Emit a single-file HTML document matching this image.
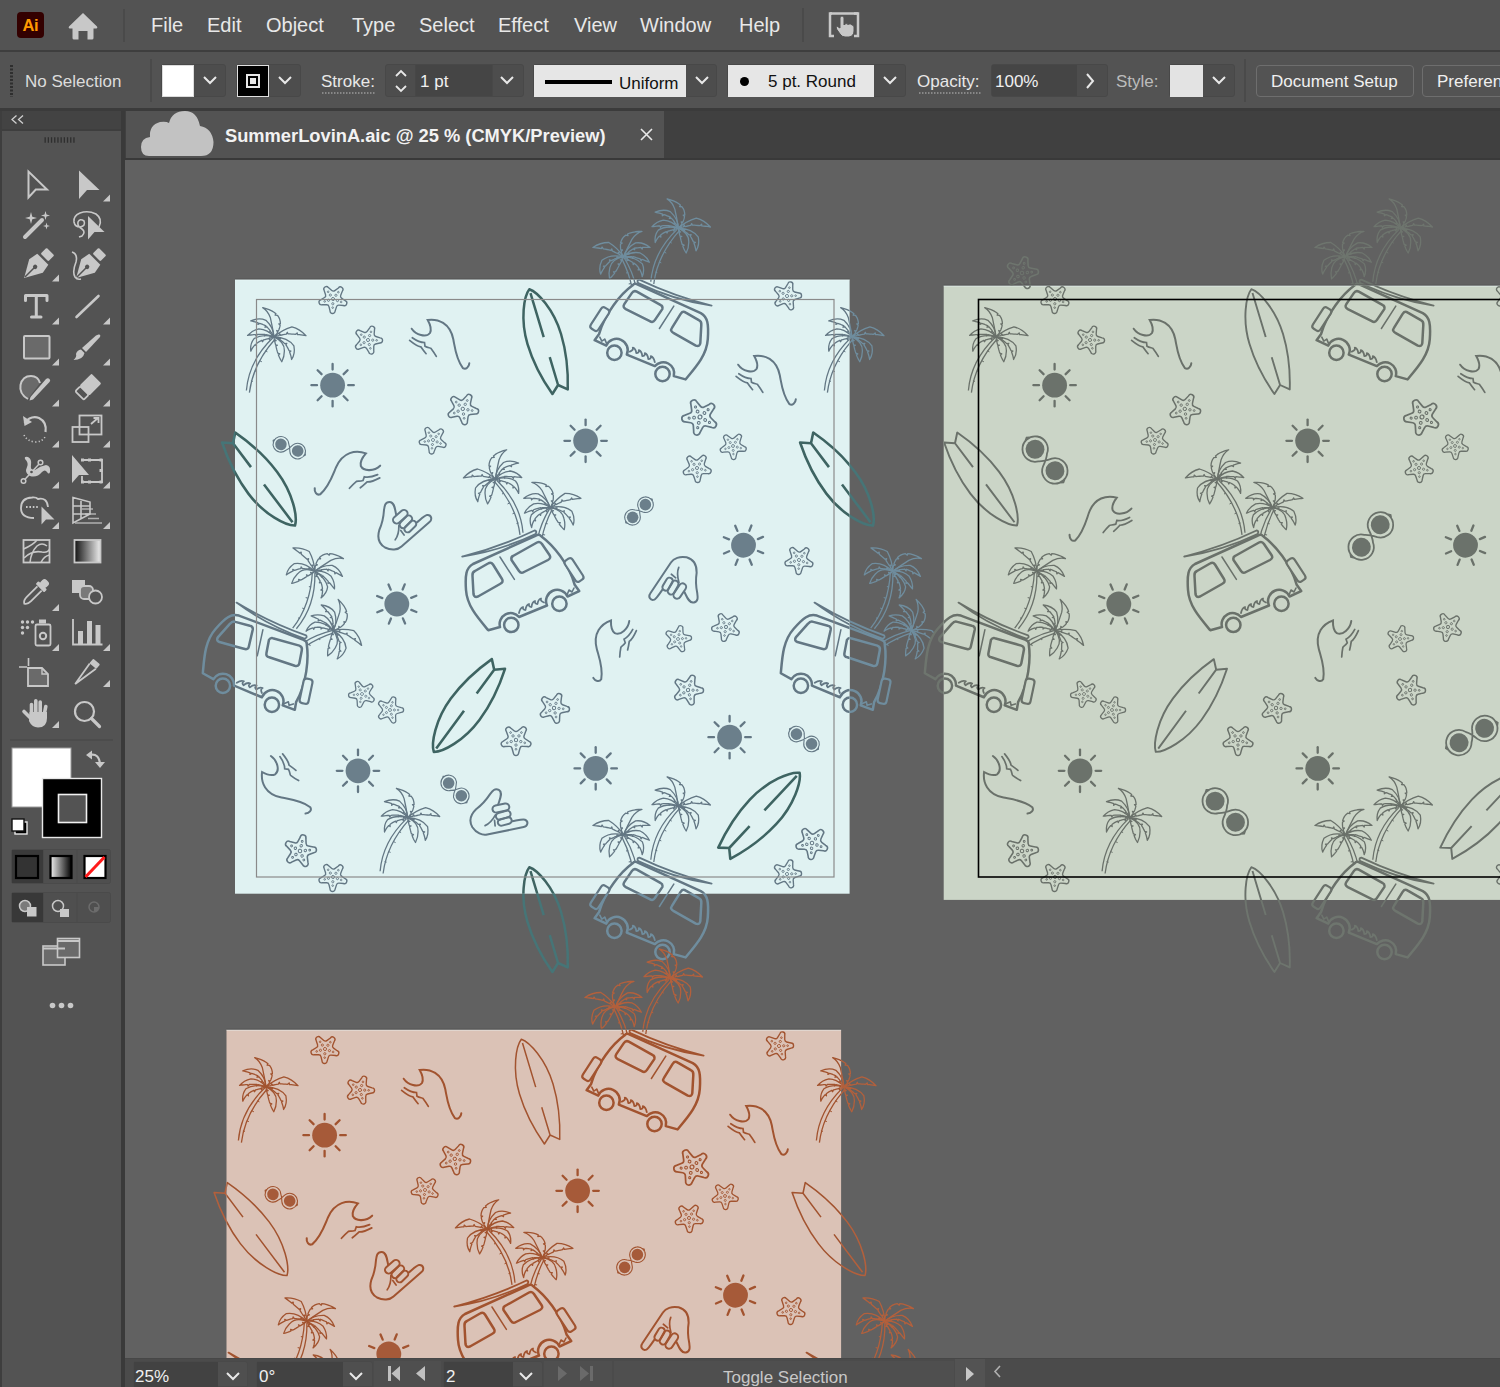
<!DOCTYPE html>
<html><head><meta charset="utf-8">
<style>
*{margin:0;padding:0;box-sizing:border-box}
html,body{width:1500px;height:1387px;overflow:hidden;background:#616161;font-family:"Liberation Sans",sans-serif;color:#e8e8e8}
.a{position:absolute}
.t{position:absolute;white-space:pre;line-height:1}
#menubar{left:0;top:0;width:1500px;height:50px;background:#535353}
#ctrlbar{left:0;top:52px;width:1500px;height:57px;background:#535353}
.line{position:absolute;background:#3b3b3b}
.box{position:absolute;border:1px solid #484848;border-radius:3px;background:#4d4d4d}
.dd{position:absolute}
.dd svg{position:absolute;left:50%;top:50%;transform:translate(-50%,-50%)}
</style></head><body>
<!-- canvas -->
<div class="a" style="left:125px;top:160px;width:1375px;height:1199px;background:#616161"></div>

<div id="art" class="a" style="left:0;top:0;width:1500px;height:1387px"><svg class="a" style="left:0;top:0" width="1500" height="1387" viewBox="0 0 1500 1387"><defs><g id="t1" stroke="currentColor"><g transform="translate(273.9 336.8)"><g fill="none" stroke-width="1.3" stroke-linejoin="round"><path d="M0 0 Q-1 -8 -3.5 -19 Q-6 -26 -11.2 -29.2 L-7.84 -28.28 -4.83 -27.21 -2.17 -25.98 0.13 -24.59 2.08 -23.05 1.23 -21.62 3.67 -21.35 4.91 -19.5 5.79 -17.49 6.32 -15.32 6.5 -13 4.87 -12.93 6.26 -11.43 5.92 -9.92 5.49 -8.47 4.98 -7.08 4.38 -5.75 2.83 -6.26 3.68 -4.48 2.9 -3.27 2.02 -2.12 1.05 -1.03 0 0Z"/><path d="M0 0 Q0 -9 -8 -16.5 Q-15 -19.5 -23.1 -15.9 L-21.67 -15.6 -20.22 -15.26 -18.76 -14.87 -17.28 -14.44 -15.78 -13.97 -15.98 -12.36 -14.26 -13.46 -12.72 -12.91 -11.16 -12.32 -9.59 -11.68 -8 -11 -8.95 -9.68 -7.02 -9.99 -6.08 -8.96 -5.18 -7.91 -4.32 -6.84 -3.5 -5.75 -4.65 -4.61 -2.72 -4.64 -1.98 -3.51 -1.28 -2.36 -0.62 -1.19 0 0Z"/><path d="M0 0 Q-6 -7.5 -15 -8 Q-22 -6.5 -26.3 -1.4 L-24.81 -1.61 -23.27 -1.8 -21.68 -1.96 -20.03 -2.1 -18.32 -2.23 -17.88 -0.65 -16.57 -2.32 -14.76 -2.4 -12.89 -2.46 -10.97 -2.49 -9 -2.5 -9.16 -0.89 -7.83 -2.21 -6.72 -1.92 -5.67 -1.64 -4.68 -1.38 -3.75 -1.12 -4.01 0.46 -2.88 -0.88 -2.07 -0.65 -1.32 -0.42 -0.63 -0.2 0 0Z"/><path d="M0 0 Q-12 -3 -20 2 Q-24 7 -23.1 14.4 L-22.43 12.96 -21.66 11.6 -20.8 10.31 -19.84 9.1 -18.77 7.97 -17.47 8.95 -17.62 6.92 -16.36 5.95 -15 5.06 -13.55 4.24 -12 3.5 -11.3 4.97 -10.44 3.1 -8.96 2.72 -7.56 2.34 -6.24 1.98 -5 1.62 -4.31 3.09 -3.84 1.28 -2.76 0.95 -1.76 0.62 -0.84 0.3 0 0Z"/><path d="M0 0 Q11 5 10.5 14 Q10.5 20 7.9 24.9 L7.14 23.68 6.42 22.38 5.73 20.99 5.08 19.52 4.47 17.98 5.87 17.12 3.9 16.34 3.37 14.63 2.88 12.84 2.42 10.96 2 9 3.48 8.35 1.71 8.01 1.44 7.04 1.19 6.09 0.96 5.16 0.75 4.25 2.28 3.74 0.56 3.36 0.39 2.49 0.24 1.64 0.11 0.81 0 0Z"/><path d="M0 0 Q14 0.5 20 9 Q21.5 17 17.7 22.7 L17.43 21.17 17.09 19.65 16.68 18.14 16.21 16.65 15.68 15.18 17.03 14.27 15.07 13.71 14.4 12.26 13.67 10.83 12.87 9.41 12 8 12.87 6.62 10.8 6.84 9.6 5.76 8.4 4.76 7.2 3.84 6 3 6.62 1.5 4.8 2.24 3.6 1.56 2.4 0.96 1.2 0.44 0 0Z"/><path d="M0 0 Q8 -7 18 -10 Q26 -8 32.1 -1.1 L30.46 -1.37 28.78 -1.62 27.07 -1.86 25.32 -2.08 23.52 -2.27 23.32 -3.9 21.7 -2.46 19.83 -2.62 17.92 -2.76 15.98 -2.89 14 -3 13.39 -4.51 12.42 -2.7 10.88 -2.4 9.38 -2.1 7.92 -1.8 6.5 -1.5 5.88 -3 5.12 -1.2 3.78 -0.9 2.48 -0.6 1.22 -0.3 0 0Z"/><path d="M-1 1 Q-25 24 -27.5 53.7 M1.5 2 Q-21 27 -24.5 55.9"/><path d="M-8.5 14 l2 1 M-14 24 l2 1 M-19 34 l2 0.8 M-23 44 l2 0.6" stroke-width="1"/></g></g><g transform="translate(851.9 336.8)"><g fill="none" stroke-width="1.3" stroke-linejoin="round"><path d="M0 0 Q-1 -8 -3.5 -19 Q-6 -26 -11.2 -29.2 L-7.84 -28.28 -4.83 -27.21 -2.17 -25.98 0.13 -24.59 2.08 -23.05 1.23 -21.62 3.67 -21.35 4.91 -19.5 5.79 -17.49 6.32 -15.32 6.5 -13 4.87 -12.93 6.26 -11.43 5.92 -9.92 5.49 -8.47 4.98 -7.08 4.38 -5.75 2.83 -6.26 3.68 -4.48 2.9 -3.27 2.02 -2.12 1.05 -1.03 0 0Z"/><path d="M0 0 Q0 -9 -8 -16.5 Q-15 -19.5 -23.1 -15.9 L-21.67 -15.6 -20.22 -15.26 -18.76 -14.87 -17.28 -14.44 -15.78 -13.97 -15.98 -12.36 -14.26 -13.46 -12.72 -12.91 -11.16 -12.32 -9.59 -11.68 -8 -11 -8.95 -9.68 -7.02 -9.99 -6.08 -8.96 -5.18 -7.91 -4.32 -6.84 -3.5 -5.75 -4.65 -4.61 -2.72 -4.64 -1.98 -3.51 -1.28 -2.36 -0.62 -1.19 0 0Z"/><path d="M0 0 Q-6 -7.5 -15 -8 Q-22 -6.5 -26.3 -1.4 L-24.81 -1.61 -23.27 -1.8 -21.68 -1.96 -20.03 -2.1 -18.32 -2.23 -17.88 -0.65 -16.57 -2.32 -14.76 -2.4 -12.89 -2.46 -10.97 -2.49 -9 -2.5 -9.16 -0.89 -7.83 -2.21 -6.72 -1.92 -5.67 -1.64 -4.68 -1.38 -3.75 -1.12 -4.01 0.46 -2.88 -0.88 -2.07 -0.65 -1.32 -0.42 -0.63 -0.2 0 0Z"/><path d="M0 0 Q-12 -3 -20 2 Q-24 7 -23.1 14.4 L-22.43 12.96 -21.66 11.6 -20.8 10.31 -19.84 9.1 -18.77 7.97 -17.47 8.95 -17.62 6.92 -16.36 5.95 -15 5.06 -13.55 4.24 -12 3.5 -11.3 4.97 -10.44 3.1 -8.96 2.72 -7.56 2.34 -6.24 1.98 -5 1.62 -4.31 3.09 -3.84 1.28 -2.76 0.95 -1.76 0.62 -0.84 0.3 0 0Z"/><path d="M0 0 Q11 5 10.5 14 Q10.5 20 7.9 24.9 L7.14 23.68 6.42 22.38 5.73 20.99 5.08 19.52 4.47 17.98 5.87 17.12 3.9 16.34 3.37 14.63 2.88 12.84 2.42 10.96 2 9 3.48 8.35 1.71 8.01 1.44 7.04 1.19 6.09 0.96 5.16 0.75 4.25 2.28 3.74 0.56 3.36 0.39 2.49 0.24 1.64 0.11 0.81 0 0Z"/><path d="M0 0 Q14 0.5 20 9 Q21.5 17 17.7 22.7 L17.43 21.17 17.09 19.65 16.68 18.14 16.21 16.65 15.68 15.18 17.03 14.27 15.07 13.71 14.4 12.26 13.67 10.83 12.87 9.41 12 8 12.87 6.62 10.8 6.84 9.6 5.76 8.4 4.76 7.2 3.84 6 3 6.62 1.5 4.8 2.24 3.6 1.56 2.4 0.96 1.2 0.44 0 0Z"/><path d="M0 0 Q8 -7 18 -10 Q26 -8 32.1 -1.1 L30.46 -1.37 28.78 -1.62 27.07 -1.86 25.32 -2.08 23.52 -2.27 23.32 -3.9 21.7 -2.46 19.83 -2.62 17.92 -2.76 15.98 -2.89 14 -3 13.39 -4.51 12.42 -2.7 10.88 -2.4 9.38 -2.1 7.92 -1.8 6.5 -1.5 5.88 -3 5.12 -1.2 3.78 -0.9 2.48 -0.6 1.22 -0.3 0 0Z"/><path d="M-1 1 Q-25 24 -27.5 53.7 M1.5 2 Q-21 27 -24.5 55.9"/><path d="M-8.5 14 l2 1 M-14 24 l2 1 M-19 34 l2 0.8 M-23 44 l2 0.6" stroke-width="1"/></g></g><g transform="translate(407.6 817.6)"><g fill="none" stroke-width="1.3" stroke-linejoin="round"><path d="M0 0 Q-1 -8 -3.5 -19 Q-6 -26 -11.2 -29.2 L-7.84 -28.28 -4.83 -27.21 -2.17 -25.98 0.13 -24.59 2.08 -23.05 1.23 -21.62 3.67 -21.35 4.91 -19.5 5.79 -17.49 6.32 -15.32 6.5 -13 4.87 -12.93 6.26 -11.43 5.92 -9.92 5.49 -8.47 4.98 -7.08 4.38 -5.75 2.83 -6.26 3.68 -4.48 2.9 -3.27 2.02 -2.12 1.05 -1.03 0 0Z"/><path d="M0 0 Q0 -9 -8 -16.5 Q-15 -19.5 -23.1 -15.9 L-21.67 -15.6 -20.22 -15.26 -18.76 -14.87 -17.28 -14.44 -15.78 -13.97 -15.98 -12.36 -14.26 -13.46 -12.72 -12.91 -11.16 -12.32 -9.59 -11.68 -8 -11 -8.95 -9.68 -7.02 -9.99 -6.08 -8.96 -5.18 -7.91 -4.32 -6.84 -3.5 -5.75 -4.65 -4.61 -2.72 -4.64 -1.98 -3.51 -1.28 -2.36 -0.62 -1.19 0 0Z"/><path d="M0 0 Q-6 -7.5 -15 -8 Q-22 -6.5 -26.3 -1.4 L-24.81 -1.61 -23.27 -1.8 -21.68 -1.96 -20.03 -2.1 -18.32 -2.23 -17.88 -0.65 -16.57 -2.32 -14.76 -2.4 -12.89 -2.46 -10.97 -2.49 -9 -2.5 -9.16 -0.89 -7.83 -2.21 -6.72 -1.92 -5.67 -1.64 -4.68 -1.38 -3.75 -1.12 -4.01 0.46 -2.88 -0.88 -2.07 -0.65 -1.32 -0.42 -0.63 -0.2 0 0Z"/><path d="M0 0 Q-12 -3 -20 2 Q-24 7 -23.1 14.4 L-22.43 12.96 -21.66 11.6 -20.8 10.31 -19.84 9.1 -18.77 7.97 -17.47 8.95 -17.62 6.92 -16.36 5.95 -15 5.06 -13.55 4.24 -12 3.5 -11.3 4.97 -10.44 3.1 -8.96 2.72 -7.56 2.34 -6.24 1.98 -5 1.62 -4.31 3.09 -3.84 1.28 -2.76 0.95 -1.76 0.62 -0.84 0.3 0 0Z"/><path d="M0 0 Q11 5 10.5 14 Q10.5 20 7.9 24.9 L7.14 23.68 6.42 22.38 5.73 20.99 5.08 19.52 4.47 17.98 5.87 17.12 3.9 16.34 3.37 14.63 2.88 12.84 2.42 10.96 2 9 3.48 8.35 1.71 8.01 1.44 7.04 1.19 6.09 0.96 5.16 0.75 4.25 2.28 3.74 0.56 3.36 0.39 2.49 0.24 1.64 0.11 0.81 0 0Z"/><path d="M0 0 Q14 0.5 20 9 Q21.5 17 17.7 22.7 L17.43 21.17 17.09 19.65 16.68 18.14 16.21 16.65 15.68 15.18 17.03 14.27 15.07 13.71 14.4 12.26 13.67 10.83 12.87 9.41 12 8 12.87 6.62 10.8 6.84 9.6 5.76 8.4 4.76 7.2 3.84 6 3 6.62 1.5 4.8 2.24 3.6 1.56 2.4 0.96 1.2 0.44 0 0Z"/><path d="M0 0 Q8 -7 18 -10 Q26 -8 32.1 -1.1 L30.46 -1.37 28.78 -1.62 27.07 -1.86 25.32 -2.08 23.52 -2.27 23.32 -3.9 21.7 -2.46 19.83 -2.62 17.92 -2.76 15.98 -2.89 14 -3 13.39 -4.51 12.42 -2.7 10.88 -2.4 9.38 -2.1 7.92 -1.8 6.5 -1.5 5.88 -3 5.12 -1.2 3.78 -0.9 2.48 -0.6 1.22 -0.3 0 0Z"/><path d="M-1 1 Q-25 24 -27.5 53.7 M1.5 2 Q-21 27 -24.5 55.9"/><path d="M-8.5 14 l2 1 M-14 24 l2 1 M-19 34 l2 0.8 M-23 44 l2 0.6" stroke-width="1"/></g></g><g transform="translate(333 299) rotate(10) scale(0.91 0.91)"><path d="M3.72 -12.97 A2.8 2.8 0 0 1 8.67 -10.34 L7.63 -5.56 Q7.19 -3.51 9.08 -2.59 L13.49 -0.47 A2.8 2.8 0 0 1 12.51 5.05 L7.64 5.54 Q5.56 5.75 5.27 7.83 L4.61 12.68 A2.8 2.8 0 0 1 -0.94 13.46 L-2.91 8.98 Q-3.76 7.06 -5.82 7.44 L-10.64 8.3 A2.8 2.8 0 0 1 -13.09 3.27 L-9.44 0.01 Q-7.88 -1.39 -8.87 -3.24 L-11.18 -7.55 A2.8 2.8 0 0 1 -7.16 -11.44 L-2.93 -8.98 Q-1.11 -7.92 0.34 -9.44 L3.72 -12.97Z" fill="none" stroke-width="1.5"/><circle r="1.7" fill="none" stroke-width="1"/><circle cx="2.44" cy="-4.59" r="1.2" fill="none" stroke-width="0.9"/><circle cx="4.46" cy="-8.39" r="0.9" fill="none" stroke-width="0.9"/><circle cx="5.12" cy="0.9" r="1.2" fill="none" stroke-width="0.9"/><circle cx="9.36" cy="1.65" r="0.9" fill="none" stroke-width="0.9"/><circle cx="0.72" cy="5.15" r="1.2" fill="none" stroke-width="0.9"/><circle cx="1.32" cy="9.41" r="0.9" fill="none" stroke-width="0.9"/><circle cx="-4.67" cy="2.28" r="1.2" fill="none" stroke-width="0.9"/><circle cx="-8.54" cy="4.16" r="0.9" fill="none" stroke-width="0.9"/><circle cx="-3.61" cy="-3.74" r="1.2" fill="none" stroke-width="0.9"/><circle cx="-6.6" cy="-6.83" r="0.9" fill="none" stroke-width="0.9"/></g><g transform="translate(333 877) rotate(10) scale(0.91 0.91)"><path d="M3.72 -12.97 A2.8 2.8 0 0 1 8.67 -10.34 L7.63 -5.56 Q7.19 -3.51 9.08 -2.59 L13.49 -0.47 A2.8 2.8 0 0 1 12.51 5.05 L7.64 5.54 Q5.56 5.75 5.27 7.83 L4.61 12.68 A2.8 2.8 0 0 1 -0.94 13.46 L-2.91 8.98 Q-3.76 7.06 -5.82 7.44 L-10.64 8.3 A2.8 2.8 0 0 1 -13.09 3.27 L-9.44 0.01 Q-7.88 -1.39 -8.87 -3.24 L-11.18 -7.55 A2.8 2.8 0 0 1 -7.16 -11.44 L-2.93 -8.98 Q-1.11 -7.92 0.34 -9.44 L3.72 -12.97Z" fill="none" stroke-width="1.5"/><circle r="1.7" fill="none" stroke-width="1"/><circle cx="2.44" cy="-4.59" r="1.2" fill="none" stroke-width="0.9"/><circle cx="4.46" cy="-8.39" r="0.9" fill="none" stroke-width="0.9"/><circle cx="5.12" cy="0.9" r="1.2" fill="none" stroke-width="0.9"/><circle cx="9.36" cy="1.65" r="0.9" fill="none" stroke-width="0.9"/><circle cx="0.72" cy="5.15" r="1.2" fill="none" stroke-width="0.9"/><circle cx="1.32" cy="9.41" r="0.9" fill="none" stroke-width="0.9"/><circle cx="-4.67" cy="2.28" r="1.2" fill="none" stroke-width="0.9"/><circle cx="-8.54" cy="4.16" r="0.9" fill="none" stroke-width="0.9"/><circle cx="-3.61" cy="-3.74" r="1.2" fill="none" stroke-width="0.9"/><circle cx="-6.6" cy="-6.83" r="0.9" fill="none" stroke-width="0.9"/></g><g transform="translate(368 340) rotate(-8) scale(0.91 0.91)"><path d="M3.72 -12.97 A2.8 2.8 0 0 1 8.67 -10.34 L7.63 -5.56 Q7.19 -3.51 9.08 -2.59 L13.49 -0.47 A2.8 2.8 0 0 1 12.51 5.05 L7.64 5.54 Q5.56 5.75 5.27 7.83 L4.61 12.68 A2.8 2.8 0 0 1 -0.94 13.46 L-2.91 8.98 Q-3.76 7.06 -5.82 7.44 L-10.64 8.3 A2.8 2.8 0 0 1 -13.09 3.27 L-9.44 0.01 Q-7.88 -1.39 -8.87 -3.24 L-11.18 -7.55 A2.8 2.8 0 0 1 -7.16 -11.44 L-2.93 -8.98 Q-1.11 -7.92 0.34 -9.44 L3.72 -12.97Z" fill="none" stroke-width="1.5"/><circle r="1.7" fill="none" stroke-width="1"/><circle cx="2.44" cy="-4.59" r="1.2" fill="none" stroke-width="0.9"/><circle cx="4.46" cy="-8.39" r="0.9" fill="none" stroke-width="0.9"/><circle cx="5.12" cy="0.9" r="1.2" fill="none" stroke-width="0.9"/><circle cx="9.36" cy="1.65" r="0.9" fill="none" stroke-width="0.9"/><circle cx="0.72" cy="5.15" r="1.2" fill="none" stroke-width="0.9"/><circle cx="1.32" cy="9.41" r="0.9" fill="none" stroke-width="0.9"/><circle cx="-4.67" cy="2.28" r="1.2" fill="none" stroke-width="0.9"/><circle cx="-8.54" cy="4.16" r="0.9" fill="none" stroke-width="0.9"/><circle cx="-3.61" cy="-3.74" r="1.2" fill="none" stroke-width="0.9"/><circle cx="-6.6" cy="-6.83" r="0.9" fill="none" stroke-width="0.9"/></g><g transform="translate(462.8 408.9)"><path d="M3.72 -12.97 A2.8 2.8 0 0 1 8.67 -10.34 L7.63 -5.56 Q7.19 -3.51 9.08 -2.59 L13.49 -0.47 A2.8 2.8 0 0 1 12.51 5.05 L7.64 5.54 Q5.56 5.75 5.27 7.83 L4.61 12.68 A2.8 2.8 0 0 1 -0.94 13.46 L-2.91 8.98 Q-3.76 7.06 -5.82 7.44 L-10.64 8.3 A2.8 2.8 0 0 1 -13.09 3.27 L-9.44 0.01 Q-7.88 -1.39 -8.87 -3.24 L-11.18 -7.55 A2.8 2.8 0 0 1 -7.16 -11.44 L-2.93 -8.98 Q-1.11 -7.92 0.34 -9.44 L3.72 -12.97Z" fill="none" stroke-width="1.5"/><circle r="1.7" fill="none" stroke-width="1"/><circle cx="2.44" cy="-4.59" r="1.2" fill="none" stroke-width="0.9"/><circle cx="4.46" cy="-8.39" r="0.9" fill="none" stroke-width="0.9"/><circle cx="5.12" cy="0.9" r="1.2" fill="none" stroke-width="0.9"/><circle cx="9.36" cy="1.65" r="0.9" fill="none" stroke-width="0.9"/><circle cx="0.72" cy="5.15" r="1.2" fill="none" stroke-width="0.9"/><circle cx="1.32" cy="9.41" r="0.9" fill="none" stroke-width="0.9"/><circle cx="-4.67" cy="2.28" r="1.2" fill="none" stroke-width="0.9"/><circle cx="-8.54" cy="4.16" r="0.9" fill="none" stroke-width="0.9"/><circle cx="-3.61" cy="-3.74" r="1.2" fill="none" stroke-width="0.9"/><circle cx="-6.6" cy="-6.83" r="0.9" fill="none" stroke-width="0.9"/></g><g transform="translate(433 440) rotate(15) scale(0.88 0.88)"><path d="M3.72 -12.97 A2.8 2.8 0 0 1 8.67 -10.34 L7.63 -5.56 Q7.19 -3.51 9.08 -2.59 L13.49 -0.47 A2.8 2.8 0 0 1 12.51 5.05 L7.64 5.54 Q5.56 5.75 5.27 7.83 L4.61 12.68 A2.8 2.8 0 0 1 -0.94 13.46 L-2.91 8.98 Q-3.76 7.06 -5.82 7.44 L-10.64 8.3 A2.8 2.8 0 0 1 -13.09 3.27 L-9.44 0.01 Q-7.88 -1.39 -8.87 -3.24 L-11.18 -7.55 A2.8 2.8 0 0 1 -7.16 -11.44 L-2.93 -8.98 Q-1.11 -7.92 0.34 -9.44 L3.72 -12.97Z" fill="none" stroke-width="1.5"/><circle r="1.7" fill="none" stroke-width="1"/><circle cx="2.44" cy="-4.59" r="1.2" fill="none" stroke-width="0.9"/><circle cx="4.46" cy="-8.39" r="0.9" fill="none" stroke-width="0.9"/><circle cx="5.12" cy="0.9" r="1.2" fill="none" stroke-width="0.9"/><circle cx="9.36" cy="1.65" r="0.9" fill="none" stroke-width="0.9"/><circle cx="0.72" cy="5.15" r="1.2" fill="none" stroke-width="0.9"/><circle cx="1.32" cy="9.41" r="0.9" fill="none" stroke-width="0.9"/><circle cx="-4.67" cy="2.28" r="1.2" fill="none" stroke-width="0.9"/><circle cx="-8.54" cy="4.16" r="0.9" fill="none" stroke-width="0.9"/><circle cx="-3.61" cy="-3.74" r="1.2" fill="none" stroke-width="0.9"/><circle cx="-6.6" cy="-6.83" r="0.9" fill="none" stroke-width="0.9"/></g><g transform="translate(787 296) rotate(-12) scale(0.91 0.91)"><path d="M3.72 -12.97 A2.8 2.8 0 0 1 8.67 -10.34 L7.63 -5.56 Q7.19 -3.51 9.08 -2.59 L13.49 -0.47 A2.8 2.8 0 0 1 12.51 5.05 L7.64 5.54 Q5.56 5.75 5.27 7.83 L4.61 12.68 A2.8 2.8 0 0 1 -0.94 13.46 L-2.91 8.98 Q-3.76 7.06 -5.82 7.44 L-10.64 8.3 A2.8 2.8 0 0 1 -13.09 3.27 L-9.44 0.01 Q-7.88 -1.39 -8.87 -3.24 L-11.18 -7.55 A2.8 2.8 0 0 1 -7.16 -11.44 L-2.93 -8.98 Q-1.11 -7.92 0.34 -9.44 L3.72 -12.97Z" fill="none" stroke-width="1.5"/><circle r="1.7" fill="none" stroke-width="1"/><circle cx="2.44" cy="-4.59" r="1.2" fill="none" stroke-width="0.9"/><circle cx="4.46" cy="-8.39" r="0.9" fill="none" stroke-width="0.9"/><circle cx="5.12" cy="0.9" r="1.2" fill="none" stroke-width="0.9"/><circle cx="9.36" cy="1.65" r="0.9" fill="none" stroke-width="0.9"/><circle cx="0.72" cy="5.15" r="1.2" fill="none" stroke-width="0.9"/><circle cx="1.32" cy="9.41" r="0.9" fill="none" stroke-width="0.9"/><circle cx="-4.67" cy="2.28" r="1.2" fill="none" stroke-width="0.9"/><circle cx="-8.54" cy="4.16" r="0.9" fill="none" stroke-width="0.9"/><circle cx="-3.61" cy="-3.74" r="1.2" fill="none" stroke-width="0.9"/><circle cx="-6.6" cy="-6.83" r="0.9" fill="none" stroke-width="0.9"/></g><g transform="translate(787 874) rotate(-12) scale(0.91 0.91)"><path d="M3.72 -12.97 A2.8 2.8 0 0 1 8.67 -10.34 L7.63 -5.56 Q7.19 -3.51 9.08 -2.59 L13.49 -0.47 A2.8 2.8 0 0 1 12.51 5.05 L7.64 5.54 Q5.56 5.75 5.27 7.83 L4.61 12.68 A2.8 2.8 0 0 1 -0.94 13.46 L-2.91 8.98 Q-3.76 7.06 -5.82 7.44 L-10.64 8.3 A2.8 2.8 0 0 1 -13.09 3.27 L-9.44 0.01 Q-7.88 -1.39 -8.87 -3.24 L-11.18 -7.55 A2.8 2.8 0 0 1 -7.16 -11.44 L-2.93 -8.98 Q-1.11 -7.92 0.34 -9.44 L3.72 -12.97Z" fill="none" stroke-width="1.5"/><circle r="1.7" fill="none" stroke-width="1"/><circle cx="2.44" cy="-4.59" r="1.2" fill="none" stroke-width="0.9"/><circle cx="4.46" cy="-8.39" r="0.9" fill="none" stroke-width="0.9"/><circle cx="5.12" cy="0.9" r="1.2" fill="none" stroke-width="0.9"/><circle cx="9.36" cy="1.65" r="0.9" fill="none" stroke-width="0.9"/><circle cx="0.72" cy="5.15" r="1.2" fill="none" stroke-width="0.9"/><circle cx="1.32" cy="9.41" r="0.9" fill="none" stroke-width="0.9"/><circle cx="-4.67" cy="2.28" r="1.2" fill="none" stroke-width="0.9"/><circle cx="-8.54" cy="4.16" r="0.9" fill="none" stroke-width="0.9"/><circle cx="-3.61" cy="-3.74" r="1.2" fill="none" stroke-width="0.9"/><circle cx="-6.6" cy="-6.83" r="0.9" fill="none" stroke-width="0.9"/></g><g transform="translate(700 417) rotate(20) scale(1.15 1.15)"><path d="M3.72 -12.97 A2.8 2.8 0 0 1 8.67 -10.34 L7.63 -5.56 Q7.19 -3.51 9.08 -2.59 L13.49 -0.47 A2.8 2.8 0 0 1 12.51 5.05 L7.64 5.54 Q5.56 5.75 5.27 7.83 L4.61 12.68 A2.8 2.8 0 0 1 -0.94 13.46 L-2.91 8.98 Q-3.76 7.06 -5.82 7.44 L-10.64 8.3 A2.8 2.8 0 0 1 -13.09 3.27 L-9.44 0.01 Q-7.88 -1.39 -8.87 -3.24 L-11.18 -7.55 A2.8 2.8 0 0 1 -7.16 -11.44 L-2.93 -8.98 Q-1.11 -7.92 0.34 -9.44 L3.72 -12.97Z" fill="none" stroke-width="1.5"/><circle r="1.7" fill="none" stroke-width="1"/><circle cx="2.44" cy="-4.59" r="1.2" fill="none" stroke-width="0.9"/><circle cx="4.46" cy="-8.39" r="0.9" fill="none" stroke-width="0.9"/><circle cx="5.12" cy="0.9" r="1.2" fill="none" stroke-width="0.9"/><circle cx="9.36" cy="1.65" r="0.9" fill="none" stroke-width="0.9"/><circle cx="0.72" cy="5.15" r="1.2" fill="none" stroke-width="0.9"/><circle cx="1.32" cy="9.41" r="0.9" fill="none" stroke-width="0.9"/><circle cx="-4.67" cy="2.28" r="1.2" fill="none" stroke-width="0.9"/><circle cx="-8.54" cy="4.16" r="0.9" fill="none" stroke-width="0.9"/><circle cx="-3.61" cy="-3.74" r="1.2" fill="none" stroke-width="0.9"/><circle cx="-6.6" cy="-6.83" r="0.9" fill="none" stroke-width="0.9"/></g><g transform="translate(733 446) rotate(5) scale(0.85 0.85)"><path d="M3.72 -12.97 A2.8 2.8 0 0 1 8.67 -10.34 L7.63 -5.56 Q7.19 -3.51 9.08 -2.59 L13.49 -0.47 A2.8 2.8 0 0 1 12.51 5.05 L7.64 5.54 Q5.56 5.75 5.27 7.83 L4.61 12.68 A2.8 2.8 0 0 1 -0.94 13.46 L-2.91 8.98 Q-3.76 7.06 -5.82 7.44 L-10.64 8.3 A2.8 2.8 0 0 1 -13.09 3.27 L-9.44 0.01 Q-7.88 -1.39 -8.87 -3.24 L-11.18 -7.55 A2.8 2.8 0 0 1 -7.16 -11.44 L-2.93 -8.98 Q-1.11 -7.92 0.34 -9.44 L3.72 -12.97Z" fill="none" stroke-width="1.5"/><circle r="1.7" fill="none" stroke-width="1"/><circle cx="2.44" cy="-4.59" r="1.2" fill="none" stroke-width="0.9"/><circle cx="4.46" cy="-8.39" r="0.9" fill="none" stroke-width="0.9"/><circle cx="5.12" cy="0.9" r="1.2" fill="none" stroke-width="0.9"/><circle cx="9.36" cy="1.65" r="0.9" fill="none" stroke-width="0.9"/><circle cx="0.72" cy="5.15" r="1.2" fill="none" stroke-width="0.9"/><circle cx="1.32" cy="9.41" r="0.9" fill="none" stroke-width="0.9"/><circle cx="-4.67" cy="2.28" r="1.2" fill="none" stroke-width="0.9"/><circle cx="-8.54" cy="4.16" r="0.9" fill="none" stroke-width="0.9"/><circle cx="-3.61" cy="-3.74" r="1.2" fill="none" stroke-width="0.9"/><circle cx="-6.6" cy="-6.83" r="0.9" fill="none" stroke-width="0.9"/></g><g transform="translate(697 468) rotate(5) scale(0.91 0.91)"><path d="M3.72 -12.97 A2.8 2.8 0 0 1 8.67 -10.34 L7.63 -5.56 Q7.19 -3.51 9.08 -2.59 L13.49 -0.47 A2.8 2.8 0 0 1 12.51 5.05 L7.64 5.54 Q5.56 5.75 5.27 7.83 L4.61 12.68 A2.8 2.8 0 0 1 -0.94 13.46 L-2.91 8.98 Q-3.76 7.06 -5.82 7.44 L-10.64 8.3 A2.8 2.8 0 0 1 -13.09 3.27 L-9.44 0.01 Q-7.88 -1.39 -8.87 -3.24 L-11.18 -7.55 A2.8 2.8 0 0 1 -7.16 -11.44 L-2.93 -8.98 Q-1.11 -7.92 0.34 -9.44 L3.72 -12.97Z" fill="none" stroke-width="1.5"/><circle r="1.7" fill="none" stroke-width="1"/><circle cx="2.44" cy="-4.59" r="1.2" fill="none" stroke-width="0.9"/><circle cx="4.46" cy="-8.39" r="0.9" fill="none" stroke-width="0.9"/><circle cx="5.12" cy="0.9" r="1.2" fill="none" stroke-width="0.9"/><circle cx="9.36" cy="1.65" r="0.9" fill="none" stroke-width="0.9"/><circle cx="0.72" cy="5.15" r="1.2" fill="none" stroke-width="0.9"/><circle cx="1.32" cy="9.41" r="0.9" fill="none" stroke-width="0.9"/><circle cx="-4.67" cy="2.28" r="1.2" fill="none" stroke-width="0.9"/><circle cx="-8.54" cy="4.16" r="0.9" fill="none" stroke-width="0.9"/><circle cx="-3.61" cy="-3.74" r="1.2" fill="none" stroke-width="0.9"/><circle cx="-6.6" cy="-6.83" r="0.9" fill="none" stroke-width="0.9"/></g><g transform="translate(362 694) rotate(20) scale(0.85 0.85)"><path d="M3.72 -12.97 A2.8 2.8 0 0 1 8.67 -10.34 L7.63 -5.56 Q7.19 -3.51 9.08 -2.59 L13.49 -0.47 A2.8 2.8 0 0 1 12.51 5.05 L7.64 5.54 Q5.56 5.75 5.27 7.83 L4.61 12.68 A2.8 2.8 0 0 1 -0.94 13.46 L-2.91 8.98 Q-3.76 7.06 -5.82 7.44 L-10.64 8.3 A2.8 2.8 0 0 1 -13.09 3.27 L-9.44 0.01 Q-7.88 -1.39 -8.87 -3.24 L-11.18 -7.55 A2.8 2.8 0 0 1 -7.16 -11.44 L-2.93 -8.98 Q-1.11 -7.92 0.34 -9.44 L3.72 -12.97Z" fill="none" stroke-width="1.5"/><circle r="1.7" fill="none" stroke-width="1"/><circle cx="2.44" cy="-4.59" r="1.2" fill="none" stroke-width="0.9"/><circle cx="4.46" cy="-8.39" r="0.9" fill="none" stroke-width="0.9"/><circle cx="5.12" cy="0.9" r="1.2" fill="none" stroke-width="0.9"/><circle cx="9.36" cy="1.65" r="0.9" fill="none" stroke-width="0.9"/><circle cx="0.72" cy="5.15" r="1.2" fill="none" stroke-width="0.9"/><circle cx="1.32" cy="9.41" r="0.9" fill="none" stroke-width="0.9"/><circle cx="-4.67" cy="2.28" r="1.2" fill="none" stroke-width="0.9"/><circle cx="-8.54" cy="4.16" r="0.9" fill="none" stroke-width="0.9"/><circle cx="-3.61" cy="-3.74" r="1.2" fill="none" stroke-width="0.9"/><circle cx="-6.6" cy="-6.83" r="0.9" fill="none" stroke-width="0.9"/></g><g transform="translate(390 710) rotate(-10) scale(0.85 0.85)"><path d="M3.72 -12.97 A2.8 2.8 0 0 1 8.67 -10.34 L7.63 -5.56 Q7.19 -3.51 9.08 -2.59 L13.49 -0.47 A2.8 2.8 0 0 1 12.51 5.05 L7.64 5.54 Q5.56 5.75 5.27 7.83 L4.61 12.68 A2.8 2.8 0 0 1 -0.94 13.46 L-2.91 8.98 Q-3.76 7.06 -5.82 7.44 L-10.64 8.3 A2.8 2.8 0 0 1 -13.09 3.27 L-9.44 0.01 Q-7.88 -1.39 -8.87 -3.24 L-11.18 -7.55 A2.8 2.8 0 0 1 -7.16 -11.44 L-2.93 -8.98 Q-1.11 -7.92 0.34 -9.44 L3.72 -12.97Z" fill="none" stroke-width="1.5"/><circle r="1.7" fill="none" stroke-width="1"/><circle cx="2.44" cy="-4.59" r="1.2" fill="none" stroke-width="0.9"/><circle cx="4.46" cy="-8.39" r="0.9" fill="none" stroke-width="0.9"/><circle cx="5.12" cy="0.9" r="1.2" fill="none" stroke-width="0.9"/><circle cx="9.36" cy="1.65" r="0.9" fill="none" stroke-width="0.9"/><circle cx="0.72" cy="5.15" r="1.2" fill="none" stroke-width="0.9"/><circle cx="1.32" cy="9.41" r="0.9" fill="none" stroke-width="0.9"/><circle cx="-4.67" cy="2.28" r="1.2" fill="none" stroke-width="0.9"/><circle cx="-8.54" cy="4.16" r="0.9" fill="none" stroke-width="0.9"/><circle cx="-3.61" cy="-3.74" r="1.2" fill="none" stroke-width="0.9"/><circle cx="-6.6" cy="-6.83" r="0.9" fill="none" stroke-width="0.9"/></g><g transform="translate(516 740) rotate(8) scale(0.97 0.97)"><path d="M3.72 -12.97 A2.8 2.8 0 0 1 8.67 -10.34 L7.63 -5.56 Q7.19 -3.51 9.08 -2.59 L13.49 -0.47 A2.8 2.8 0 0 1 12.51 5.05 L7.64 5.54 Q5.56 5.75 5.27 7.83 L4.61 12.68 A2.8 2.8 0 0 1 -0.94 13.46 L-2.91 8.98 Q-3.76 7.06 -5.82 7.44 L-10.64 8.3 A2.8 2.8 0 0 1 -13.09 3.27 L-9.44 0.01 Q-7.88 -1.39 -8.87 -3.24 L-11.18 -7.55 A2.8 2.8 0 0 1 -7.16 -11.44 L-2.93 -8.98 Q-1.11 -7.92 0.34 -9.44 L3.72 -12.97Z" fill="none" stroke-width="1.5"/><circle r="1.7" fill="none" stroke-width="1"/><circle cx="2.44" cy="-4.59" r="1.2" fill="none" stroke-width="0.9"/><circle cx="4.46" cy="-8.39" r="0.9" fill="none" stroke-width="0.9"/><circle cx="5.12" cy="0.9" r="1.2" fill="none" stroke-width="0.9"/><circle cx="9.36" cy="1.65" r="0.9" fill="none" stroke-width="0.9"/><circle cx="0.72" cy="5.15" r="1.2" fill="none" stroke-width="0.9"/><circle cx="1.32" cy="9.41" r="0.9" fill="none" stroke-width="0.9"/><circle cx="-4.67" cy="2.28" r="1.2" fill="none" stroke-width="0.9"/><circle cx="-8.54" cy="4.16" r="0.9" fill="none" stroke-width="0.9"/><circle cx="-3.61" cy="-3.74" r="1.2" fill="none" stroke-width="0.9"/><circle cx="-6.6" cy="-6.83" r="0.9" fill="none" stroke-width="0.9"/></g><g transform="translate(554 708) rotate(-5) scale(0.97 0.97)"><path d="M3.72 -12.97 A2.8 2.8 0 0 1 8.67 -10.34 L7.63 -5.56 Q7.19 -3.51 9.08 -2.59 L13.49 -0.47 A2.8 2.8 0 0 1 12.51 5.05 L7.64 5.54 Q5.56 5.75 5.27 7.83 L4.61 12.68 A2.8 2.8 0 0 1 -0.94 13.46 L-2.91 8.98 Q-3.76 7.06 -5.82 7.44 L-10.64 8.3 A2.8 2.8 0 0 1 -13.09 3.27 L-9.44 0.01 Q-7.88 -1.39 -8.87 -3.24 L-11.18 -7.55 A2.8 2.8 0 0 1 -7.16 -11.44 L-2.93 -8.98 Q-1.11 -7.92 0.34 -9.44 L3.72 -12.97Z" fill="none" stroke-width="1.5"/><circle r="1.7" fill="none" stroke-width="1"/><circle cx="2.44" cy="-4.59" r="1.2" fill="none" stroke-width="0.9"/><circle cx="4.46" cy="-8.39" r="0.9" fill="none" stroke-width="0.9"/><circle cx="5.12" cy="0.9" r="1.2" fill="none" stroke-width="0.9"/><circle cx="9.36" cy="1.65" r="0.9" fill="none" stroke-width="0.9"/><circle cx="0.72" cy="5.15" r="1.2" fill="none" stroke-width="0.9"/><circle cx="1.32" cy="9.41" r="0.9" fill="none" stroke-width="0.9"/><circle cx="-4.67" cy="2.28" r="1.2" fill="none" stroke-width="0.9"/><circle cx="-8.54" cy="4.16" r="0.9" fill="none" stroke-width="0.9"/><circle cx="-3.61" cy="-3.74" r="1.2" fill="none" stroke-width="0.9"/><circle cx="-6.6" cy="-6.83" r="0.9" fill="none" stroke-width="0.9"/></g><g transform="translate(300 851) rotate(-15) scale(1.03 1.03)"><path d="M3.72 -12.97 A2.8 2.8 0 0 1 8.67 -10.34 L7.63 -5.56 Q7.19 -3.51 9.08 -2.59 L13.49 -0.47 A2.8 2.8 0 0 1 12.51 5.05 L7.64 5.54 Q5.56 5.75 5.27 7.83 L4.61 12.68 A2.8 2.8 0 0 1 -0.94 13.46 L-2.91 8.98 Q-3.76 7.06 -5.82 7.44 L-10.64 8.3 A2.8 2.8 0 0 1 -13.09 3.27 L-9.44 0.01 Q-7.88 -1.39 -8.87 -3.24 L-11.18 -7.55 A2.8 2.8 0 0 1 -7.16 -11.44 L-2.93 -8.98 Q-1.11 -7.92 0.34 -9.44 L3.72 -12.97Z" fill="none" stroke-width="1.5"/><circle r="1.7" fill="none" stroke-width="1"/><circle cx="2.44" cy="-4.59" r="1.2" fill="none" stroke-width="0.9"/><circle cx="4.46" cy="-8.39" r="0.9" fill="none" stroke-width="0.9"/><circle cx="5.12" cy="0.9" r="1.2" fill="none" stroke-width="0.9"/><circle cx="9.36" cy="1.65" r="0.9" fill="none" stroke-width="0.9"/><circle cx="0.72" cy="5.15" r="1.2" fill="none" stroke-width="0.9"/><circle cx="1.32" cy="9.41" r="0.9" fill="none" stroke-width="0.9"/><circle cx="-4.67" cy="2.28" r="1.2" fill="none" stroke-width="0.9"/><circle cx="-8.54" cy="4.16" r="0.9" fill="none" stroke-width="0.9"/><circle cx="-3.61" cy="-3.74" r="1.2" fill="none" stroke-width="0.9"/><circle cx="-6.6" cy="-6.83" r="0.9" fill="none" stroke-width="0.9"/></g><g transform="translate(799 560) rotate(10) scale(0.91 0.91)"><path d="M3.72 -12.97 A2.8 2.8 0 0 1 8.67 -10.34 L7.63 -5.56 Q7.19 -3.51 9.08 -2.59 L13.49 -0.47 A2.8 2.8 0 0 1 12.51 5.05 L7.64 5.54 Q5.56 5.75 5.27 7.83 L4.61 12.68 A2.8 2.8 0 0 1 -0.94 13.46 L-2.91 8.98 Q-3.76 7.06 -5.82 7.44 L-10.64 8.3 A2.8 2.8 0 0 1 -13.09 3.27 L-9.44 0.01 Q-7.88 -1.39 -8.87 -3.24 L-11.18 -7.55 A2.8 2.8 0 0 1 -7.16 -11.44 L-2.93 -8.98 Q-1.11 -7.92 0.34 -9.44 L3.72 -12.97Z" fill="none" stroke-width="1.5"/><circle r="1.7" fill="none" stroke-width="1"/><circle cx="2.44" cy="-4.59" r="1.2" fill="none" stroke-width="0.9"/><circle cx="4.46" cy="-8.39" r="0.9" fill="none" stroke-width="0.9"/><circle cx="5.12" cy="0.9" r="1.2" fill="none" stroke-width="0.9"/><circle cx="9.36" cy="1.65" r="0.9" fill="none" stroke-width="0.9"/><circle cx="0.72" cy="5.15" r="1.2" fill="none" stroke-width="0.9"/><circle cx="1.32" cy="9.41" r="0.9" fill="none" stroke-width="0.9"/><circle cx="-4.67" cy="2.28" r="1.2" fill="none" stroke-width="0.9"/><circle cx="-8.54" cy="4.16" r="0.9" fill="none" stroke-width="0.9"/><circle cx="-3.61" cy="-3.74" r="1.2" fill="none" stroke-width="0.9"/><circle cx="-6.6" cy="-6.83" r="0.9" fill="none" stroke-width="0.9"/></g><g transform="translate(678 639) rotate(-15) scale(0.85 0.85)"><path d="M3.72 -12.97 A2.8 2.8 0 0 1 8.67 -10.34 L7.63 -5.56 Q7.19 -3.51 9.08 -2.59 L13.49 -0.47 A2.8 2.8 0 0 1 12.51 5.05 L7.64 5.54 Q5.56 5.75 5.27 7.83 L4.61 12.68 A2.8 2.8 0 0 1 -0.94 13.46 L-2.91 8.98 Q-3.76 7.06 -5.82 7.44 L-10.64 8.3 A2.8 2.8 0 0 1 -13.09 3.27 L-9.44 0.01 Q-7.88 -1.39 -8.87 -3.24 L-11.18 -7.55 A2.8 2.8 0 0 1 -7.16 -11.44 L-2.93 -8.98 Q-1.11 -7.92 0.34 -9.44 L3.72 -12.97Z" fill="none" stroke-width="1.5"/><circle r="1.7" fill="none" stroke-width="1"/><circle cx="2.44" cy="-4.59" r="1.2" fill="none" stroke-width="0.9"/><circle cx="4.46" cy="-8.39" r="0.9" fill="none" stroke-width="0.9"/><circle cx="5.12" cy="0.9" r="1.2" fill="none" stroke-width="0.9"/><circle cx="9.36" cy="1.65" r="0.9" fill="none" stroke-width="0.9"/><circle cx="0.72" cy="5.15" r="1.2" fill="none" stroke-width="0.9"/><circle cx="1.32" cy="9.41" r="0.9" fill="none" stroke-width="0.9"/><circle cx="-4.67" cy="2.28" r="1.2" fill="none" stroke-width="0.9"/><circle cx="-8.54" cy="4.16" r="0.9" fill="none" stroke-width="0.9"/><circle cx="-3.61" cy="-3.74" r="1.2" fill="none" stroke-width="0.9"/><circle cx="-6.6" cy="-6.83" r="0.9" fill="none" stroke-width="0.9"/></g><g transform="translate(726 627) rotate(18) scale(0.91 0.91)"><path d="M3.72 -12.97 A2.8 2.8 0 0 1 8.67 -10.34 L7.63 -5.56 Q7.19 -3.51 9.08 -2.59 L13.49 -0.47 A2.8 2.8 0 0 1 12.51 5.05 L7.64 5.54 Q5.56 5.75 5.27 7.83 L4.61 12.68 A2.8 2.8 0 0 1 -0.94 13.46 L-2.91 8.98 Q-3.76 7.06 -5.82 7.44 L-10.64 8.3 A2.8 2.8 0 0 1 -13.09 3.27 L-9.44 0.01 Q-7.88 -1.39 -8.87 -3.24 L-11.18 -7.55 A2.8 2.8 0 0 1 -7.16 -11.44 L-2.93 -8.98 Q-1.11 -7.92 0.34 -9.44 L3.72 -12.97Z" fill="none" stroke-width="1.5"/><circle r="1.7" fill="none" stroke-width="1"/><circle cx="2.44" cy="-4.59" r="1.2" fill="none" stroke-width="0.9"/><circle cx="4.46" cy="-8.39" r="0.9" fill="none" stroke-width="0.9"/><circle cx="5.12" cy="0.9" r="1.2" fill="none" stroke-width="0.9"/><circle cx="9.36" cy="1.65" r="0.9" fill="none" stroke-width="0.9"/><circle cx="0.72" cy="5.15" r="1.2" fill="none" stroke-width="0.9"/><circle cx="1.32" cy="9.41" r="0.9" fill="none" stroke-width="0.9"/><circle cx="-4.67" cy="2.28" r="1.2" fill="none" stroke-width="0.9"/><circle cx="-8.54" cy="4.16" r="0.9" fill="none" stroke-width="0.9"/><circle cx="-3.61" cy="-3.74" r="1.2" fill="none" stroke-width="0.9"/><circle cx="-6.6" cy="-6.83" r="0.9" fill="none" stroke-width="0.9"/></g><g transform="translate(688 690) rotate(-8) scale(0.97 0.97)"><path d="M3.72 -12.97 A2.8 2.8 0 0 1 8.67 -10.34 L7.63 -5.56 Q7.19 -3.51 9.08 -2.59 L13.49 -0.47 A2.8 2.8 0 0 1 12.51 5.05 L7.64 5.54 Q5.56 5.75 5.27 7.83 L4.61 12.68 A2.8 2.8 0 0 1 -0.94 13.46 L-2.91 8.98 Q-3.76 7.06 -5.82 7.44 L-10.64 8.3 A2.8 2.8 0 0 1 -13.09 3.27 L-9.44 0.01 Q-7.88 -1.39 -8.87 -3.24 L-11.18 -7.55 A2.8 2.8 0 0 1 -7.16 -11.44 L-2.93 -8.98 Q-1.11 -7.92 0.34 -9.44 L3.72 -12.97Z" fill="none" stroke-width="1.5"/><circle r="1.7" fill="none" stroke-width="1"/><circle cx="2.44" cy="-4.59" r="1.2" fill="none" stroke-width="0.9"/><circle cx="4.46" cy="-8.39" r="0.9" fill="none" stroke-width="0.9"/><circle cx="5.12" cy="0.9" r="1.2" fill="none" stroke-width="0.9"/><circle cx="9.36" cy="1.65" r="0.9" fill="none" stroke-width="0.9"/><circle cx="0.72" cy="5.15" r="1.2" fill="none" stroke-width="0.9"/><circle cx="1.32" cy="9.41" r="0.9" fill="none" stroke-width="0.9"/><circle cx="-4.67" cy="2.28" r="1.2" fill="none" stroke-width="0.9"/><circle cx="-8.54" cy="4.16" r="0.9" fill="none" stroke-width="0.9"/><circle cx="-3.61" cy="-3.74" r="1.2" fill="none" stroke-width="0.9"/><circle cx="-6.6" cy="-6.83" r="0.9" fill="none" stroke-width="0.9"/></g><g transform="translate(812 843) rotate(12) scale(1.03 1.03)"><path d="M3.72 -12.97 A2.8 2.8 0 0 1 8.67 -10.34 L7.63 -5.56 Q7.19 -3.51 9.08 -2.59 L13.49 -0.47 A2.8 2.8 0 0 1 12.51 5.05 L7.64 5.54 Q5.56 5.75 5.27 7.83 L4.61 12.68 A2.8 2.8 0 0 1 -0.94 13.46 L-2.91 8.98 Q-3.76 7.06 -5.82 7.44 L-10.64 8.3 A2.8 2.8 0 0 1 -13.09 3.27 L-9.44 0.01 Q-7.88 -1.39 -8.87 -3.24 L-11.18 -7.55 A2.8 2.8 0 0 1 -7.16 -11.44 L-2.93 -8.98 Q-1.11 -7.92 0.34 -9.44 L3.72 -12.97Z" fill="none" stroke-width="1.5"/><circle r="1.7" fill="none" stroke-width="1"/><circle cx="2.44" cy="-4.59" r="1.2" fill="none" stroke-width="0.9"/><circle cx="4.46" cy="-8.39" r="0.9" fill="none" stroke-width="0.9"/><circle cx="5.12" cy="0.9" r="1.2" fill="none" stroke-width="0.9"/><circle cx="9.36" cy="1.65" r="0.9" fill="none" stroke-width="0.9"/><circle cx="0.72" cy="5.15" r="1.2" fill="none" stroke-width="0.9"/><circle cx="1.32" cy="9.41" r="0.9" fill="none" stroke-width="0.9"/><circle cx="-4.67" cy="2.28" r="1.2" fill="none" stroke-width="0.9"/><circle cx="-8.54" cy="4.16" r="0.9" fill="none" stroke-width="0.9"/><circle cx="-3.61" cy="-3.74" r="1.2" fill="none" stroke-width="0.9"/><circle cx="-6.6" cy="-6.83" r="0.9" fill="none" stroke-width="0.9"/></g><g transform="translate(332.6 385.2)"><circle r="12.4" stroke="none" fill="var(--sun)"/><path d="M15.6 0 L21.2 0" stroke-width="2.3" stroke-linecap="round"/><path d="M11.03 11.03 L14.99 14.99" stroke-width="2.3" stroke-linecap="round"/><path d="M0 15.6 L0 21.2" stroke-width="2.3" stroke-linecap="round"/><path d="M-11.03 11.03 L-14.99 14.99" stroke-width="2.3" stroke-linecap="round"/><path d="M-15.6 0 L-21.2 0" stroke-width="2.3" stroke-linecap="round"/><path d="M-11.03 -11.03 L-14.99 -14.99" stroke-width="2.3" stroke-linecap="round"/><path d="M-0 -15.6 L-0 -21.2" stroke-width="2.3" stroke-linecap="round"/><path d="M11.03 -11.03 L14.99 -14.99" stroke-width="2.3" stroke-linecap="round"/></g><g transform="translate(585.6 440.8)"><circle r="12.4" stroke="none" fill="var(--sun)"/><path d="M15.6 0 L21.2 0" stroke-width="2.3" stroke-linecap="round"/><path d="M11.03 11.03 L14.99 14.99" stroke-width="2.3" stroke-linecap="round"/><path d="M0 15.6 L0 21.2" stroke-width="2.3" stroke-linecap="round"/><path d="M-11.03 11.03 L-14.99 14.99" stroke-width="2.3" stroke-linecap="round"/><path d="M-15.6 0 L-21.2 0" stroke-width="2.3" stroke-linecap="round"/><path d="M-11.03 -11.03 L-14.99 -14.99" stroke-width="2.3" stroke-linecap="round"/><path d="M-0 -15.6 L-0 -21.2" stroke-width="2.3" stroke-linecap="round"/><path d="M11.03 -11.03 L14.99 -14.99" stroke-width="2.3" stroke-linecap="round"/></g><g transform="translate(396.8 604) rotate(22)"><circle r="12.4" stroke="none" fill="var(--sun)"/><path d="M15.6 0 L21.2 0" stroke-width="2.3" stroke-linecap="round"/><path d="M11.03 11.03 L14.99 14.99" stroke-width="2.3" stroke-linecap="round"/><path d="M0 15.6 L0 21.2" stroke-width="2.3" stroke-linecap="round"/><path d="M-11.03 11.03 L-14.99 14.99" stroke-width="2.3" stroke-linecap="round"/><path d="M-15.6 0 L-21.2 0" stroke-width="2.3" stroke-linecap="round"/><path d="M-11.03 -11.03 L-14.99 -14.99" stroke-width="2.3" stroke-linecap="round"/><path d="M-0 -15.6 L-0 -21.2" stroke-width="2.3" stroke-linecap="round"/><path d="M11.03 -11.03 L14.99 -14.99" stroke-width="2.3" stroke-linecap="round"/></g><g transform="translate(358 770.8)"><circle r="12.4" stroke="none" fill="var(--sun)"/><path d="M15.6 0 L21.2 0" stroke-width="2.3" stroke-linecap="round"/><path d="M11.03 11.03 L14.99 14.99" stroke-width="2.3" stroke-linecap="round"/><path d="M0 15.6 L0 21.2" stroke-width="2.3" stroke-linecap="round"/><path d="M-11.03 11.03 L-14.99 14.99" stroke-width="2.3" stroke-linecap="round"/><path d="M-15.6 0 L-21.2 0" stroke-width="2.3" stroke-linecap="round"/><path d="M-11.03 -11.03 L-14.99 -14.99" stroke-width="2.3" stroke-linecap="round"/><path d="M-0 -15.6 L-0 -21.2" stroke-width="2.3" stroke-linecap="round"/><path d="M11.03 -11.03 L14.99 -14.99" stroke-width="2.3" stroke-linecap="round"/></g><g transform="translate(743.5 545.2) rotate(22)"><circle r="12.4" stroke="none" fill="var(--sun)"/><path d="M15.6 0 L21.2 0" stroke-width="2.3" stroke-linecap="round"/><path d="M11.03 11.03 L14.99 14.99" stroke-width="2.3" stroke-linecap="round"/><path d="M0 15.6 L0 21.2" stroke-width="2.3" stroke-linecap="round"/><path d="M-11.03 11.03 L-14.99 14.99" stroke-width="2.3" stroke-linecap="round"/><path d="M-15.6 0 L-21.2 0" stroke-width="2.3" stroke-linecap="round"/><path d="M-11.03 -11.03 L-14.99 -14.99" stroke-width="2.3" stroke-linecap="round"/><path d="M-0 -15.6 L-0 -21.2" stroke-width="2.3" stroke-linecap="round"/><path d="M11.03 -11.03 L14.99 -14.99" stroke-width="2.3" stroke-linecap="round"/></g><g transform="translate(595.7 768.4)"><circle r="12.4" stroke="none" fill="var(--sun)"/><path d="M15.6 0 L21.2 0" stroke-width="2.3" stroke-linecap="round"/><path d="M11.03 11.03 L14.99 14.99" stroke-width="2.3" stroke-linecap="round"/><path d="M0 15.6 L0 21.2" stroke-width="2.3" stroke-linecap="round"/><path d="M-11.03 11.03 L-14.99 14.99" stroke-width="2.3" stroke-linecap="round"/><path d="M-15.6 0 L-21.2 0" stroke-width="2.3" stroke-linecap="round"/><path d="M-11.03 -11.03 L-14.99 -14.99" stroke-width="2.3" stroke-linecap="round"/><path d="M-0 -15.6 L-0 -21.2" stroke-width="2.3" stroke-linecap="round"/><path d="M11.03 -11.03 L14.99 -14.99" stroke-width="2.3" stroke-linecap="round"/></g><g transform="translate(729.6 737.2)"><circle r="12.4" stroke="none" fill="var(--sun)"/><path d="M15.6 0 L21.2 0" stroke-width="2.3" stroke-linecap="round"/><path d="M11.03 11.03 L14.99 14.99" stroke-width="2.3" stroke-linecap="round"/><path d="M0 15.6 L0 21.2" stroke-width="2.3" stroke-linecap="round"/><path d="M-11.03 11.03 L-14.99 14.99" stroke-width="2.3" stroke-linecap="round"/><path d="M-15.6 0 L-21.2 0" stroke-width="2.3" stroke-linecap="round"/><path d="M-11.03 -11.03 L-14.99 -14.99" stroke-width="2.3" stroke-linecap="round"/><path d="M-0 -15.6 L-0 -21.2" stroke-width="2.3" stroke-linecap="round"/><path d="M11.03 -11.03 L14.99 -14.99" stroke-width="2.3" stroke-linecap="round"/></g><g transform="translate(543.7 337.1) rotate(-16.7)"><path d="M0 -50 C-7 -45 -17.5 -24 -17.5 2 C-17.5 26 -12 45 -8 57 L0 50 L8 57 C12 45 17.5 26 17.5 2 C17.5 -24 7 -45 0 -50Z M0 -46 V0 M0 21 V50" fill="none" stroke="var(--board)" style="stroke-width:var(--bw)" stroke-linejoin="round"/></g><g transform="translate(543.7 915.1) rotate(-16.7)"><path d="M0 -50 C-7 -45 -17.5 -24 -17.5 2 C-17.5 26 -12 45 -8 57 L0 50 L8 57 C12 45 17.5 26 17.5 2 C17.5 -24 7 -45 0 -50Z M0 -46 V0 M0 21 V50" fill="none" stroke="var(--board)" style="stroke-width:var(--bw)" stroke-linejoin="round"/></g><g transform="translate(264 484.4) rotate(143) scale(1.03 1.03)"><path d="M0 -50 C-7 -45 -17.5 -24 -17.5 2 C-17.5 26 -12 45 -8 57 L0 50 L8 57 C12 45 17.5 26 17.5 2 C17.5 -24 7 -45 0 -50Z M0 -46 V0 M0 21 V50" fill="none" stroke="var(--board)" style="stroke-width:var(--bw)" stroke-linejoin="round"/></g><g transform="translate(842 484.4) rotate(143) scale(1.03 1.03)"><path d="M0 -50 C-7 -45 -17.5 -24 -17.5 2 C-17.5 26 -12 45 -8 57 L0 50 L8 57 C12 45 17.5 26 17.5 2 C17.5 -24 7 -45 0 -50Z M0 -46 V0 M0 21 V50" fill="none" stroke="var(--board)" style="stroke-width:var(--bw)" stroke-linejoin="round"/></g><g transform="translate(464 710.8) rotate(-143.7) scale(1.02 1.02)"><path d="M0 -50 C-7 -45 -17.5 -24 -17.5 2 C-17.5 26 -12 45 -8 57 L0 50 L8 57 C12 45 17.5 26 17.5 2 C17.5 -24 7 -45 0 -50Z M0 -46 V0 M0 21 V50" fill="none" stroke="var(--board)" style="stroke-width:var(--bw)" stroke-linejoin="round"/></g><g transform="translate(764.4 810.4) rotate(43.1) scale(1.03 1.03)"><path d="M0 -50 C-7 -45 -17.5 -24 -17.5 2 C-17.5 26 -12 45 -8 57 L0 50 L8 57 C12 45 17.5 26 17.5 2 C17.5 -24 7 -45 0 -50Z M0 -46 V0 M0 21 V50" fill="none" stroke="var(--board)" style="stroke-width:var(--bw)" stroke-linejoin="round"/></g><g transform="translate(289.3 447.7) rotate(21.3)"><g><circle cx="-9" cy="0" r="5.8" stroke="none" fill="var(--sun)"/><circle cx="9" cy="0" r="5.8" stroke="none" fill="var(--sun)"/><path d="M-2 -3.5 A7.8 7.8 0 1 0 -2.2 3.6 Q0 1.5 2.2 -3.6 A7.8 7.8 0 1 1 2 3.5 Q0 -1.5 -2 -3.5Z M-16.5 -2.5 l-1.2 1.5 l1 2 M16.5 2.5 l1.2 -1.5 l-1 -2" fill="none" stroke-width="1.1"/></g></g><g transform="translate(455 789.4) rotate(45)"><g><circle cx="-9" cy="0" r="5.8" stroke="none" fill="var(--sun)"/><circle cx="9" cy="0" r="5.8" stroke="none" fill="var(--sun)"/><path d="M-2 -3.5 A7.8 7.8 0 1 0 -2.2 3.6 Q0 1.5 2.2 -3.6 A7.8 7.8 0 1 1 2 3.5 Q0 -1.5 -2 -3.5Z M-16.5 -2.5 l-1.2 1.5 l1 2 M16.5 2.5 l1.2 -1.5 l-1 -2" fill="none" stroke-width="1.1"/></g></g><g transform="translate(639 511) rotate(-45)"><g><circle cx="-9" cy="0" r="5.8" stroke="none" fill="var(--sun)"/><circle cx="9" cy="0" r="5.8" stroke="none" fill="var(--sun)"/><path d="M-2 -3.5 A7.8 7.8 0 1 0 -2.2 3.6 Q0 1.5 2.2 -3.6 A7.8 7.8 0 1 1 2 3.5 Q0 -1.5 -2 -3.5Z M-16.5 -2.5 l-1.2 1.5 l1 2 M16.5 2.5 l1.2 -1.5 l-1 -2" fill="none" stroke-width="1.1"/></g></g><g transform="translate(804 739) rotate(32.7)"><g><circle cx="-9" cy="0" r="5.8" stroke="none" fill="var(--sun)"/><circle cx="9" cy="0" r="5.8" stroke="none" fill="var(--sun)"/><path d="M-2 -3.5 A7.8 7.8 0 1 0 -2.2 3.6 Q0 1.5 2.2 -3.6 A7.8 7.8 0 1 1 2 3.5 Q0 -1.5 -2 -3.5Z M-16.5 -2.5 l-1.2 1.5 l1 2 M16.5 2.5 l1.2 -1.5 l-1 -2" fill="none" stroke-width="1.1"/></g></g><g transform="translate(440 343)"><g fill="none" stroke-width="2" stroke-linecap="round"><path d="M-28.3 -14.3 C-24 -8 -14 -5 -10 -10 C-8 -14 -10 -19 -12.3 -23.1 C-2 -24.5 10 -20 13.3 -3.7 C15 5 16 16 22.9 25.1 C26 27 29 24 29.3 20.3"/><path d="M-27.7 -5.3 C-23 -2 -19 -0.5 -15.5 -0.5 L-15 3.3 C-12 5 -10 4.5 -9 5.4 C-7 8 -5 11 -3.7 13.4" stroke-width="1.7"/><path d="M-30.4 -2.6 C-26 1 -22 3.5 -19.2 3.8 C-17 7 -15 9.5 -13.9 10.7" stroke-width="1.7"/></g></g><g transform="translate(766.5 379)"><g fill="none" stroke-width="2" stroke-linecap="round"><path d="M-28.3 -14.3 C-24 -8 -14 -5 -10 -10 C-8 -14 -10 -19 -12.3 -23.1 C-2 -24.5 10 -20 13.3 -3.7 C15 5 16 16 22.9 25.1 C26 27 29 24 29.3 20.3"/><path d="M-27.7 -5.3 C-23 -2 -19 -0.5 -15.5 -0.5 L-15 3.3 C-12 5 -10 4.5 -9 5.4 C-7 8 -5 11 -3.7 13.4" stroke-width="1.7"/><path d="M-30.4 -2.6 C-26 1 -22 3.5 -19.2 3.8 C-17 7 -15 9.5 -13.9 10.7" stroke-width="1.7"/></g></g><g transform="translate(348.6 474) rotate(12) scale(-1.03 1.03)"><g fill="none" stroke-width="2" stroke-linecap="round"><path d="M-28.3 -14.3 C-24 -8 -14 -5 -10 -10 C-8 -14 -10 -19 -12.3 -23.1 C-2 -24.5 10 -20 13.3 -3.7 C15 5 16 16 22.9 25.1 C26 27 29 24 29.3 20.3"/><path d="M-27.7 -5.3 C-23 -2 -19 -0.5 -15.5 -0.5 L-15 3.3 C-12 5 -10 4.5 -9 5.4 C-7 8 -5 11 -3.7 13.4" stroke-width="1.7"/><path d="M-30.4 -2.6 C-26 1 -22 3.5 -19.2 3.8 C-17 7 -15 9.5 -13.9 10.7" stroke-width="1.7"/></g></g><g transform="translate(285.2 784.3) matrix(0 1 1 0 0 0)"><g fill="none" stroke-width="2" stroke-linecap="round"><path d="M-28.3 -14.3 C-24 -8 -14 -5 -10 -10 C-8 -14 -10 -19 -12.3 -23.1 C-2 -24.5 10 -20 13.3 -3.7 C15 5 16 16 22.9 25.1 C26 27 29 24 29.3 20.3"/><path d="M-27.7 -5.3 C-23 -2 -19 -0.5 -15.5 -0.5 L-15 3.3 C-12 5 -10 4.5 -9 5.4 C-7 8 -5 11 -3.7 13.4" stroke-width="1.7"/><path d="M-30.4 -2.6 C-26 1 -22 3.5 -19.2 3.8 C-17 7 -15 9.5 -13.9 10.7" stroke-width="1.7"/></g></g><g transform="translate(610.4 646.6) rotate(-26.7) scale(-1 1)"><g fill="none" stroke-width="2" stroke-linecap="round"><path d="M-28.3 -14.3 C-24 -8 -14 -5 -10 -10 C-8 -14 -10 -19 -12.3 -23.1 C-2 -24.5 10 -20 13.3 -3.7 C15 5 16 16 22.9 25.1 C26 27 29 24 29.3 20.3"/><path d="M-27.7 -5.3 C-23 -2 -19 -0.5 -15.5 -0.5 L-15 3.3 C-12 5 -10 4.5 -9 5.4 C-7 8 -5 11 -3.7 13.4" stroke-width="1.7"/><path d="M-30.4 -2.6 C-26 1 -22 3.5 -19.2 3.8 C-17 7 -15 9.5 -13.9 10.7" stroke-width="1.7"/></g></g><g transform="translate(405 527)"><g fill="none" stroke-width="2" stroke-linecap="round" stroke-linejoin="round"><path d="M-8.9 -12.4 C-10 -18 -10.5 -25 -15.4 -25 C-20 -25 -20.5 -21 -21 -17 C-21.5 -9 -23 -3 -25.7 3 C-28 11 -26 17 -20 20.5 C-14 23.5 -7 23 -3.5 19.5 L24.5 -5 C27.5 -7.5 26.5 -12.5 22 -12 C20 -11.8 16 -8 11.7 -4.5"/><rect x="-8.5" y="-3.6" width="17" height="7.2" rx="3.6" transform="translate(-4.7 -10.3) rotate(-41)"/><rect x="-7.5" y="-3.4" width="15" height="6.8" rx="3.4" transform="translate(0.9 -5.2) rotate(-46)"/><rect x="-7" y="-3.3" width="14" height="6.6" rx="3.3" transform="translate(5.3 -0.5) rotate(-44)"/><path d="M-9.8 12.8 Q-6 8 -6.1 -1.7 M-4.2 3.5 L-0.9 8.1" stroke-width="1.7"/></g></g><g transform="translate(499.9 819.3) rotate(29.6)"><g fill="none" stroke-width="2" stroke-linecap="round" stroke-linejoin="round"><path d="M-8.9 -12.4 C-10 -18 -10.5 -25 -15.4 -25 C-20 -25 -20.5 -21 -21 -17 C-21.5 -9 -23 -3 -25.7 3 C-28 11 -26 17 -20 20.5 C-14 23.5 -7 23 -3.5 19.5 L24.5 -5 C27.5 -7.5 26.5 -12.5 22 -12 C20 -11.8 16 -8 11.7 -4.5"/><rect x="-8.5" y="-3.6" width="17" height="7.2" rx="3.6" transform="translate(-4.7 -10.3) rotate(-41)"/><rect x="-7.5" y="-3.4" width="15" height="6.8" rx="3.4" transform="translate(0.9 -5.2) rotate(-46)"/><rect x="-7" y="-3.3" width="14" height="6.6" rx="3.3" transform="translate(5.3 -0.5) rotate(-44)"/><path d="M-9.8 12.8 Q-6 8 -6.1 -1.7 M-4.2 3.5 L-0.9 8.1" stroke-width="1.7"/></g></g><g transform="translate(672.6 582.3) rotate(165)"><g fill="none" stroke-width="2" stroke-linecap="round" stroke-linejoin="round"><path d="M-8.9 -12.4 C-10 -18 -10.5 -25 -15.4 -25 C-20 -25 -20.5 -21 -21 -17 C-21.5 -9 -23 -3 -25.7 3 C-28 11 -26 17 -20 20.5 C-14 23.5 -7 23 -3.5 19.5 L24.5 -5 C27.5 -7.5 26.5 -12.5 22 -12 C20 -11.8 16 -8 11.7 -4.5"/><rect x="-8.5" y="-3.6" width="17" height="7.2" rx="3.6" transform="translate(-4.7 -10.3) rotate(-41)"/><rect x="-7.5" y="-3.4" width="15" height="6.8" rx="3.4" transform="translate(0.9 -5.2) rotate(-46)"/><rect x="-7" y="-3.3" width="14" height="6.6" rx="3.3" transform="translate(5.3 -0.5) rotate(-44)"/><path d="M-9.8 12.8 Q-6 8 -6.1 -1.7 M-4.2 3.5 L-0.9 8.1" stroke-width="1.7"/></g></g><g><g transform="translate(495.5 479) scale(-1 1)"><g fill="none" stroke-width="1.3" stroke-linejoin="round"><path d="M0 0 Q-1 -8 -3.5 -19 Q-6 -26 -11.2 -29.2 L-7.84 -28.28 -4.83 -27.21 -2.17 -25.98 0.13 -24.59 2.08 -23.05 1.23 -21.62 3.67 -21.35 4.91 -19.5 5.79 -17.49 6.32 -15.32 6.5 -13 4.87 -12.93 6.26 -11.43 5.92 -9.92 5.49 -8.47 4.98 -7.08 4.38 -5.75 2.83 -6.26 3.68 -4.48 2.9 -3.27 2.02 -2.12 1.05 -1.03 0 0Z"/><path d="M0 0 Q0 -9 -8 -16.5 Q-15 -19.5 -23.1 -15.9 L-21.67 -15.6 -20.22 -15.26 -18.76 -14.87 -17.28 -14.44 -15.78 -13.97 -15.98 -12.36 -14.26 -13.46 -12.72 -12.91 -11.16 -12.32 -9.59 -11.68 -8 -11 -8.95 -9.68 -7.02 -9.99 -6.08 -8.96 -5.18 -7.91 -4.32 -6.84 -3.5 -5.75 -4.65 -4.61 -2.72 -4.64 -1.98 -3.51 -1.28 -2.36 -0.62 -1.19 0 0Z"/><path d="M0 0 Q-6 -7.5 -15 -8 Q-22 -6.5 -26.3 -1.4 L-24.81 -1.61 -23.27 -1.8 -21.68 -1.96 -20.03 -2.1 -18.32 -2.23 -17.88 -0.65 -16.57 -2.32 -14.76 -2.4 -12.89 -2.46 -10.97 -2.49 -9 -2.5 -9.16 -0.89 -7.83 -2.21 -6.72 -1.92 -5.67 -1.64 -4.68 -1.38 -3.75 -1.12 -4.01 0.46 -2.88 -0.88 -2.07 -0.65 -1.32 -0.42 -0.63 -0.2 0 0Z"/><path d="M0 0 Q-12 -3 -20 2 Q-24 7 -23.1 14.4 L-22.43 12.96 -21.66 11.6 -20.8 10.31 -19.84 9.1 -18.77 7.97 -17.47 8.95 -17.62 6.92 -16.36 5.95 -15 5.06 -13.55 4.24 -12 3.5 -11.3 4.97 -10.44 3.1 -8.96 2.72 -7.56 2.34 -6.24 1.98 -5 1.62 -4.31 3.09 -3.84 1.28 -2.76 0.95 -1.76 0.62 -0.84 0.3 0 0Z"/><path d="M0 0 Q11 5 10.5 14 Q10.5 20 7.9 24.9 L7.14 23.68 6.42 22.38 5.73 20.99 5.08 19.52 4.47 17.98 5.87 17.12 3.9 16.34 3.37 14.63 2.88 12.84 2.42 10.96 2 9 3.48 8.35 1.71 8.01 1.44 7.04 1.19 6.09 0.96 5.16 0.75 4.25 2.28 3.74 0.56 3.36 0.39 2.49 0.24 1.64 0.11 0.81 0 0Z"/><path d="M0 0 Q14 0.5 20 9 Q21.5 17 17.7 22.7 L17.43 21.17 17.09 19.65 16.68 18.14 16.21 16.65 15.68 15.18 17.03 14.27 15.07 13.71 14.4 12.26 13.67 10.83 12.87 9.41 12 8 12.87 6.62 10.8 6.84 9.6 5.76 8.4 4.76 7.2 3.84 6 3 6.62 1.5 4.8 2.24 3.6 1.56 2.4 0.96 1.2 0.44 0 0Z"/><path d="M0 0 Q8 -7 18 -10 Q26 -8 32.1 -1.1 L30.46 -1.37 28.78 -1.62 27.07 -1.86 25.32 -2.08 23.52 -2.27 23.32 -3.9 21.7 -2.46 19.83 -2.62 17.92 -2.76 15.98 -2.89 14 -3 13.39 -4.51 12.42 -2.7 10.88 -2.4 9.38 -2.1 7.92 -1.8 6.5 -1.5 5.88 -3 5.12 -1.2 3.78 -0.9 2.48 -0.6 1.22 -0.3 0 0Z"/><path d="M-1 1 Q-25 24 -27.5 53.7 M1.5 2 Q-21 27 -24.5 55.9"/><path d="M-8.5 14 l2 1 M-14 24 l2 1 M-19 34 l2 0.8 M-23 44 l2 0.6" stroke-width="1"/></g></g><g transform="translate(550.2 507.7) rotate(-15)"><g fill="none" stroke-width="1.3" stroke-linejoin="round"><path d="M0 0 Q-1 -8 -3.5 -19 Q-6 -26 -11.2 -29.2 L-7.84 -28.28 -4.83 -27.21 -2.17 -25.98 0.13 -24.59 2.08 -23.05 1.23 -21.62 3.67 -21.35 4.91 -19.5 5.79 -17.49 6.32 -15.32 6.5 -13 4.87 -12.93 6.26 -11.43 5.92 -9.92 5.49 -8.47 4.98 -7.08 4.38 -5.75 2.83 -6.26 3.68 -4.48 2.9 -3.27 2.02 -2.12 1.05 -1.03 0 0Z"/><path d="M0 0 Q0 -9 -8 -16.5 Q-15 -19.5 -23.1 -15.9 L-21.67 -15.6 -20.22 -15.26 -18.76 -14.87 -17.28 -14.44 -15.78 -13.97 -15.98 -12.36 -14.26 -13.46 -12.72 -12.91 -11.16 -12.32 -9.59 -11.68 -8 -11 -8.95 -9.68 -7.02 -9.99 -6.08 -8.96 -5.18 -7.91 -4.32 -6.84 -3.5 -5.75 -4.65 -4.61 -2.72 -4.64 -1.98 -3.51 -1.28 -2.36 -0.62 -1.19 0 0Z"/><path d="M0 0 Q-6 -7.5 -15 -8 Q-22 -6.5 -26.3 -1.4 L-24.81 -1.61 -23.27 -1.8 -21.68 -1.96 -20.03 -2.1 -18.32 -2.23 -17.88 -0.65 -16.57 -2.32 -14.76 -2.4 -12.89 -2.46 -10.97 -2.49 -9 -2.5 -9.16 -0.89 -7.83 -2.21 -6.72 -1.92 -5.67 -1.64 -4.68 -1.38 -3.75 -1.12 -4.01 0.46 -2.88 -0.88 -2.07 -0.65 -1.32 -0.42 -0.63 -0.2 0 0Z"/><path d="M0 0 Q-12 -3 -20 2 Q-24 7 -23.1 14.4 L-22.43 12.96 -21.66 11.6 -20.8 10.31 -19.84 9.1 -18.77 7.97 -17.47 8.95 -17.62 6.92 -16.36 5.95 -15 5.06 -13.55 4.24 -12 3.5 -11.3 4.97 -10.44 3.1 -8.96 2.72 -7.56 2.34 -6.24 1.98 -5 1.62 -4.31 3.09 -3.84 1.28 -2.76 0.95 -1.76 0.62 -0.84 0.3 0 0Z"/><path d="M0 0 Q11 5 10.5 14 Q10.5 20 7.9 24.9 L7.14 23.68 6.42 22.38 5.73 20.99 5.08 19.52 4.47 17.98 5.87 17.12 3.9 16.34 3.37 14.63 2.88 12.84 2.42 10.96 2 9 3.48 8.35 1.71 8.01 1.44 7.04 1.19 6.09 0.96 5.16 0.75 4.25 2.28 3.74 0.56 3.36 0.39 2.49 0.24 1.64 0.11 0.81 0 0Z"/><path d="M0 0 Q14 0.5 20 9 Q21.5 17 17.7 22.7 L17.43 21.17 17.09 19.65 16.68 18.14 16.21 16.65 15.68 15.18 17.03 14.27 15.07 13.71 14.4 12.26 13.67 10.83 12.87 9.41 12 8 12.87 6.62 10.8 6.84 9.6 5.76 8.4 4.76 7.2 3.84 6 3 6.62 1.5 4.8 2.24 3.6 1.56 2.4 0.96 1.2 0.44 0 0Z"/><path d="M0 0 Q8 -7 18 -10 Q26 -8 32.1 -1.1 L30.46 -1.37 28.78 -1.62 27.07 -1.86 25.32 -2.08 23.52 -2.27 23.32 -3.9 21.7 -2.46 19.83 -2.62 17.92 -2.76 15.98 -2.89 14 -3 13.39 -4.51 12.42 -2.7 10.88 -2.4 9.38 -2.1 7.92 -1.8 6.5 -1.5 5.88 -3 5.12 -1.2 3.78 -0.9 2.48 -0.6 1.22 -0.3 0 0Z"/><path d="M-1 1 Q-25 24 -27.5 53.7 M1.5 2 Q-21 27 -24.5 55.9"/><path d="M-8.5 14 l2 1 M-14 24 l2 1 M-19 34 l2 0.8 M-23 44 l2 0.6" stroke-width="1"/></g></g><g transform="translate(520 580)"><g fill="none" stroke-width="2.5" stroke-linejoin="round" stroke-linecap="round"><path d="M-31.7 50.3 C-42 38 -53 26 -54 10 C-55 -5 -54 -12 -47 -16 L16 -44.5 Q19 -46.5 21.5 -43.5 C33 -35 49 -16 54.7 4.8 L59.2 11.1 L47.5 16.5 A11 11 0 0 0 27 25.5 L-1 37 A11 11 0 0 0 -20 47 Z" fill="var(--bg)"/><circle cx="39.4" cy="23.7" r="7.2"/><circle cx="-8.7" cy="44.9" r="7.2"/><path d="M-45 -9 Q-47.9 -7.8 -47.5 -4 L-46.5 14 Q-46 18 -42 16.5 L-20 4 Q-16 2 -18 -1 L-27 -15.5 Q-29 -18.5 -32 -16.5Z"/><path d="M-7 -24 Q-9.2 -23 -8.5 -20 L-1 -9 Q1 -6 4 -8 L28 -20 Q31.5 -22 29.5 -25 L22 -36 Q20 -39 17 -37.5Z"/><path d="M-20 -23 L-5.6 -0.6" stroke-width="1.5"/><path d="M-57.8 -23.5 Q-20 -33 14.5 -49.5 Q17.5 -49 15.5 -46 Q-20 -29 -57.8 -23.5Z" stroke-width="1.8"/><rect x="-4.5" y="-12.5" width="9" height="25" rx="3" transform="translate(54 -10) rotate(-33)" stroke-width="2.2" fill="var(--bg)"/><path d="M-1 33 Q0 28 3 27 Q2.5 30 5.5 30 Q6 25 9 24 Q8.5 27 11.5 27 Q12 22 15 21 Q14.5 24 17.5 24 Q18 19.5 21 18.5 Q20 21 24 22.5" stroke-width="1.8"/><path d="M47 15 L49 10 L52 12 L54 8" stroke-width="1.6"/></g></g></g><g transform="translate(653.8 907.1) scale(-1 1) translate(-520 -580)"><g><g transform="translate(495.5 479) scale(-1 1)"><g fill="none" stroke-width="1.3" stroke-linejoin="round"><path d="M0 0 Q-1 -8 -3.5 -19 Q-6 -26 -11.2 -29.2 L-7.84 -28.28 -4.83 -27.21 -2.17 -25.98 0.13 -24.59 2.08 -23.05 1.23 -21.62 3.67 -21.35 4.91 -19.5 5.79 -17.49 6.32 -15.32 6.5 -13 4.87 -12.93 6.26 -11.43 5.92 -9.92 5.49 -8.47 4.98 -7.08 4.38 -5.75 2.83 -6.26 3.68 -4.48 2.9 -3.27 2.02 -2.12 1.05 -1.03 0 0Z"/><path d="M0 0 Q0 -9 -8 -16.5 Q-15 -19.5 -23.1 -15.9 L-21.67 -15.6 -20.22 -15.26 -18.76 -14.87 -17.28 -14.44 -15.78 -13.97 -15.98 -12.36 -14.26 -13.46 -12.72 -12.91 -11.16 -12.32 -9.59 -11.68 -8 -11 -8.95 -9.68 -7.02 -9.99 -6.08 -8.96 -5.18 -7.91 -4.32 -6.84 -3.5 -5.75 -4.65 -4.61 -2.72 -4.64 -1.98 -3.51 -1.28 -2.36 -0.62 -1.19 0 0Z"/><path d="M0 0 Q-6 -7.5 -15 -8 Q-22 -6.5 -26.3 -1.4 L-24.81 -1.61 -23.27 -1.8 -21.68 -1.96 -20.03 -2.1 -18.32 -2.23 -17.88 -0.65 -16.57 -2.32 -14.76 -2.4 -12.89 -2.46 -10.97 -2.49 -9 -2.5 -9.16 -0.89 -7.83 -2.21 -6.72 -1.92 -5.67 -1.64 -4.68 -1.38 -3.75 -1.12 -4.01 0.46 -2.88 -0.88 -2.07 -0.65 -1.32 -0.42 -0.63 -0.2 0 0Z"/><path d="M0 0 Q-12 -3 -20 2 Q-24 7 -23.1 14.4 L-22.43 12.96 -21.66 11.6 -20.8 10.31 -19.84 9.1 -18.77 7.97 -17.47 8.95 -17.62 6.92 -16.36 5.95 -15 5.06 -13.55 4.24 -12 3.5 -11.3 4.97 -10.44 3.1 -8.96 2.72 -7.56 2.34 -6.24 1.98 -5 1.62 -4.31 3.09 -3.84 1.28 -2.76 0.95 -1.76 0.62 -0.84 0.3 0 0Z"/><path d="M0 0 Q11 5 10.5 14 Q10.5 20 7.9 24.9 L7.14 23.68 6.42 22.38 5.73 20.99 5.08 19.52 4.47 17.98 5.87 17.12 3.9 16.34 3.37 14.63 2.88 12.84 2.42 10.96 2 9 3.48 8.35 1.71 8.01 1.44 7.04 1.19 6.09 0.96 5.16 0.75 4.25 2.28 3.74 0.56 3.36 0.39 2.49 0.24 1.64 0.11 0.81 0 0Z"/><path d="M0 0 Q14 0.5 20 9 Q21.5 17 17.7 22.7 L17.43 21.17 17.09 19.65 16.68 18.14 16.21 16.65 15.68 15.18 17.03 14.27 15.07 13.71 14.4 12.26 13.67 10.83 12.87 9.41 12 8 12.87 6.62 10.8 6.84 9.6 5.76 8.4 4.76 7.2 3.84 6 3 6.62 1.5 4.8 2.24 3.6 1.56 2.4 0.96 1.2 0.44 0 0Z"/><path d="M0 0 Q8 -7 18 -10 Q26 -8 32.1 -1.1 L30.46 -1.37 28.78 -1.62 27.07 -1.86 25.32 -2.08 23.52 -2.27 23.32 -3.9 21.7 -2.46 19.83 -2.62 17.92 -2.76 15.98 -2.89 14 -3 13.39 -4.51 12.42 -2.7 10.88 -2.4 9.38 -2.1 7.92 -1.8 6.5 -1.5 5.88 -3 5.12 -1.2 3.78 -0.9 2.48 -0.6 1.22 -0.3 0 0Z"/><path d="M-1 1 Q-25 24 -27.5 53.7 M1.5 2 Q-21 27 -24.5 55.9"/><path d="M-8.5 14 l2 1 M-14 24 l2 1 M-19 34 l2 0.8 M-23 44 l2 0.6" stroke-width="1"/></g></g><g transform="translate(550.2 507.7) rotate(-15)"><g fill="none" stroke-width="1.3" stroke-linejoin="round"><path d="M0 0 Q-1 -8 -3.5 -19 Q-6 -26 -11.2 -29.2 L-7.84 -28.28 -4.83 -27.21 -2.17 -25.98 0.13 -24.59 2.08 -23.05 1.23 -21.62 3.67 -21.35 4.91 -19.5 5.79 -17.49 6.32 -15.32 6.5 -13 4.87 -12.93 6.26 -11.43 5.92 -9.92 5.49 -8.47 4.98 -7.08 4.38 -5.75 2.83 -6.26 3.68 -4.48 2.9 -3.27 2.02 -2.12 1.05 -1.03 0 0Z"/><path d="M0 0 Q0 -9 -8 -16.5 Q-15 -19.5 -23.1 -15.9 L-21.67 -15.6 -20.22 -15.26 -18.76 -14.87 -17.28 -14.44 -15.78 -13.97 -15.98 -12.36 -14.26 -13.46 -12.72 -12.91 -11.16 -12.32 -9.59 -11.68 -8 -11 -8.95 -9.68 -7.02 -9.99 -6.08 -8.96 -5.18 -7.91 -4.32 -6.84 -3.5 -5.75 -4.65 -4.61 -2.72 -4.64 -1.98 -3.51 -1.28 -2.36 -0.62 -1.19 0 0Z"/><path d="M0 0 Q-6 -7.5 -15 -8 Q-22 -6.5 -26.3 -1.4 L-24.81 -1.61 -23.27 -1.8 -21.68 -1.96 -20.03 -2.1 -18.32 -2.23 -17.88 -0.65 -16.57 -2.32 -14.76 -2.4 -12.89 -2.46 -10.97 -2.49 -9 -2.5 -9.16 -0.89 -7.83 -2.21 -6.72 -1.92 -5.67 -1.64 -4.68 -1.38 -3.75 -1.12 -4.01 0.46 -2.88 -0.88 -2.07 -0.65 -1.32 -0.42 -0.63 -0.2 0 0Z"/><path d="M0 0 Q-12 -3 -20 2 Q-24 7 -23.1 14.4 L-22.43 12.96 -21.66 11.6 -20.8 10.31 -19.84 9.1 -18.77 7.97 -17.47 8.95 -17.62 6.92 -16.36 5.95 -15 5.06 -13.55 4.24 -12 3.5 -11.3 4.97 -10.44 3.1 -8.96 2.72 -7.56 2.34 -6.24 1.98 -5 1.62 -4.31 3.09 -3.84 1.28 -2.76 0.95 -1.76 0.62 -0.84 0.3 0 0Z"/><path d="M0 0 Q11 5 10.5 14 Q10.5 20 7.9 24.9 L7.14 23.68 6.42 22.38 5.73 20.99 5.08 19.52 4.47 17.98 5.87 17.12 3.9 16.34 3.37 14.63 2.88 12.84 2.42 10.96 2 9 3.48 8.35 1.71 8.01 1.44 7.04 1.19 6.09 0.96 5.16 0.75 4.25 2.28 3.74 0.56 3.36 0.39 2.49 0.24 1.64 0.11 0.81 0 0Z"/><path d="M0 0 Q14 0.5 20 9 Q21.5 17 17.7 22.7 L17.43 21.17 17.09 19.65 16.68 18.14 16.21 16.65 15.68 15.18 17.03 14.27 15.07 13.71 14.4 12.26 13.67 10.83 12.87 9.41 12 8 12.87 6.62 10.8 6.84 9.6 5.76 8.4 4.76 7.2 3.84 6 3 6.62 1.5 4.8 2.24 3.6 1.56 2.4 0.96 1.2 0.44 0 0Z"/><path d="M0 0 Q8 -7 18 -10 Q26 -8 32.1 -1.1 L30.46 -1.37 28.78 -1.62 27.07 -1.86 25.32 -2.08 23.52 -2.27 23.32 -3.9 21.7 -2.46 19.83 -2.62 17.92 -2.76 15.98 -2.89 14 -3 13.39 -4.51 12.42 -2.7 10.88 -2.4 9.38 -2.1 7.92 -1.8 6.5 -1.5 5.88 -3 5.12 -1.2 3.78 -0.9 2.48 -0.6 1.22 -0.3 0 0Z"/><path d="M-1 1 Q-25 24 -27.5 53.7 M1.5 2 Q-21 27 -24.5 55.9"/><path d="M-8.5 14 l2 1 M-14 24 l2 1 M-19 34 l2 0.8 M-23 44 l2 0.6" stroke-width="1"/></g></g><g transform="translate(520 580)"><g fill="none" stroke-width="2.5" stroke-linejoin="round" stroke-linecap="round"><path d="M-31.7 50.3 C-42 38 -53 26 -54 10 C-55 -5 -54 -12 -47 -16 L16 -44.5 Q19 -46.5 21.5 -43.5 C33 -35 49 -16 54.7 4.8 L59.2 11.1 L47.5 16.5 A11 11 0 0 0 27 25.5 L-1 37 A11 11 0 0 0 -20 47 Z" fill="var(--bg)"/><circle cx="39.4" cy="23.7" r="7.2"/><circle cx="-8.7" cy="44.9" r="7.2"/><path d="M-45 -9 Q-47.9 -7.8 -47.5 -4 L-46.5 14 Q-46 18 -42 16.5 L-20 4 Q-16 2 -18 -1 L-27 -15.5 Q-29 -18.5 -32 -16.5Z"/><path d="M-7 -24 Q-9.2 -23 -8.5 -20 L-1 -9 Q1 -6 4 -8 L28 -20 Q31.5 -22 29.5 -25 L22 -36 Q20 -39 17 -37.5Z"/><path d="M-20 -23 L-5.6 -0.6" stroke-width="1.5"/><path d="M-57.8 -23.5 Q-20 -33 14.5 -49.5 Q17.5 -49 15.5 -46 Q-20 -29 -57.8 -23.5Z" stroke-width="1.8"/><rect x="-4.5" y="-12.5" width="9" height="25" rx="3" transform="translate(54 -10) rotate(-33)" stroke-width="2.2" fill="var(--bg)"/><path d="M-1 33 Q0 28 3 27 Q2.5 30 5.5 30 Q6 25 9 24 Q8.5 27 11.5 27 Q12 22 15 21 Q14.5 24 17.5 24 Q18 19.5 21 18.5 Q20 21 24 22.5" stroke-width="1.8"/><path d="M47 15 L49 10 L52 12 L54 8" stroke-width="1.6"/></g></g></g></g><g transform="translate(653.8 329.1) scale(-1 1) translate(-520 -580)"><g><g transform="translate(495.5 479) scale(-1 1)"><g fill="none" stroke-width="1.3" stroke-linejoin="round"><path d="M0 0 Q-1 -8 -3.5 -19 Q-6 -26 -11.2 -29.2 L-7.84 -28.28 -4.83 -27.21 -2.17 -25.98 0.13 -24.59 2.08 -23.05 1.23 -21.62 3.67 -21.35 4.91 -19.5 5.79 -17.49 6.32 -15.32 6.5 -13 4.87 -12.93 6.26 -11.43 5.92 -9.92 5.49 -8.47 4.98 -7.08 4.38 -5.75 2.83 -6.26 3.68 -4.48 2.9 -3.27 2.02 -2.12 1.05 -1.03 0 0Z"/><path d="M0 0 Q0 -9 -8 -16.5 Q-15 -19.5 -23.1 -15.9 L-21.67 -15.6 -20.22 -15.26 -18.76 -14.87 -17.28 -14.44 -15.78 -13.97 -15.98 -12.36 -14.26 -13.46 -12.72 -12.91 -11.16 -12.32 -9.59 -11.68 -8 -11 -8.95 -9.68 -7.02 -9.99 -6.08 -8.96 -5.18 -7.91 -4.32 -6.84 -3.5 -5.75 -4.65 -4.61 -2.72 -4.64 -1.98 -3.51 -1.28 -2.36 -0.62 -1.19 0 0Z"/><path d="M0 0 Q-6 -7.5 -15 -8 Q-22 -6.5 -26.3 -1.4 L-24.81 -1.61 -23.27 -1.8 -21.68 -1.96 -20.03 -2.1 -18.32 -2.23 -17.88 -0.65 -16.57 -2.32 -14.76 -2.4 -12.89 -2.46 -10.97 -2.49 -9 -2.5 -9.16 -0.89 -7.83 -2.21 -6.72 -1.92 -5.67 -1.64 -4.68 -1.38 -3.75 -1.12 -4.01 0.46 -2.88 -0.88 -2.07 -0.65 -1.32 -0.42 -0.63 -0.2 0 0Z"/><path d="M0 0 Q-12 -3 -20 2 Q-24 7 -23.1 14.4 L-22.43 12.96 -21.66 11.6 -20.8 10.31 -19.84 9.1 -18.77 7.97 -17.47 8.95 -17.62 6.92 -16.36 5.95 -15 5.06 -13.55 4.24 -12 3.5 -11.3 4.97 -10.44 3.1 -8.96 2.72 -7.56 2.34 -6.24 1.98 -5 1.62 -4.31 3.09 -3.84 1.28 -2.76 0.95 -1.76 0.62 -0.84 0.3 0 0Z"/><path d="M0 0 Q11 5 10.5 14 Q10.5 20 7.9 24.9 L7.14 23.68 6.42 22.38 5.73 20.99 5.08 19.52 4.47 17.98 5.87 17.12 3.9 16.34 3.37 14.63 2.88 12.84 2.42 10.96 2 9 3.48 8.35 1.71 8.01 1.44 7.04 1.19 6.09 0.96 5.16 0.75 4.25 2.28 3.74 0.56 3.36 0.39 2.49 0.24 1.64 0.11 0.81 0 0Z"/><path d="M0 0 Q14 0.5 20 9 Q21.5 17 17.7 22.7 L17.43 21.17 17.09 19.65 16.68 18.14 16.21 16.65 15.68 15.18 17.03 14.27 15.07 13.71 14.4 12.26 13.67 10.83 12.87 9.41 12 8 12.87 6.62 10.8 6.84 9.6 5.76 8.4 4.76 7.2 3.84 6 3 6.62 1.5 4.8 2.24 3.6 1.56 2.4 0.96 1.2 0.44 0 0Z"/><path d="M0 0 Q8 -7 18 -10 Q26 -8 32.1 -1.1 L30.46 -1.37 28.78 -1.62 27.07 -1.86 25.32 -2.08 23.52 -2.27 23.32 -3.9 21.7 -2.46 19.83 -2.62 17.92 -2.76 15.98 -2.89 14 -3 13.39 -4.51 12.42 -2.7 10.88 -2.4 9.38 -2.1 7.92 -1.8 6.5 -1.5 5.88 -3 5.12 -1.2 3.78 -0.9 2.48 -0.6 1.22 -0.3 0 0Z"/><path d="M-1 1 Q-25 24 -27.5 53.7 M1.5 2 Q-21 27 -24.5 55.9"/><path d="M-8.5 14 l2 1 M-14 24 l2 1 M-19 34 l2 0.8 M-23 44 l2 0.6" stroke-width="1"/></g></g><g transform="translate(550.2 507.7) rotate(-15)"><g fill="none" stroke-width="1.3" stroke-linejoin="round"><path d="M0 0 Q-1 -8 -3.5 -19 Q-6 -26 -11.2 -29.2 L-7.84 -28.28 -4.83 -27.21 -2.17 -25.98 0.13 -24.59 2.08 -23.05 1.23 -21.62 3.67 -21.35 4.91 -19.5 5.79 -17.49 6.32 -15.32 6.5 -13 4.87 -12.93 6.26 -11.43 5.92 -9.92 5.49 -8.47 4.98 -7.08 4.38 -5.75 2.83 -6.26 3.68 -4.48 2.9 -3.27 2.02 -2.12 1.05 -1.03 0 0Z"/><path d="M0 0 Q0 -9 -8 -16.5 Q-15 -19.5 -23.1 -15.9 L-21.67 -15.6 -20.22 -15.26 -18.76 -14.87 -17.28 -14.44 -15.78 -13.97 -15.98 -12.36 -14.26 -13.46 -12.72 -12.91 -11.16 -12.32 -9.59 -11.68 -8 -11 -8.95 -9.68 -7.02 -9.99 -6.08 -8.96 -5.18 -7.91 -4.32 -6.84 -3.5 -5.75 -4.65 -4.61 -2.72 -4.64 -1.98 -3.51 -1.28 -2.36 -0.62 -1.19 0 0Z"/><path d="M0 0 Q-6 -7.5 -15 -8 Q-22 -6.5 -26.3 -1.4 L-24.81 -1.61 -23.27 -1.8 -21.68 -1.96 -20.03 -2.1 -18.32 -2.23 -17.88 -0.65 -16.57 -2.32 -14.76 -2.4 -12.89 -2.46 -10.97 -2.49 -9 -2.5 -9.16 -0.89 -7.83 -2.21 -6.72 -1.92 -5.67 -1.64 -4.68 -1.38 -3.75 -1.12 -4.01 0.46 -2.88 -0.88 -2.07 -0.65 -1.32 -0.42 -0.63 -0.2 0 0Z"/><path d="M0 0 Q-12 -3 -20 2 Q-24 7 -23.1 14.4 L-22.43 12.96 -21.66 11.6 -20.8 10.31 -19.84 9.1 -18.77 7.97 -17.47 8.95 -17.62 6.92 -16.36 5.95 -15 5.06 -13.55 4.24 -12 3.5 -11.3 4.97 -10.44 3.1 -8.96 2.72 -7.56 2.34 -6.24 1.98 -5 1.62 -4.31 3.09 -3.84 1.28 -2.76 0.95 -1.76 0.62 -0.84 0.3 0 0Z"/><path d="M0 0 Q11 5 10.5 14 Q10.5 20 7.9 24.9 L7.14 23.68 6.42 22.38 5.73 20.99 5.08 19.52 4.47 17.98 5.87 17.12 3.9 16.34 3.37 14.63 2.88 12.84 2.42 10.96 2 9 3.48 8.35 1.71 8.01 1.44 7.04 1.19 6.09 0.96 5.16 0.75 4.25 2.28 3.74 0.56 3.36 0.39 2.49 0.24 1.64 0.11 0.81 0 0Z"/><path d="M0 0 Q14 0.5 20 9 Q21.5 17 17.7 22.7 L17.43 21.17 17.09 19.65 16.68 18.14 16.21 16.65 15.68 15.18 17.03 14.27 15.07 13.71 14.4 12.26 13.67 10.83 12.87 9.41 12 8 12.87 6.62 10.8 6.84 9.6 5.76 8.4 4.76 7.2 3.84 6 3 6.62 1.5 4.8 2.24 3.6 1.56 2.4 0.96 1.2 0.44 0 0Z"/><path d="M0 0 Q8 -7 18 -10 Q26 -8 32.1 -1.1 L30.46 -1.37 28.78 -1.62 27.07 -1.86 25.32 -2.08 23.52 -2.27 23.32 -3.9 21.7 -2.46 19.83 -2.62 17.92 -2.76 15.98 -2.89 14 -3 13.39 -4.51 12.42 -2.7 10.88 -2.4 9.38 -2.1 7.92 -1.8 6.5 -1.5 5.88 -3 5.12 -1.2 3.78 -0.9 2.48 -0.6 1.22 -0.3 0 0Z"/><path d="M-1 1 Q-25 24 -27.5 53.7 M1.5 2 Q-21 27 -24.5 55.9"/><path d="M-8.5 14 l2 1 M-14 24 l2 1 M-19 34 l2 0.8 M-23 44 l2 0.6" stroke-width="1"/></g></g><g transform="translate(520 580)"><g fill="none" stroke-width="2.5" stroke-linejoin="round" stroke-linecap="round"><path d="M-31.7 50.3 C-42 38 -53 26 -54 10 C-55 -5 -54 -12 -47 -16 L16 -44.5 Q19 -46.5 21.5 -43.5 C33 -35 49 -16 54.7 4.8 L59.2 11.1 L47.5 16.5 A11 11 0 0 0 27 25.5 L-1 37 A11 11 0 0 0 -20 47 Z" fill="var(--bg)"/><circle cx="39.4" cy="23.7" r="7.2"/><circle cx="-8.7" cy="44.9" r="7.2"/><path d="M-45 -9 Q-47.9 -7.8 -47.5 -4 L-46.5 14 Q-46 18 -42 16.5 L-20 4 Q-16 2 -18 -1 L-27 -15.5 Q-29 -18.5 -32 -16.5Z"/><path d="M-7 -24 Q-9.2 -23 -8.5 -20 L-1 -9 Q1 -6 4 -8 L28 -20 Q31.5 -22 29.5 -25 L22 -36 Q20 -39 17 -37.5Z"/><path d="M-20 -23 L-5.6 -0.6" stroke-width="1.5"/><path d="M-57.8 -23.5 Q-20 -33 14.5 -49.5 Q17.5 -49 15.5 -46 Q-20 -29 -57.8 -23.5Z" stroke-width="1.8"/><rect x="-4.5" y="-12.5" width="9" height="25" rx="3" transform="translate(54 -10) rotate(-33)" stroke-width="2.2" fill="var(--bg)"/><path d="M-1 33 Q0 28 3 27 Q2.5 30 5.5 30 Q6 25 9 24 Q8.5 27 11.5 27 Q12 22 15 21 Q14.5 24 17.5 24 Q18 19.5 21 18.5 Q20 21 24 22.5" stroke-width="1.8"/><path d="M47 15 L49 10 L52 12 L54 8" stroke-width="1.6"/></g></g></g></g><g transform="translate(260.8 660.1) rotate(45) translate(-520 -580)"><g><g transform="translate(495.5 479) scale(-1 1)"><g fill="none" stroke-width="1.3" stroke-linejoin="round"><path d="M0 0 Q-1 -8 -3.5 -19 Q-6 -26 -11.2 -29.2 L-7.84 -28.28 -4.83 -27.21 -2.17 -25.98 0.13 -24.59 2.08 -23.05 1.23 -21.62 3.67 -21.35 4.91 -19.5 5.79 -17.49 6.32 -15.32 6.5 -13 4.87 -12.93 6.26 -11.43 5.92 -9.92 5.49 -8.47 4.98 -7.08 4.38 -5.75 2.83 -6.26 3.68 -4.48 2.9 -3.27 2.02 -2.12 1.05 -1.03 0 0Z"/><path d="M0 0 Q0 -9 -8 -16.5 Q-15 -19.5 -23.1 -15.9 L-21.67 -15.6 -20.22 -15.26 -18.76 -14.87 -17.28 -14.44 -15.78 -13.97 -15.98 -12.36 -14.26 -13.46 -12.72 -12.91 -11.16 -12.32 -9.59 -11.68 -8 -11 -8.95 -9.68 -7.02 -9.99 -6.08 -8.96 -5.18 -7.91 -4.32 -6.84 -3.5 -5.75 -4.65 -4.61 -2.72 -4.64 -1.98 -3.51 -1.28 -2.36 -0.62 -1.19 0 0Z"/><path d="M0 0 Q-6 -7.5 -15 -8 Q-22 -6.5 -26.3 -1.4 L-24.81 -1.61 -23.27 -1.8 -21.68 -1.96 -20.03 -2.1 -18.32 -2.23 -17.88 -0.65 -16.57 -2.32 -14.76 -2.4 -12.89 -2.46 -10.97 -2.49 -9 -2.5 -9.16 -0.89 -7.83 -2.21 -6.72 -1.92 -5.67 -1.64 -4.68 -1.38 -3.75 -1.12 -4.01 0.46 -2.88 -0.88 -2.07 -0.65 -1.32 -0.42 -0.63 -0.2 0 0Z"/><path d="M0 0 Q-12 -3 -20 2 Q-24 7 -23.1 14.4 L-22.43 12.96 -21.66 11.6 -20.8 10.31 -19.84 9.1 -18.77 7.97 -17.47 8.95 -17.62 6.92 -16.36 5.95 -15 5.06 -13.55 4.24 -12 3.5 -11.3 4.97 -10.44 3.1 -8.96 2.72 -7.56 2.34 -6.24 1.98 -5 1.62 -4.31 3.09 -3.84 1.28 -2.76 0.95 -1.76 0.62 -0.84 0.3 0 0Z"/><path d="M0 0 Q11 5 10.5 14 Q10.5 20 7.9 24.9 L7.14 23.68 6.42 22.38 5.73 20.99 5.08 19.52 4.47 17.98 5.87 17.12 3.9 16.34 3.37 14.63 2.88 12.84 2.42 10.96 2 9 3.48 8.35 1.71 8.01 1.44 7.04 1.19 6.09 0.96 5.16 0.75 4.25 2.28 3.74 0.56 3.36 0.39 2.49 0.24 1.64 0.11 0.81 0 0Z"/><path d="M0 0 Q14 0.5 20 9 Q21.5 17 17.7 22.7 L17.43 21.17 17.09 19.65 16.68 18.14 16.21 16.65 15.68 15.18 17.03 14.27 15.07 13.71 14.4 12.26 13.67 10.83 12.87 9.41 12 8 12.87 6.62 10.8 6.84 9.6 5.76 8.4 4.76 7.2 3.84 6 3 6.62 1.5 4.8 2.24 3.6 1.56 2.4 0.96 1.2 0.44 0 0Z"/><path d="M0 0 Q8 -7 18 -10 Q26 -8 32.1 -1.1 L30.46 -1.37 28.78 -1.62 27.07 -1.86 25.32 -2.08 23.52 -2.27 23.32 -3.9 21.7 -2.46 19.83 -2.62 17.92 -2.76 15.98 -2.89 14 -3 13.39 -4.51 12.42 -2.7 10.88 -2.4 9.38 -2.1 7.92 -1.8 6.5 -1.5 5.88 -3 5.12 -1.2 3.78 -0.9 2.48 -0.6 1.22 -0.3 0 0Z"/><path d="M-1 1 Q-25 24 -27.5 53.7 M1.5 2 Q-21 27 -24.5 55.9"/><path d="M-8.5 14 l2 1 M-14 24 l2 1 M-19 34 l2 0.8 M-23 44 l2 0.6" stroke-width="1"/></g></g><g transform="translate(550.2 507.7) rotate(-15)"><g fill="none" stroke-width="1.3" stroke-linejoin="round"><path d="M0 0 Q-1 -8 -3.5 -19 Q-6 -26 -11.2 -29.2 L-7.84 -28.28 -4.83 -27.21 -2.17 -25.98 0.13 -24.59 2.08 -23.05 1.23 -21.62 3.67 -21.35 4.91 -19.5 5.79 -17.49 6.32 -15.32 6.5 -13 4.87 -12.93 6.26 -11.43 5.92 -9.92 5.49 -8.47 4.98 -7.08 4.38 -5.75 2.83 -6.26 3.68 -4.48 2.9 -3.27 2.02 -2.12 1.05 -1.03 0 0Z"/><path d="M0 0 Q0 -9 -8 -16.5 Q-15 -19.5 -23.1 -15.9 L-21.67 -15.6 -20.22 -15.26 -18.76 -14.87 -17.28 -14.44 -15.78 -13.97 -15.98 -12.36 -14.26 -13.46 -12.72 -12.91 -11.16 -12.32 -9.59 -11.68 -8 -11 -8.95 -9.68 -7.02 -9.99 -6.08 -8.96 -5.18 -7.91 -4.32 -6.84 -3.5 -5.75 -4.65 -4.61 -2.72 -4.64 -1.98 -3.51 -1.28 -2.36 -0.62 -1.19 0 0Z"/><path d="M0 0 Q-6 -7.5 -15 -8 Q-22 -6.5 -26.3 -1.4 L-24.81 -1.61 -23.27 -1.8 -21.68 -1.96 -20.03 -2.1 -18.32 -2.23 -17.88 -0.65 -16.57 -2.32 -14.76 -2.4 -12.89 -2.46 -10.97 -2.49 -9 -2.5 -9.16 -0.89 -7.83 -2.21 -6.72 -1.92 -5.67 -1.64 -4.68 -1.38 -3.75 -1.12 -4.01 0.46 -2.88 -0.88 -2.07 -0.65 -1.32 -0.42 -0.63 -0.2 0 0Z"/><path d="M0 0 Q-12 -3 -20 2 Q-24 7 -23.1 14.4 L-22.43 12.96 -21.66 11.6 -20.8 10.31 -19.84 9.1 -18.77 7.97 -17.47 8.95 -17.62 6.92 -16.36 5.95 -15 5.06 -13.55 4.24 -12 3.5 -11.3 4.97 -10.44 3.1 -8.96 2.72 -7.56 2.34 -6.24 1.98 -5 1.62 -4.31 3.09 -3.84 1.28 -2.76 0.95 -1.76 0.62 -0.84 0.3 0 0Z"/><path d="M0 0 Q11 5 10.5 14 Q10.5 20 7.9 24.9 L7.14 23.68 6.42 22.38 5.73 20.99 5.08 19.52 4.47 17.98 5.87 17.12 3.9 16.34 3.37 14.63 2.88 12.84 2.42 10.96 2 9 3.48 8.35 1.71 8.01 1.44 7.04 1.19 6.09 0.96 5.16 0.75 4.25 2.28 3.74 0.56 3.36 0.39 2.49 0.24 1.64 0.11 0.81 0 0Z"/><path d="M0 0 Q14 0.5 20 9 Q21.5 17 17.7 22.7 L17.43 21.17 17.09 19.65 16.68 18.14 16.21 16.65 15.68 15.18 17.03 14.27 15.07 13.71 14.4 12.26 13.67 10.83 12.87 9.41 12 8 12.87 6.62 10.8 6.84 9.6 5.76 8.4 4.76 7.2 3.84 6 3 6.62 1.5 4.8 2.24 3.6 1.56 2.4 0.96 1.2 0.44 0 0Z"/><path d="M0 0 Q8 -7 18 -10 Q26 -8 32.1 -1.1 L30.46 -1.37 28.78 -1.62 27.07 -1.86 25.32 -2.08 23.52 -2.27 23.32 -3.9 21.7 -2.46 19.83 -2.62 17.92 -2.76 15.98 -2.89 14 -3 13.39 -4.51 12.42 -2.7 10.88 -2.4 9.38 -2.1 7.92 -1.8 6.5 -1.5 5.88 -3 5.12 -1.2 3.78 -0.9 2.48 -0.6 1.22 -0.3 0 0Z"/><path d="M-1 1 Q-25 24 -27.5 53.7 M1.5 2 Q-21 27 -24.5 55.9"/><path d="M-8.5 14 l2 1 M-14 24 l2 1 M-19 34 l2 0.8 M-23 44 l2 0.6" stroke-width="1"/></g></g><g transform="translate(520 580)"><g fill="none" stroke-width="2.5" stroke-linejoin="round" stroke-linecap="round"><path d="M-31.7 50.3 C-42 38 -53 26 -54 10 C-55 -5 -54 -12 -47 -16 L16 -44.5 Q19 -46.5 21.5 -43.5 C33 -35 49 -16 54.7 4.8 L59.2 11.1 L47.5 16.5 A11 11 0 0 0 27 25.5 L-1 37 A11 11 0 0 0 -20 47 Z" fill="var(--bg)"/><circle cx="39.4" cy="23.7" r="7.2"/><circle cx="-8.7" cy="44.9" r="7.2"/><path d="M-45 -9 Q-47.9 -7.8 -47.5 -4 L-46.5 14 Q-46 18 -42 16.5 L-20 4 Q-16 2 -18 -1 L-27 -15.5 Q-29 -18.5 -32 -16.5Z"/><path d="M-7 -24 Q-9.2 -23 -8.5 -20 L-1 -9 Q1 -6 4 -8 L28 -20 Q31.5 -22 29.5 -25 L22 -36 Q20 -39 17 -37.5Z"/><path d="M-20 -23 L-5.6 -0.6" stroke-width="1.5"/><path d="M-57.8 -23.5 Q-20 -33 14.5 -49.5 Q17.5 -49 15.5 -46 Q-20 -29 -57.8 -23.5Z" stroke-width="1.8"/><rect x="-4.5" y="-12.5" width="9" height="25" rx="3" transform="translate(54 -10) rotate(-33)" stroke-width="2.2" fill="var(--bg)"/><path d="M-1 33 Q0 28 3 27 Q2.5 30 5.5 30 Q6 25 9 24 Q8.5 27 11.5 27 Q12 22 15 21 Q14.5 24 17.5 24 Q18 19.5 21 18.5 Q20 21 24 22.5" stroke-width="1.8"/><path d="M47 15 L49 10 L52 12 L54 8" stroke-width="1.6"/></g></g></g></g><g transform="translate(838.8 660.1) rotate(45) translate(-520 -580)"><g><g transform="translate(495.5 479) scale(-1 1)"><g fill="none" stroke-width="1.3" stroke-linejoin="round"><path d="M0 0 Q-1 -8 -3.5 -19 Q-6 -26 -11.2 -29.2 L-7.84 -28.28 -4.83 -27.21 -2.17 -25.98 0.13 -24.59 2.08 -23.05 1.23 -21.62 3.67 -21.35 4.91 -19.5 5.79 -17.49 6.32 -15.32 6.5 -13 4.87 -12.93 6.26 -11.43 5.92 -9.92 5.49 -8.47 4.98 -7.08 4.38 -5.75 2.83 -6.26 3.68 -4.48 2.9 -3.27 2.02 -2.12 1.05 -1.03 0 0Z"/><path d="M0 0 Q0 -9 -8 -16.5 Q-15 -19.5 -23.1 -15.9 L-21.67 -15.6 -20.22 -15.26 -18.76 -14.87 -17.28 -14.44 -15.78 -13.97 -15.98 -12.36 -14.26 -13.46 -12.72 -12.91 -11.16 -12.32 -9.59 -11.68 -8 -11 -8.95 -9.68 -7.02 -9.99 -6.08 -8.96 -5.18 -7.91 -4.32 -6.84 -3.5 -5.75 -4.65 -4.61 -2.72 -4.64 -1.98 -3.51 -1.28 -2.36 -0.62 -1.19 0 0Z"/><path d="M0 0 Q-6 -7.5 -15 -8 Q-22 -6.5 -26.3 -1.4 L-24.81 -1.61 -23.27 -1.8 -21.68 -1.96 -20.03 -2.1 -18.32 -2.23 -17.88 -0.65 -16.57 -2.32 -14.76 -2.4 -12.89 -2.46 -10.97 -2.49 -9 -2.5 -9.16 -0.89 -7.83 -2.21 -6.72 -1.92 -5.67 -1.64 -4.68 -1.38 -3.75 -1.12 -4.01 0.46 -2.88 -0.88 -2.07 -0.65 -1.32 -0.42 -0.63 -0.2 0 0Z"/><path d="M0 0 Q-12 -3 -20 2 Q-24 7 -23.1 14.4 L-22.43 12.96 -21.66 11.6 -20.8 10.31 -19.84 9.1 -18.77 7.97 -17.47 8.95 -17.62 6.92 -16.36 5.95 -15 5.06 -13.55 4.24 -12 3.5 -11.3 4.97 -10.44 3.1 -8.96 2.72 -7.56 2.34 -6.24 1.98 -5 1.62 -4.31 3.09 -3.84 1.28 -2.76 0.95 -1.76 0.62 -0.84 0.3 0 0Z"/><path d="M0 0 Q11 5 10.5 14 Q10.5 20 7.9 24.9 L7.14 23.68 6.42 22.38 5.73 20.99 5.08 19.52 4.47 17.98 5.87 17.12 3.9 16.34 3.37 14.63 2.88 12.84 2.42 10.96 2 9 3.48 8.35 1.71 8.01 1.44 7.04 1.19 6.09 0.96 5.16 0.75 4.25 2.28 3.74 0.56 3.36 0.39 2.49 0.24 1.64 0.11 0.81 0 0Z"/><path d="M0 0 Q14 0.5 20 9 Q21.5 17 17.7 22.7 L17.43 21.17 17.09 19.65 16.68 18.14 16.21 16.65 15.68 15.18 17.03 14.27 15.07 13.71 14.4 12.26 13.67 10.83 12.87 9.41 12 8 12.87 6.62 10.8 6.84 9.6 5.76 8.4 4.76 7.2 3.84 6 3 6.62 1.5 4.8 2.24 3.6 1.56 2.4 0.96 1.2 0.44 0 0Z"/><path d="M0 0 Q8 -7 18 -10 Q26 -8 32.1 -1.1 L30.46 -1.37 28.78 -1.62 27.07 -1.86 25.32 -2.08 23.52 -2.27 23.32 -3.9 21.7 -2.46 19.83 -2.62 17.92 -2.76 15.98 -2.89 14 -3 13.39 -4.51 12.42 -2.7 10.88 -2.4 9.38 -2.1 7.92 -1.8 6.5 -1.5 5.88 -3 5.12 -1.2 3.78 -0.9 2.48 -0.6 1.22 -0.3 0 0Z"/><path d="M-1 1 Q-25 24 -27.5 53.7 M1.5 2 Q-21 27 -24.5 55.9"/><path d="M-8.5 14 l2 1 M-14 24 l2 1 M-19 34 l2 0.8 M-23 44 l2 0.6" stroke-width="1"/></g></g><g transform="translate(550.2 507.7) rotate(-15)"><g fill="none" stroke-width="1.3" stroke-linejoin="round"><path d="M0 0 Q-1 -8 -3.5 -19 Q-6 -26 -11.2 -29.2 L-7.84 -28.28 -4.83 -27.21 -2.17 -25.98 0.13 -24.59 2.08 -23.05 1.23 -21.62 3.67 -21.35 4.91 -19.5 5.79 -17.49 6.32 -15.32 6.5 -13 4.87 -12.93 6.26 -11.43 5.92 -9.92 5.49 -8.47 4.98 -7.08 4.38 -5.75 2.83 -6.26 3.68 -4.48 2.9 -3.27 2.02 -2.12 1.05 -1.03 0 0Z"/><path d="M0 0 Q0 -9 -8 -16.5 Q-15 -19.5 -23.1 -15.9 L-21.67 -15.6 -20.22 -15.26 -18.76 -14.87 -17.28 -14.44 -15.78 -13.97 -15.98 -12.36 -14.26 -13.46 -12.72 -12.91 -11.16 -12.32 -9.59 -11.68 -8 -11 -8.95 -9.68 -7.02 -9.99 -6.08 -8.96 -5.18 -7.91 -4.32 -6.84 -3.5 -5.75 -4.65 -4.61 -2.72 -4.64 -1.98 -3.51 -1.28 -2.36 -0.62 -1.19 0 0Z"/><path d="M0 0 Q-6 -7.5 -15 -8 Q-22 -6.5 -26.3 -1.4 L-24.81 -1.61 -23.27 -1.8 -21.68 -1.96 -20.03 -2.1 -18.32 -2.23 -17.88 -0.65 -16.57 -2.32 -14.76 -2.4 -12.89 -2.46 -10.97 -2.49 -9 -2.5 -9.16 -0.89 -7.83 -2.21 -6.72 -1.92 -5.67 -1.64 -4.68 -1.38 -3.75 -1.12 -4.01 0.46 -2.88 -0.88 -2.07 -0.65 -1.32 -0.42 -0.63 -0.2 0 0Z"/><path d="M0 0 Q-12 -3 -20 2 Q-24 7 -23.1 14.4 L-22.43 12.96 -21.66 11.6 -20.8 10.31 -19.84 9.1 -18.77 7.97 -17.47 8.95 -17.62 6.92 -16.36 5.95 -15 5.06 -13.55 4.24 -12 3.5 -11.3 4.97 -10.44 3.1 -8.96 2.72 -7.56 2.34 -6.24 1.98 -5 1.62 -4.31 3.09 -3.84 1.28 -2.76 0.95 -1.76 0.62 -0.84 0.3 0 0Z"/><path d="M0 0 Q11 5 10.5 14 Q10.5 20 7.9 24.9 L7.14 23.68 6.42 22.38 5.73 20.99 5.08 19.52 4.47 17.98 5.87 17.12 3.9 16.34 3.37 14.63 2.88 12.84 2.42 10.96 2 9 3.48 8.35 1.71 8.01 1.44 7.04 1.19 6.09 0.96 5.16 0.75 4.25 2.28 3.74 0.56 3.36 0.39 2.49 0.24 1.64 0.11 0.81 0 0Z"/><path d="M0 0 Q14 0.5 20 9 Q21.5 17 17.7 22.7 L17.43 21.17 17.09 19.65 16.68 18.14 16.21 16.65 15.68 15.18 17.03 14.27 15.07 13.71 14.4 12.26 13.67 10.83 12.87 9.41 12 8 12.87 6.62 10.8 6.84 9.6 5.76 8.4 4.76 7.2 3.84 6 3 6.62 1.5 4.8 2.24 3.6 1.56 2.4 0.96 1.2 0.44 0 0Z"/><path d="M0 0 Q8 -7 18 -10 Q26 -8 32.1 -1.1 L30.46 -1.37 28.78 -1.62 27.07 -1.86 25.32 -2.08 23.52 -2.27 23.32 -3.9 21.7 -2.46 19.83 -2.62 17.92 -2.76 15.98 -2.89 14 -3 13.39 -4.51 12.42 -2.7 10.88 -2.4 9.38 -2.1 7.92 -1.8 6.5 -1.5 5.88 -3 5.12 -1.2 3.78 -0.9 2.48 -0.6 1.22 -0.3 0 0Z"/><path d="M-1 1 Q-25 24 -27.5 53.7 M1.5 2 Q-21 27 -24.5 55.9"/><path d="M-8.5 14 l2 1 M-14 24 l2 1 M-19 34 l2 0.8 M-23 44 l2 0.6" stroke-width="1"/></g></g><g transform="translate(520 580)"><g fill="none" stroke-width="2.5" stroke-linejoin="round" stroke-linecap="round"><path d="M-31.7 50.3 C-42 38 -53 26 -54 10 C-55 -5 -54 -12 -47 -16 L16 -44.5 Q19 -46.5 21.5 -43.5 C33 -35 49 -16 54.7 4.8 L59.2 11.1 L47.5 16.5 A11 11 0 0 0 27 25.5 L-1 37 A11 11 0 0 0 -20 47 Z" fill="var(--bg)"/><circle cx="39.4" cy="23.7" r="7.2"/><circle cx="-8.7" cy="44.9" r="7.2"/><path d="M-45 -9 Q-47.9 -7.8 -47.5 -4 L-46.5 14 Q-46 18 -42 16.5 L-20 4 Q-16 2 -18 -1 L-27 -15.5 Q-29 -18.5 -32 -16.5Z"/><path d="M-7 -24 Q-9.2 -23 -8.5 -20 L-1 -9 Q1 -6 4 -8 L28 -20 Q31.5 -22 29.5 -25 L22 -36 Q20 -39 17 -37.5Z"/><path d="M-20 -23 L-5.6 -0.6" stroke-width="1.5"/><path d="M-57.8 -23.5 Q-20 -33 14.5 -49.5 Q17.5 -49 15.5 -46 Q-20 -29 -57.8 -23.5Z" stroke-width="1.8"/><rect x="-4.5" y="-12.5" width="9" height="25" rx="3" transform="translate(54 -10) rotate(-33)" stroke-width="2.2" fill="var(--bg)"/><path d="M-1 33 Q0 28 3 27 Q2.5 30 5.5 30 Q6 25 9 24 Q8.5 27 11.5 27 Q12 22 15 21 Q14.5 24 17.5 24 Q18 19.5 21 18.5 Q20 21 24 22.5" stroke-width="1.8"/><path d="M47 15 L49 10 L52 12 L54 8" stroke-width="1.6"/></g></g></g></g></g><g id="t2" stroke="currentColor"><g transform="translate(273.9 336.8)"><g fill="none" stroke-width="1.3" stroke-linejoin="round"><path d="M0 0 Q-1 -8 -3.5 -19 Q-6 -26 -11.2 -29.2 L-7.84 -28.28 -4.83 -27.21 -2.17 -25.98 0.13 -24.59 2.08 -23.05 1.23 -21.62 3.67 -21.35 4.91 -19.5 5.79 -17.49 6.32 -15.32 6.5 -13 4.87 -12.93 6.26 -11.43 5.92 -9.92 5.49 -8.47 4.98 -7.08 4.38 -5.75 2.83 -6.26 3.68 -4.48 2.9 -3.27 2.02 -2.12 1.05 -1.03 0 0Z"/><path d="M0 0 Q0 -9 -8 -16.5 Q-15 -19.5 -23.1 -15.9 L-21.67 -15.6 -20.22 -15.26 -18.76 -14.87 -17.28 -14.44 -15.78 -13.97 -15.98 -12.36 -14.26 -13.46 -12.72 -12.91 -11.16 -12.32 -9.59 -11.68 -8 -11 -8.95 -9.68 -7.02 -9.99 -6.08 -8.96 -5.18 -7.91 -4.32 -6.84 -3.5 -5.75 -4.65 -4.61 -2.72 -4.64 -1.98 -3.51 -1.28 -2.36 -0.62 -1.19 0 0Z"/><path d="M0 0 Q-6 -7.5 -15 -8 Q-22 -6.5 -26.3 -1.4 L-24.81 -1.61 -23.27 -1.8 -21.68 -1.96 -20.03 -2.1 -18.32 -2.23 -17.88 -0.65 -16.57 -2.32 -14.76 -2.4 -12.89 -2.46 -10.97 -2.49 -9 -2.5 -9.16 -0.89 -7.83 -2.21 -6.72 -1.92 -5.67 -1.64 -4.68 -1.38 -3.75 -1.12 -4.01 0.46 -2.88 -0.88 -2.07 -0.65 -1.32 -0.42 -0.63 -0.2 0 0Z"/><path d="M0 0 Q-12 -3 -20 2 Q-24 7 -23.1 14.4 L-22.43 12.96 -21.66 11.6 -20.8 10.31 -19.84 9.1 -18.77 7.97 -17.47 8.95 -17.62 6.92 -16.36 5.95 -15 5.06 -13.55 4.24 -12 3.5 -11.3 4.97 -10.44 3.1 -8.96 2.72 -7.56 2.34 -6.24 1.98 -5 1.62 -4.31 3.09 -3.84 1.28 -2.76 0.95 -1.76 0.62 -0.84 0.3 0 0Z"/><path d="M0 0 Q11 5 10.5 14 Q10.5 20 7.9 24.9 L7.14 23.68 6.42 22.38 5.73 20.99 5.08 19.52 4.47 17.98 5.87 17.12 3.9 16.34 3.37 14.63 2.88 12.84 2.42 10.96 2 9 3.48 8.35 1.71 8.01 1.44 7.04 1.19 6.09 0.96 5.16 0.75 4.25 2.28 3.74 0.56 3.36 0.39 2.49 0.24 1.64 0.11 0.81 0 0Z"/><path d="M0 0 Q14 0.5 20 9 Q21.5 17 17.7 22.7 L17.43 21.17 17.09 19.65 16.68 18.14 16.21 16.65 15.68 15.18 17.03 14.27 15.07 13.71 14.4 12.26 13.67 10.83 12.87 9.41 12 8 12.87 6.62 10.8 6.84 9.6 5.76 8.4 4.76 7.2 3.84 6 3 6.62 1.5 4.8 2.24 3.6 1.56 2.4 0.96 1.2 0.44 0 0Z"/><path d="M0 0 Q8 -7 18 -10 Q26 -8 32.1 -1.1 L30.46 -1.37 28.78 -1.62 27.07 -1.86 25.32 -2.08 23.52 -2.27 23.32 -3.9 21.7 -2.46 19.83 -2.62 17.92 -2.76 15.98 -2.89 14 -3 13.39 -4.51 12.42 -2.7 10.88 -2.4 9.38 -2.1 7.92 -1.8 6.5 -1.5 5.88 -3 5.12 -1.2 3.78 -0.9 2.48 -0.6 1.22 -0.3 0 0Z"/><path d="M-1 1 Q-25 24 -27.5 53.7 M1.5 2 Q-21 27 -24.5 55.9"/><path d="M-8.5 14 l2 1 M-14 24 l2 1 M-19 34 l2 0.8 M-23 44 l2 0.6" stroke-width="1"/></g></g><g transform="translate(851.9 336.8)"><g fill="none" stroke-width="1.3" stroke-linejoin="round"><path d="M0 0 Q-1 -8 -3.5 -19 Q-6 -26 -11.2 -29.2 L-7.84 -28.28 -4.83 -27.21 -2.17 -25.98 0.13 -24.59 2.08 -23.05 1.23 -21.62 3.67 -21.35 4.91 -19.5 5.79 -17.49 6.32 -15.32 6.5 -13 4.87 -12.93 6.26 -11.43 5.92 -9.92 5.49 -8.47 4.98 -7.08 4.38 -5.75 2.83 -6.26 3.68 -4.48 2.9 -3.27 2.02 -2.12 1.05 -1.03 0 0Z"/><path d="M0 0 Q0 -9 -8 -16.5 Q-15 -19.5 -23.1 -15.9 L-21.67 -15.6 -20.22 -15.26 -18.76 -14.87 -17.28 -14.44 -15.78 -13.97 -15.98 -12.36 -14.26 -13.46 -12.72 -12.91 -11.16 -12.32 -9.59 -11.68 -8 -11 -8.95 -9.68 -7.02 -9.99 -6.08 -8.96 -5.18 -7.91 -4.32 -6.84 -3.5 -5.75 -4.65 -4.61 -2.72 -4.64 -1.98 -3.51 -1.28 -2.36 -0.62 -1.19 0 0Z"/><path d="M0 0 Q-6 -7.5 -15 -8 Q-22 -6.5 -26.3 -1.4 L-24.81 -1.61 -23.27 -1.8 -21.68 -1.96 -20.03 -2.1 -18.32 -2.23 -17.88 -0.65 -16.57 -2.32 -14.76 -2.4 -12.89 -2.46 -10.97 -2.49 -9 -2.5 -9.16 -0.89 -7.83 -2.21 -6.72 -1.92 -5.67 -1.64 -4.68 -1.38 -3.75 -1.12 -4.01 0.46 -2.88 -0.88 -2.07 -0.65 -1.32 -0.42 -0.63 -0.2 0 0Z"/><path d="M0 0 Q-12 -3 -20 2 Q-24 7 -23.1 14.4 L-22.43 12.96 -21.66 11.6 -20.8 10.31 -19.84 9.1 -18.77 7.97 -17.47 8.95 -17.62 6.92 -16.36 5.95 -15 5.06 -13.55 4.24 -12 3.5 -11.3 4.97 -10.44 3.1 -8.96 2.72 -7.56 2.34 -6.24 1.98 -5 1.62 -4.31 3.09 -3.84 1.28 -2.76 0.95 -1.76 0.62 -0.84 0.3 0 0Z"/><path d="M0 0 Q11 5 10.5 14 Q10.5 20 7.9 24.9 L7.14 23.68 6.42 22.38 5.73 20.99 5.08 19.52 4.47 17.98 5.87 17.12 3.9 16.34 3.37 14.63 2.88 12.84 2.42 10.96 2 9 3.48 8.35 1.71 8.01 1.44 7.04 1.19 6.09 0.96 5.16 0.75 4.25 2.28 3.74 0.56 3.36 0.39 2.49 0.24 1.64 0.11 0.81 0 0Z"/><path d="M0 0 Q14 0.5 20 9 Q21.5 17 17.7 22.7 L17.43 21.17 17.09 19.65 16.68 18.14 16.21 16.65 15.68 15.18 17.03 14.27 15.07 13.71 14.4 12.26 13.67 10.83 12.87 9.41 12 8 12.87 6.62 10.8 6.84 9.6 5.76 8.4 4.76 7.2 3.84 6 3 6.62 1.5 4.8 2.24 3.6 1.56 2.4 0.96 1.2 0.44 0 0Z"/><path d="M0 0 Q8 -7 18 -10 Q26 -8 32.1 -1.1 L30.46 -1.37 28.78 -1.62 27.07 -1.86 25.32 -2.08 23.52 -2.27 23.32 -3.9 21.7 -2.46 19.83 -2.62 17.92 -2.76 15.98 -2.89 14 -3 13.39 -4.51 12.42 -2.7 10.88 -2.4 9.38 -2.1 7.92 -1.8 6.5 -1.5 5.88 -3 5.12 -1.2 3.78 -0.9 2.48 -0.6 1.22 -0.3 0 0Z"/><path d="M-1 1 Q-25 24 -27.5 53.7 M1.5 2 Q-21 27 -24.5 55.9"/><path d="M-8.5 14 l2 1 M-14 24 l2 1 M-19 34 l2 0.8 M-23 44 l2 0.6" stroke-width="1"/></g></g><g transform="translate(407.6 817.6)"><g fill="none" stroke-width="1.3" stroke-linejoin="round"><path d="M0 0 Q-1 -8 -3.5 -19 Q-6 -26 -11.2 -29.2 L-7.84 -28.28 -4.83 -27.21 -2.17 -25.98 0.13 -24.59 2.08 -23.05 1.23 -21.62 3.67 -21.35 4.91 -19.5 5.79 -17.49 6.32 -15.32 6.5 -13 4.87 -12.93 6.26 -11.43 5.92 -9.92 5.49 -8.47 4.98 -7.08 4.38 -5.75 2.83 -6.26 3.68 -4.48 2.9 -3.27 2.02 -2.12 1.05 -1.03 0 0Z"/><path d="M0 0 Q0 -9 -8 -16.5 Q-15 -19.5 -23.1 -15.9 L-21.67 -15.6 -20.22 -15.26 -18.76 -14.87 -17.28 -14.44 -15.78 -13.97 -15.98 -12.36 -14.26 -13.46 -12.72 -12.91 -11.16 -12.32 -9.59 -11.68 -8 -11 -8.95 -9.68 -7.02 -9.99 -6.08 -8.96 -5.18 -7.91 -4.32 -6.84 -3.5 -5.75 -4.65 -4.61 -2.72 -4.64 -1.98 -3.51 -1.28 -2.36 -0.62 -1.19 0 0Z"/><path d="M0 0 Q-6 -7.5 -15 -8 Q-22 -6.5 -26.3 -1.4 L-24.81 -1.61 -23.27 -1.8 -21.68 -1.96 -20.03 -2.1 -18.32 -2.23 -17.88 -0.65 -16.57 -2.32 -14.76 -2.4 -12.89 -2.46 -10.97 -2.49 -9 -2.5 -9.16 -0.89 -7.83 -2.21 -6.72 -1.92 -5.67 -1.64 -4.68 -1.38 -3.75 -1.12 -4.01 0.46 -2.88 -0.88 -2.07 -0.65 -1.32 -0.42 -0.63 -0.2 0 0Z"/><path d="M0 0 Q-12 -3 -20 2 Q-24 7 -23.1 14.4 L-22.43 12.96 -21.66 11.6 -20.8 10.31 -19.84 9.1 -18.77 7.97 -17.47 8.95 -17.62 6.92 -16.36 5.95 -15 5.06 -13.55 4.24 -12 3.5 -11.3 4.97 -10.44 3.1 -8.96 2.72 -7.56 2.34 -6.24 1.98 -5 1.62 -4.31 3.09 -3.84 1.28 -2.76 0.95 -1.76 0.62 -0.84 0.3 0 0Z"/><path d="M0 0 Q11 5 10.5 14 Q10.5 20 7.9 24.9 L7.14 23.68 6.42 22.38 5.73 20.99 5.08 19.52 4.47 17.98 5.87 17.12 3.9 16.34 3.37 14.63 2.88 12.84 2.42 10.96 2 9 3.48 8.35 1.71 8.01 1.44 7.04 1.19 6.09 0.96 5.16 0.75 4.25 2.28 3.74 0.56 3.36 0.39 2.49 0.24 1.64 0.11 0.81 0 0Z"/><path d="M0 0 Q14 0.5 20 9 Q21.5 17 17.7 22.7 L17.43 21.17 17.09 19.65 16.68 18.14 16.21 16.65 15.68 15.18 17.03 14.27 15.07 13.71 14.4 12.26 13.67 10.83 12.87 9.41 12 8 12.87 6.62 10.8 6.84 9.6 5.76 8.4 4.76 7.2 3.84 6 3 6.62 1.5 4.8 2.24 3.6 1.56 2.4 0.96 1.2 0.44 0 0Z"/><path d="M0 0 Q8 -7 18 -10 Q26 -8 32.1 -1.1 L30.46 -1.37 28.78 -1.62 27.07 -1.86 25.32 -2.08 23.52 -2.27 23.32 -3.9 21.7 -2.46 19.83 -2.62 17.92 -2.76 15.98 -2.89 14 -3 13.39 -4.51 12.42 -2.7 10.88 -2.4 9.38 -2.1 7.92 -1.8 6.5 -1.5 5.88 -3 5.12 -1.2 3.78 -0.9 2.48 -0.6 1.22 -0.3 0 0Z"/><path d="M-1 1 Q-25 24 -27.5 53.7 M1.5 2 Q-21 27 -24.5 55.9"/><path d="M-8.5 14 l2 1 M-14 24 l2 1 M-19 34 l2 0.8 M-23 44 l2 0.6" stroke-width="1"/></g></g><g transform="translate(333 299) rotate(10) scale(0.91 0.91)"><path d="M3.72 -12.97 A2.8 2.8 0 0 1 8.67 -10.34 L7.63 -5.56 Q7.19 -3.51 9.08 -2.59 L13.49 -0.47 A2.8 2.8 0 0 1 12.51 5.05 L7.64 5.54 Q5.56 5.75 5.27 7.83 L4.61 12.68 A2.8 2.8 0 0 1 -0.94 13.46 L-2.91 8.98 Q-3.76 7.06 -5.82 7.44 L-10.64 8.3 A2.8 2.8 0 0 1 -13.09 3.27 L-9.44 0.01 Q-7.88 -1.39 -8.87 -3.24 L-11.18 -7.55 A2.8 2.8 0 0 1 -7.16 -11.44 L-2.93 -8.98 Q-1.11 -7.92 0.34 -9.44 L3.72 -12.97Z" fill="none" stroke-width="1.5"/><circle r="1.7" fill="none" stroke-width="1"/><circle cx="2.44" cy="-4.59" r="1.2" fill="none" stroke-width="0.9"/><circle cx="4.46" cy="-8.39" r="0.9" fill="none" stroke-width="0.9"/><circle cx="5.12" cy="0.9" r="1.2" fill="none" stroke-width="0.9"/><circle cx="9.36" cy="1.65" r="0.9" fill="none" stroke-width="0.9"/><circle cx="0.72" cy="5.15" r="1.2" fill="none" stroke-width="0.9"/><circle cx="1.32" cy="9.41" r="0.9" fill="none" stroke-width="0.9"/><circle cx="-4.67" cy="2.28" r="1.2" fill="none" stroke-width="0.9"/><circle cx="-8.54" cy="4.16" r="0.9" fill="none" stroke-width="0.9"/><circle cx="-3.61" cy="-3.74" r="1.2" fill="none" stroke-width="0.9"/><circle cx="-6.6" cy="-6.83" r="0.9" fill="none" stroke-width="0.9"/></g><g transform="translate(333 877) rotate(10) scale(0.91 0.91)"><path d="M3.72 -12.97 A2.8 2.8 0 0 1 8.67 -10.34 L7.63 -5.56 Q7.19 -3.51 9.08 -2.59 L13.49 -0.47 A2.8 2.8 0 0 1 12.51 5.05 L7.64 5.54 Q5.56 5.75 5.27 7.83 L4.61 12.68 A2.8 2.8 0 0 1 -0.94 13.46 L-2.91 8.98 Q-3.76 7.06 -5.82 7.44 L-10.64 8.3 A2.8 2.8 0 0 1 -13.09 3.27 L-9.44 0.01 Q-7.88 -1.39 -8.87 -3.24 L-11.18 -7.55 A2.8 2.8 0 0 1 -7.16 -11.44 L-2.93 -8.98 Q-1.11 -7.92 0.34 -9.44 L3.72 -12.97Z" fill="none" stroke-width="1.5"/><circle r="1.7" fill="none" stroke-width="1"/><circle cx="2.44" cy="-4.59" r="1.2" fill="none" stroke-width="0.9"/><circle cx="4.46" cy="-8.39" r="0.9" fill="none" stroke-width="0.9"/><circle cx="5.12" cy="0.9" r="1.2" fill="none" stroke-width="0.9"/><circle cx="9.36" cy="1.65" r="0.9" fill="none" stroke-width="0.9"/><circle cx="0.72" cy="5.15" r="1.2" fill="none" stroke-width="0.9"/><circle cx="1.32" cy="9.41" r="0.9" fill="none" stroke-width="0.9"/><circle cx="-4.67" cy="2.28" r="1.2" fill="none" stroke-width="0.9"/><circle cx="-8.54" cy="4.16" r="0.9" fill="none" stroke-width="0.9"/><circle cx="-3.61" cy="-3.74" r="1.2" fill="none" stroke-width="0.9"/><circle cx="-6.6" cy="-6.83" r="0.9" fill="none" stroke-width="0.9"/></g><g transform="translate(368 340) rotate(-8) scale(0.91 0.91)"><path d="M3.72 -12.97 A2.8 2.8 0 0 1 8.67 -10.34 L7.63 -5.56 Q7.19 -3.51 9.08 -2.59 L13.49 -0.47 A2.8 2.8 0 0 1 12.51 5.05 L7.64 5.54 Q5.56 5.75 5.27 7.83 L4.61 12.68 A2.8 2.8 0 0 1 -0.94 13.46 L-2.91 8.98 Q-3.76 7.06 -5.82 7.44 L-10.64 8.3 A2.8 2.8 0 0 1 -13.09 3.27 L-9.44 0.01 Q-7.88 -1.39 -8.87 -3.24 L-11.18 -7.55 A2.8 2.8 0 0 1 -7.16 -11.44 L-2.93 -8.98 Q-1.11 -7.92 0.34 -9.44 L3.72 -12.97Z" fill="none" stroke-width="1.5"/><circle r="1.7" fill="none" stroke-width="1"/><circle cx="2.44" cy="-4.59" r="1.2" fill="none" stroke-width="0.9"/><circle cx="4.46" cy="-8.39" r="0.9" fill="none" stroke-width="0.9"/><circle cx="5.12" cy="0.9" r="1.2" fill="none" stroke-width="0.9"/><circle cx="9.36" cy="1.65" r="0.9" fill="none" stroke-width="0.9"/><circle cx="0.72" cy="5.15" r="1.2" fill="none" stroke-width="0.9"/><circle cx="1.32" cy="9.41" r="0.9" fill="none" stroke-width="0.9"/><circle cx="-4.67" cy="2.28" r="1.2" fill="none" stroke-width="0.9"/><circle cx="-8.54" cy="4.16" r="0.9" fill="none" stroke-width="0.9"/><circle cx="-3.61" cy="-3.74" r="1.2" fill="none" stroke-width="0.9"/><circle cx="-6.6" cy="-6.83" r="0.9" fill="none" stroke-width="0.9"/></g><g transform="translate(462.8 408.9)"><path d="M3.72 -12.97 A2.8 2.8 0 0 1 8.67 -10.34 L7.63 -5.56 Q7.19 -3.51 9.08 -2.59 L13.49 -0.47 A2.8 2.8 0 0 1 12.51 5.05 L7.64 5.54 Q5.56 5.75 5.27 7.83 L4.61 12.68 A2.8 2.8 0 0 1 -0.94 13.46 L-2.91 8.98 Q-3.76 7.06 -5.82 7.44 L-10.64 8.3 A2.8 2.8 0 0 1 -13.09 3.27 L-9.44 0.01 Q-7.88 -1.39 -8.87 -3.24 L-11.18 -7.55 A2.8 2.8 0 0 1 -7.16 -11.44 L-2.93 -8.98 Q-1.11 -7.92 0.34 -9.44 L3.72 -12.97Z" fill="none" stroke-width="1.5"/><circle r="1.7" fill="none" stroke-width="1"/><circle cx="2.44" cy="-4.59" r="1.2" fill="none" stroke-width="0.9"/><circle cx="4.46" cy="-8.39" r="0.9" fill="none" stroke-width="0.9"/><circle cx="5.12" cy="0.9" r="1.2" fill="none" stroke-width="0.9"/><circle cx="9.36" cy="1.65" r="0.9" fill="none" stroke-width="0.9"/><circle cx="0.72" cy="5.15" r="1.2" fill="none" stroke-width="0.9"/><circle cx="1.32" cy="9.41" r="0.9" fill="none" stroke-width="0.9"/><circle cx="-4.67" cy="2.28" r="1.2" fill="none" stroke-width="0.9"/><circle cx="-8.54" cy="4.16" r="0.9" fill="none" stroke-width="0.9"/><circle cx="-3.61" cy="-3.74" r="1.2" fill="none" stroke-width="0.9"/><circle cx="-6.6" cy="-6.83" r="0.9" fill="none" stroke-width="0.9"/></g><g transform="translate(433 440) rotate(15) scale(0.88 0.88)"><path d="M3.72 -12.97 A2.8 2.8 0 0 1 8.67 -10.34 L7.63 -5.56 Q7.19 -3.51 9.08 -2.59 L13.49 -0.47 A2.8 2.8 0 0 1 12.51 5.05 L7.64 5.54 Q5.56 5.75 5.27 7.83 L4.61 12.68 A2.8 2.8 0 0 1 -0.94 13.46 L-2.91 8.98 Q-3.76 7.06 -5.82 7.44 L-10.64 8.3 A2.8 2.8 0 0 1 -13.09 3.27 L-9.44 0.01 Q-7.88 -1.39 -8.87 -3.24 L-11.18 -7.55 A2.8 2.8 0 0 1 -7.16 -11.44 L-2.93 -8.98 Q-1.11 -7.92 0.34 -9.44 L3.72 -12.97Z" fill="none" stroke-width="1.5"/><circle r="1.7" fill="none" stroke-width="1"/><circle cx="2.44" cy="-4.59" r="1.2" fill="none" stroke-width="0.9"/><circle cx="4.46" cy="-8.39" r="0.9" fill="none" stroke-width="0.9"/><circle cx="5.12" cy="0.9" r="1.2" fill="none" stroke-width="0.9"/><circle cx="9.36" cy="1.65" r="0.9" fill="none" stroke-width="0.9"/><circle cx="0.72" cy="5.15" r="1.2" fill="none" stroke-width="0.9"/><circle cx="1.32" cy="9.41" r="0.9" fill="none" stroke-width="0.9"/><circle cx="-4.67" cy="2.28" r="1.2" fill="none" stroke-width="0.9"/><circle cx="-8.54" cy="4.16" r="0.9" fill="none" stroke-width="0.9"/><circle cx="-3.61" cy="-3.74" r="1.2" fill="none" stroke-width="0.9"/><circle cx="-6.6" cy="-6.83" r="0.9" fill="none" stroke-width="0.9"/></g><g transform="translate(787 296) rotate(-12) scale(0.91 0.91)"><path d="M3.72 -12.97 A2.8 2.8 0 0 1 8.67 -10.34 L7.63 -5.56 Q7.19 -3.51 9.08 -2.59 L13.49 -0.47 A2.8 2.8 0 0 1 12.51 5.05 L7.64 5.54 Q5.56 5.75 5.27 7.83 L4.61 12.68 A2.8 2.8 0 0 1 -0.94 13.46 L-2.91 8.98 Q-3.76 7.06 -5.82 7.44 L-10.64 8.3 A2.8 2.8 0 0 1 -13.09 3.27 L-9.44 0.01 Q-7.88 -1.39 -8.87 -3.24 L-11.18 -7.55 A2.8 2.8 0 0 1 -7.16 -11.44 L-2.93 -8.98 Q-1.11 -7.92 0.34 -9.44 L3.72 -12.97Z" fill="none" stroke-width="1.5"/><circle r="1.7" fill="none" stroke-width="1"/><circle cx="2.44" cy="-4.59" r="1.2" fill="none" stroke-width="0.9"/><circle cx="4.46" cy="-8.39" r="0.9" fill="none" stroke-width="0.9"/><circle cx="5.12" cy="0.9" r="1.2" fill="none" stroke-width="0.9"/><circle cx="9.36" cy="1.65" r="0.9" fill="none" stroke-width="0.9"/><circle cx="0.72" cy="5.15" r="1.2" fill="none" stroke-width="0.9"/><circle cx="1.32" cy="9.41" r="0.9" fill="none" stroke-width="0.9"/><circle cx="-4.67" cy="2.28" r="1.2" fill="none" stroke-width="0.9"/><circle cx="-8.54" cy="4.16" r="0.9" fill="none" stroke-width="0.9"/><circle cx="-3.61" cy="-3.74" r="1.2" fill="none" stroke-width="0.9"/><circle cx="-6.6" cy="-6.83" r="0.9" fill="none" stroke-width="0.9"/></g><g transform="translate(787 874) rotate(-12) scale(0.91 0.91)"><path d="M3.72 -12.97 A2.8 2.8 0 0 1 8.67 -10.34 L7.63 -5.56 Q7.19 -3.51 9.08 -2.59 L13.49 -0.47 A2.8 2.8 0 0 1 12.51 5.05 L7.64 5.54 Q5.56 5.75 5.27 7.83 L4.61 12.68 A2.8 2.8 0 0 1 -0.94 13.46 L-2.91 8.98 Q-3.76 7.06 -5.82 7.44 L-10.64 8.3 A2.8 2.8 0 0 1 -13.09 3.27 L-9.44 0.01 Q-7.88 -1.39 -8.87 -3.24 L-11.18 -7.55 A2.8 2.8 0 0 1 -7.16 -11.44 L-2.93 -8.98 Q-1.11 -7.92 0.34 -9.44 L3.72 -12.97Z" fill="none" stroke-width="1.5"/><circle r="1.7" fill="none" stroke-width="1"/><circle cx="2.44" cy="-4.59" r="1.2" fill="none" stroke-width="0.9"/><circle cx="4.46" cy="-8.39" r="0.9" fill="none" stroke-width="0.9"/><circle cx="5.12" cy="0.9" r="1.2" fill="none" stroke-width="0.9"/><circle cx="9.36" cy="1.65" r="0.9" fill="none" stroke-width="0.9"/><circle cx="0.72" cy="5.15" r="1.2" fill="none" stroke-width="0.9"/><circle cx="1.32" cy="9.41" r="0.9" fill="none" stroke-width="0.9"/><circle cx="-4.67" cy="2.28" r="1.2" fill="none" stroke-width="0.9"/><circle cx="-8.54" cy="4.16" r="0.9" fill="none" stroke-width="0.9"/><circle cx="-3.61" cy="-3.74" r="1.2" fill="none" stroke-width="0.9"/><circle cx="-6.6" cy="-6.83" r="0.9" fill="none" stroke-width="0.9"/></g><g transform="translate(700 417) rotate(20) scale(1.15 1.15)"><path d="M3.72 -12.97 A2.8 2.8 0 0 1 8.67 -10.34 L7.63 -5.56 Q7.19 -3.51 9.08 -2.59 L13.49 -0.47 A2.8 2.8 0 0 1 12.51 5.05 L7.64 5.54 Q5.56 5.75 5.27 7.83 L4.61 12.68 A2.8 2.8 0 0 1 -0.94 13.46 L-2.91 8.98 Q-3.76 7.06 -5.82 7.44 L-10.64 8.3 A2.8 2.8 0 0 1 -13.09 3.27 L-9.44 0.01 Q-7.88 -1.39 -8.87 -3.24 L-11.18 -7.55 A2.8 2.8 0 0 1 -7.16 -11.44 L-2.93 -8.98 Q-1.11 -7.92 0.34 -9.44 L3.72 -12.97Z" fill="none" stroke-width="1.5"/><circle r="1.7" fill="none" stroke-width="1"/><circle cx="2.44" cy="-4.59" r="1.2" fill="none" stroke-width="0.9"/><circle cx="4.46" cy="-8.39" r="0.9" fill="none" stroke-width="0.9"/><circle cx="5.12" cy="0.9" r="1.2" fill="none" stroke-width="0.9"/><circle cx="9.36" cy="1.65" r="0.9" fill="none" stroke-width="0.9"/><circle cx="0.72" cy="5.15" r="1.2" fill="none" stroke-width="0.9"/><circle cx="1.32" cy="9.41" r="0.9" fill="none" stroke-width="0.9"/><circle cx="-4.67" cy="2.28" r="1.2" fill="none" stroke-width="0.9"/><circle cx="-8.54" cy="4.16" r="0.9" fill="none" stroke-width="0.9"/><circle cx="-3.61" cy="-3.74" r="1.2" fill="none" stroke-width="0.9"/><circle cx="-6.6" cy="-6.83" r="0.9" fill="none" stroke-width="0.9"/></g><g transform="translate(733 446) rotate(5) scale(0.85 0.85)"><path d="M3.72 -12.97 A2.8 2.8 0 0 1 8.67 -10.34 L7.63 -5.56 Q7.19 -3.51 9.08 -2.59 L13.49 -0.47 A2.8 2.8 0 0 1 12.51 5.05 L7.64 5.54 Q5.56 5.75 5.27 7.83 L4.61 12.68 A2.8 2.8 0 0 1 -0.94 13.46 L-2.91 8.98 Q-3.76 7.06 -5.82 7.44 L-10.64 8.3 A2.8 2.8 0 0 1 -13.09 3.27 L-9.44 0.01 Q-7.88 -1.39 -8.87 -3.24 L-11.18 -7.55 A2.8 2.8 0 0 1 -7.16 -11.44 L-2.93 -8.98 Q-1.11 -7.92 0.34 -9.44 L3.72 -12.97Z" fill="none" stroke-width="1.5"/><circle r="1.7" fill="none" stroke-width="1"/><circle cx="2.44" cy="-4.59" r="1.2" fill="none" stroke-width="0.9"/><circle cx="4.46" cy="-8.39" r="0.9" fill="none" stroke-width="0.9"/><circle cx="5.12" cy="0.9" r="1.2" fill="none" stroke-width="0.9"/><circle cx="9.36" cy="1.65" r="0.9" fill="none" stroke-width="0.9"/><circle cx="0.72" cy="5.15" r="1.2" fill="none" stroke-width="0.9"/><circle cx="1.32" cy="9.41" r="0.9" fill="none" stroke-width="0.9"/><circle cx="-4.67" cy="2.28" r="1.2" fill="none" stroke-width="0.9"/><circle cx="-8.54" cy="4.16" r="0.9" fill="none" stroke-width="0.9"/><circle cx="-3.61" cy="-3.74" r="1.2" fill="none" stroke-width="0.9"/><circle cx="-6.6" cy="-6.83" r="0.9" fill="none" stroke-width="0.9"/></g><g transform="translate(697 468) rotate(5) scale(0.91 0.91)"><path d="M3.72 -12.97 A2.8 2.8 0 0 1 8.67 -10.34 L7.63 -5.56 Q7.19 -3.51 9.08 -2.59 L13.49 -0.47 A2.8 2.8 0 0 1 12.51 5.05 L7.64 5.54 Q5.56 5.75 5.27 7.83 L4.61 12.68 A2.8 2.8 0 0 1 -0.94 13.46 L-2.91 8.98 Q-3.76 7.06 -5.82 7.44 L-10.64 8.3 A2.8 2.8 0 0 1 -13.09 3.27 L-9.44 0.01 Q-7.88 -1.39 -8.87 -3.24 L-11.18 -7.55 A2.8 2.8 0 0 1 -7.16 -11.44 L-2.93 -8.98 Q-1.11 -7.92 0.34 -9.44 L3.72 -12.97Z" fill="none" stroke-width="1.5"/><circle r="1.7" fill="none" stroke-width="1"/><circle cx="2.44" cy="-4.59" r="1.2" fill="none" stroke-width="0.9"/><circle cx="4.46" cy="-8.39" r="0.9" fill="none" stroke-width="0.9"/><circle cx="5.12" cy="0.9" r="1.2" fill="none" stroke-width="0.9"/><circle cx="9.36" cy="1.65" r="0.9" fill="none" stroke-width="0.9"/><circle cx="0.72" cy="5.15" r="1.2" fill="none" stroke-width="0.9"/><circle cx="1.32" cy="9.41" r="0.9" fill="none" stroke-width="0.9"/><circle cx="-4.67" cy="2.28" r="1.2" fill="none" stroke-width="0.9"/><circle cx="-8.54" cy="4.16" r="0.9" fill="none" stroke-width="0.9"/><circle cx="-3.61" cy="-3.74" r="1.2" fill="none" stroke-width="0.9"/><circle cx="-6.6" cy="-6.83" r="0.9" fill="none" stroke-width="0.9"/></g><g transform="translate(362 694) rotate(20) scale(0.85 0.85)"><path d="M3.72 -12.97 A2.8 2.8 0 0 1 8.67 -10.34 L7.63 -5.56 Q7.19 -3.51 9.08 -2.59 L13.49 -0.47 A2.8 2.8 0 0 1 12.51 5.05 L7.64 5.54 Q5.56 5.75 5.27 7.83 L4.61 12.68 A2.8 2.8 0 0 1 -0.94 13.46 L-2.91 8.98 Q-3.76 7.06 -5.82 7.44 L-10.64 8.3 A2.8 2.8 0 0 1 -13.09 3.27 L-9.44 0.01 Q-7.88 -1.39 -8.87 -3.24 L-11.18 -7.55 A2.8 2.8 0 0 1 -7.16 -11.44 L-2.93 -8.98 Q-1.11 -7.92 0.34 -9.44 L3.72 -12.97Z" fill="none" stroke-width="1.5"/><circle r="1.7" fill="none" stroke-width="1"/><circle cx="2.44" cy="-4.59" r="1.2" fill="none" stroke-width="0.9"/><circle cx="4.46" cy="-8.39" r="0.9" fill="none" stroke-width="0.9"/><circle cx="5.12" cy="0.9" r="1.2" fill="none" stroke-width="0.9"/><circle cx="9.36" cy="1.65" r="0.9" fill="none" stroke-width="0.9"/><circle cx="0.72" cy="5.15" r="1.2" fill="none" stroke-width="0.9"/><circle cx="1.32" cy="9.41" r="0.9" fill="none" stroke-width="0.9"/><circle cx="-4.67" cy="2.28" r="1.2" fill="none" stroke-width="0.9"/><circle cx="-8.54" cy="4.16" r="0.9" fill="none" stroke-width="0.9"/><circle cx="-3.61" cy="-3.74" r="1.2" fill="none" stroke-width="0.9"/><circle cx="-6.6" cy="-6.83" r="0.9" fill="none" stroke-width="0.9"/></g><g transform="translate(390 710) rotate(-10) scale(0.85 0.85)"><path d="M3.72 -12.97 A2.8 2.8 0 0 1 8.67 -10.34 L7.63 -5.56 Q7.19 -3.51 9.08 -2.59 L13.49 -0.47 A2.8 2.8 0 0 1 12.51 5.05 L7.64 5.54 Q5.56 5.75 5.27 7.83 L4.61 12.68 A2.8 2.8 0 0 1 -0.94 13.46 L-2.91 8.98 Q-3.76 7.06 -5.82 7.44 L-10.64 8.3 A2.8 2.8 0 0 1 -13.09 3.27 L-9.44 0.01 Q-7.88 -1.39 -8.87 -3.24 L-11.18 -7.55 A2.8 2.8 0 0 1 -7.16 -11.44 L-2.93 -8.98 Q-1.11 -7.92 0.34 -9.44 L3.72 -12.97Z" fill="none" stroke-width="1.5"/><circle r="1.7" fill="none" stroke-width="1"/><circle cx="2.44" cy="-4.59" r="1.2" fill="none" stroke-width="0.9"/><circle cx="4.46" cy="-8.39" r="0.9" fill="none" stroke-width="0.9"/><circle cx="5.12" cy="0.9" r="1.2" fill="none" stroke-width="0.9"/><circle cx="9.36" cy="1.65" r="0.9" fill="none" stroke-width="0.9"/><circle cx="0.72" cy="5.15" r="1.2" fill="none" stroke-width="0.9"/><circle cx="1.32" cy="9.41" r="0.9" fill="none" stroke-width="0.9"/><circle cx="-4.67" cy="2.28" r="1.2" fill="none" stroke-width="0.9"/><circle cx="-8.54" cy="4.16" r="0.9" fill="none" stroke-width="0.9"/><circle cx="-3.61" cy="-3.74" r="1.2" fill="none" stroke-width="0.9"/><circle cx="-6.6" cy="-6.83" r="0.9" fill="none" stroke-width="0.9"/></g><g transform="translate(516 740) rotate(8) scale(0.97 0.97)"><path d="M3.72 -12.97 A2.8 2.8 0 0 1 8.67 -10.34 L7.63 -5.56 Q7.19 -3.51 9.08 -2.59 L13.49 -0.47 A2.8 2.8 0 0 1 12.51 5.05 L7.64 5.54 Q5.56 5.75 5.27 7.83 L4.61 12.68 A2.8 2.8 0 0 1 -0.94 13.46 L-2.91 8.98 Q-3.76 7.06 -5.82 7.44 L-10.64 8.3 A2.8 2.8 0 0 1 -13.09 3.27 L-9.44 0.01 Q-7.88 -1.39 -8.87 -3.24 L-11.18 -7.55 A2.8 2.8 0 0 1 -7.16 -11.44 L-2.93 -8.98 Q-1.11 -7.92 0.34 -9.44 L3.72 -12.97Z" fill="none" stroke-width="1.5"/><circle r="1.7" fill="none" stroke-width="1"/><circle cx="2.44" cy="-4.59" r="1.2" fill="none" stroke-width="0.9"/><circle cx="4.46" cy="-8.39" r="0.9" fill="none" stroke-width="0.9"/><circle cx="5.12" cy="0.9" r="1.2" fill="none" stroke-width="0.9"/><circle cx="9.36" cy="1.65" r="0.9" fill="none" stroke-width="0.9"/><circle cx="0.72" cy="5.15" r="1.2" fill="none" stroke-width="0.9"/><circle cx="1.32" cy="9.41" r="0.9" fill="none" stroke-width="0.9"/><circle cx="-4.67" cy="2.28" r="1.2" fill="none" stroke-width="0.9"/><circle cx="-8.54" cy="4.16" r="0.9" fill="none" stroke-width="0.9"/><circle cx="-3.61" cy="-3.74" r="1.2" fill="none" stroke-width="0.9"/><circle cx="-6.6" cy="-6.83" r="0.9" fill="none" stroke-width="0.9"/></g><g transform="translate(554 708) rotate(-5) scale(0.97 0.97)"><path d="M3.72 -12.97 A2.8 2.8 0 0 1 8.67 -10.34 L7.63 -5.56 Q7.19 -3.51 9.08 -2.59 L13.49 -0.47 A2.8 2.8 0 0 1 12.51 5.05 L7.64 5.54 Q5.56 5.75 5.27 7.83 L4.61 12.68 A2.8 2.8 0 0 1 -0.94 13.46 L-2.91 8.98 Q-3.76 7.06 -5.82 7.44 L-10.64 8.3 A2.8 2.8 0 0 1 -13.09 3.27 L-9.44 0.01 Q-7.88 -1.39 -8.87 -3.24 L-11.18 -7.55 A2.8 2.8 0 0 1 -7.16 -11.44 L-2.93 -8.98 Q-1.11 -7.92 0.34 -9.44 L3.72 -12.97Z" fill="none" stroke-width="1.5"/><circle r="1.7" fill="none" stroke-width="1"/><circle cx="2.44" cy="-4.59" r="1.2" fill="none" stroke-width="0.9"/><circle cx="4.46" cy="-8.39" r="0.9" fill="none" stroke-width="0.9"/><circle cx="5.12" cy="0.9" r="1.2" fill="none" stroke-width="0.9"/><circle cx="9.36" cy="1.65" r="0.9" fill="none" stroke-width="0.9"/><circle cx="0.72" cy="5.15" r="1.2" fill="none" stroke-width="0.9"/><circle cx="1.32" cy="9.41" r="0.9" fill="none" stroke-width="0.9"/><circle cx="-4.67" cy="2.28" r="1.2" fill="none" stroke-width="0.9"/><circle cx="-8.54" cy="4.16" r="0.9" fill="none" stroke-width="0.9"/><circle cx="-3.61" cy="-3.74" r="1.2" fill="none" stroke-width="0.9"/><circle cx="-6.6" cy="-6.83" r="0.9" fill="none" stroke-width="0.9"/></g><g transform="translate(300 851) rotate(-15) scale(1.03 1.03)"><path d="M3.72 -12.97 A2.8 2.8 0 0 1 8.67 -10.34 L7.63 -5.56 Q7.19 -3.51 9.08 -2.59 L13.49 -0.47 A2.8 2.8 0 0 1 12.51 5.05 L7.64 5.54 Q5.56 5.75 5.27 7.83 L4.61 12.68 A2.8 2.8 0 0 1 -0.94 13.46 L-2.91 8.98 Q-3.76 7.06 -5.82 7.44 L-10.64 8.3 A2.8 2.8 0 0 1 -13.09 3.27 L-9.44 0.01 Q-7.88 -1.39 -8.87 -3.24 L-11.18 -7.55 A2.8 2.8 0 0 1 -7.16 -11.44 L-2.93 -8.98 Q-1.11 -7.92 0.34 -9.44 L3.72 -12.97Z" fill="none" stroke-width="1.5"/><circle r="1.7" fill="none" stroke-width="1"/><circle cx="2.44" cy="-4.59" r="1.2" fill="none" stroke-width="0.9"/><circle cx="4.46" cy="-8.39" r="0.9" fill="none" stroke-width="0.9"/><circle cx="5.12" cy="0.9" r="1.2" fill="none" stroke-width="0.9"/><circle cx="9.36" cy="1.65" r="0.9" fill="none" stroke-width="0.9"/><circle cx="0.72" cy="5.15" r="1.2" fill="none" stroke-width="0.9"/><circle cx="1.32" cy="9.41" r="0.9" fill="none" stroke-width="0.9"/><circle cx="-4.67" cy="2.28" r="1.2" fill="none" stroke-width="0.9"/><circle cx="-8.54" cy="4.16" r="0.9" fill="none" stroke-width="0.9"/><circle cx="-3.61" cy="-3.74" r="1.2" fill="none" stroke-width="0.9"/><circle cx="-6.6" cy="-6.83" r="0.9" fill="none" stroke-width="0.9"/></g><g transform="translate(799 560) rotate(10) scale(0.91 0.91)"><path d="M3.72 -12.97 A2.8 2.8 0 0 1 8.67 -10.34 L7.63 -5.56 Q7.19 -3.51 9.08 -2.59 L13.49 -0.47 A2.8 2.8 0 0 1 12.51 5.05 L7.64 5.54 Q5.56 5.75 5.27 7.83 L4.61 12.68 A2.8 2.8 0 0 1 -0.94 13.46 L-2.91 8.98 Q-3.76 7.06 -5.82 7.44 L-10.64 8.3 A2.8 2.8 0 0 1 -13.09 3.27 L-9.44 0.01 Q-7.88 -1.39 -8.87 -3.24 L-11.18 -7.55 A2.8 2.8 0 0 1 -7.16 -11.44 L-2.93 -8.98 Q-1.11 -7.92 0.34 -9.44 L3.72 -12.97Z" fill="none" stroke-width="1.5"/><circle r="1.7" fill="none" stroke-width="1"/><circle cx="2.44" cy="-4.59" r="1.2" fill="none" stroke-width="0.9"/><circle cx="4.46" cy="-8.39" r="0.9" fill="none" stroke-width="0.9"/><circle cx="5.12" cy="0.9" r="1.2" fill="none" stroke-width="0.9"/><circle cx="9.36" cy="1.65" r="0.9" fill="none" stroke-width="0.9"/><circle cx="0.72" cy="5.15" r="1.2" fill="none" stroke-width="0.9"/><circle cx="1.32" cy="9.41" r="0.9" fill="none" stroke-width="0.9"/><circle cx="-4.67" cy="2.28" r="1.2" fill="none" stroke-width="0.9"/><circle cx="-8.54" cy="4.16" r="0.9" fill="none" stroke-width="0.9"/><circle cx="-3.61" cy="-3.74" r="1.2" fill="none" stroke-width="0.9"/><circle cx="-6.6" cy="-6.83" r="0.9" fill="none" stroke-width="0.9"/></g><g transform="translate(678 639) rotate(-15) scale(0.85 0.85)"><path d="M3.72 -12.97 A2.8 2.8 0 0 1 8.67 -10.34 L7.63 -5.56 Q7.19 -3.51 9.08 -2.59 L13.49 -0.47 A2.8 2.8 0 0 1 12.51 5.05 L7.64 5.54 Q5.56 5.75 5.27 7.83 L4.61 12.68 A2.8 2.8 0 0 1 -0.94 13.46 L-2.91 8.98 Q-3.76 7.06 -5.82 7.44 L-10.64 8.3 A2.8 2.8 0 0 1 -13.09 3.27 L-9.44 0.01 Q-7.88 -1.39 -8.87 -3.24 L-11.18 -7.55 A2.8 2.8 0 0 1 -7.16 -11.44 L-2.93 -8.98 Q-1.11 -7.92 0.34 -9.44 L3.72 -12.97Z" fill="none" stroke-width="1.5"/><circle r="1.7" fill="none" stroke-width="1"/><circle cx="2.44" cy="-4.59" r="1.2" fill="none" stroke-width="0.9"/><circle cx="4.46" cy="-8.39" r="0.9" fill="none" stroke-width="0.9"/><circle cx="5.12" cy="0.9" r="1.2" fill="none" stroke-width="0.9"/><circle cx="9.36" cy="1.65" r="0.9" fill="none" stroke-width="0.9"/><circle cx="0.72" cy="5.15" r="1.2" fill="none" stroke-width="0.9"/><circle cx="1.32" cy="9.41" r="0.9" fill="none" stroke-width="0.9"/><circle cx="-4.67" cy="2.28" r="1.2" fill="none" stroke-width="0.9"/><circle cx="-8.54" cy="4.16" r="0.9" fill="none" stroke-width="0.9"/><circle cx="-3.61" cy="-3.74" r="1.2" fill="none" stroke-width="0.9"/><circle cx="-6.6" cy="-6.83" r="0.9" fill="none" stroke-width="0.9"/></g><g transform="translate(726 627) rotate(18) scale(0.91 0.91)"><path d="M3.72 -12.97 A2.8 2.8 0 0 1 8.67 -10.34 L7.63 -5.56 Q7.19 -3.51 9.08 -2.59 L13.49 -0.47 A2.8 2.8 0 0 1 12.51 5.05 L7.64 5.54 Q5.56 5.75 5.27 7.83 L4.61 12.68 A2.8 2.8 0 0 1 -0.94 13.46 L-2.91 8.98 Q-3.76 7.06 -5.82 7.44 L-10.64 8.3 A2.8 2.8 0 0 1 -13.09 3.27 L-9.44 0.01 Q-7.88 -1.39 -8.87 -3.24 L-11.18 -7.55 A2.8 2.8 0 0 1 -7.16 -11.44 L-2.93 -8.98 Q-1.11 -7.92 0.34 -9.44 L3.72 -12.97Z" fill="none" stroke-width="1.5"/><circle r="1.7" fill="none" stroke-width="1"/><circle cx="2.44" cy="-4.59" r="1.2" fill="none" stroke-width="0.9"/><circle cx="4.46" cy="-8.39" r="0.9" fill="none" stroke-width="0.9"/><circle cx="5.12" cy="0.9" r="1.2" fill="none" stroke-width="0.9"/><circle cx="9.36" cy="1.65" r="0.9" fill="none" stroke-width="0.9"/><circle cx="0.72" cy="5.15" r="1.2" fill="none" stroke-width="0.9"/><circle cx="1.32" cy="9.41" r="0.9" fill="none" stroke-width="0.9"/><circle cx="-4.67" cy="2.28" r="1.2" fill="none" stroke-width="0.9"/><circle cx="-8.54" cy="4.16" r="0.9" fill="none" stroke-width="0.9"/><circle cx="-3.61" cy="-3.74" r="1.2" fill="none" stroke-width="0.9"/><circle cx="-6.6" cy="-6.83" r="0.9" fill="none" stroke-width="0.9"/></g><g transform="translate(688 690) rotate(-8) scale(0.97 0.97)"><path d="M3.72 -12.97 A2.8 2.8 0 0 1 8.67 -10.34 L7.63 -5.56 Q7.19 -3.51 9.08 -2.59 L13.49 -0.47 A2.8 2.8 0 0 1 12.51 5.05 L7.64 5.54 Q5.56 5.75 5.27 7.83 L4.61 12.68 A2.8 2.8 0 0 1 -0.94 13.46 L-2.91 8.98 Q-3.76 7.06 -5.82 7.44 L-10.64 8.3 A2.8 2.8 0 0 1 -13.09 3.27 L-9.44 0.01 Q-7.88 -1.39 -8.87 -3.24 L-11.18 -7.55 A2.8 2.8 0 0 1 -7.16 -11.44 L-2.93 -8.98 Q-1.11 -7.92 0.34 -9.44 L3.72 -12.97Z" fill="none" stroke-width="1.5"/><circle r="1.7" fill="none" stroke-width="1"/><circle cx="2.44" cy="-4.59" r="1.2" fill="none" stroke-width="0.9"/><circle cx="4.46" cy="-8.39" r="0.9" fill="none" stroke-width="0.9"/><circle cx="5.12" cy="0.9" r="1.2" fill="none" stroke-width="0.9"/><circle cx="9.36" cy="1.65" r="0.9" fill="none" stroke-width="0.9"/><circle cx="0.72" cy="5.15" r="1.2" fill="none" stroke-width="0.9"/><circle cx="1.32" cy="9.41" r="0.9" fill="none" stroke-width="0.9"/><circle cx="-4.67" cy="2.28" r="1.2" fill="none" stroke-width="0.9"/><circle cx="-8.54" cy="4.16" r="0.9" fill="none" stroke-width="0.9"/><circle cx="-3.61" cy="-3.74" r="1.2" fill="none" stroke-width="0.9"/><circle cx="-6.6" cy="-6.83" r="0.9" fill="none" stroke-width="0.9"/></g><g transform="translate(812 843) rotate(12) scale(1.03 1.03)"><path d="M3.72 -12.97 A2.8 2.8 0 0 1 8.67 -10.34 L7.63 -5.56 Q7.19 -3.51 9.08 -2.59 L13.49 -0.47 A2.8 2.8 0 0 1 12.51 5.05 L7.64 5.54 Q5.56 5.75 5.27 7.83 L4.61 12.68 A2.8 2.8 0 0 1 -0.94 13.46 L-2.91 8.98 Q-3.76 7.06 -5.82 7.44 L-10.64 8.3 A2.8 2.8 0 0 1 -13.09 3.27 L-9.44 0.01 Q-7.88 -1.39 -8.87 -3.24 L-11.18 -7.55 A2.8 2.8 0 0 1 -7.16 -11.44 L-2.93 -8.98 Q-1.11 -7.92 0.34 -9.44 L3.72 -12.97Z" fill="none" stroke-width="1.5"/><circle r="1.7" fill="none" stroke-width="1"/><circle cx="2.44" cy="-4.59" r="1.2" fill="none" stroke-width="0.9"/><circle cx="4.46" cy="-8.39" r="0.9" fill="none" stroke-width="0.9"/><circle cx="5.12" cy="0.9" r="1.2" fill="none" stroke-width="0.9"/><circle cx="9.36" cy="1.65" r="0.9" fill="none" stroke-width="0.9"/><circle cx="0.72" cy="5.15" r="1.2" fill="none" stroke-width="0.9"/><circle cx="1.32" cy="9.41" r="0.9" fill="none" stroke-width="0.9"/><circle cx="-4.67" cy="2.28" r="1.2" fill="none" stroke-width="0.9"/><circle cx="-8.54" cy="4.16" r="0.9" fill="none" stroke-width="0.9"/><circle cx="-3.61" cy="-3.74" r="1.2" fill="none" stroke-width="0.9"/><circle cx="-6.6" cy="-6.83" r="0.9" fill="none" stroke-width="0.9"/></g><g transform="translate(300 273) rotate(-15) scale(1.03 1.03)"><path d="M3.72 -12.97 A2.8 2.8 0 0 1 8.67 -10.34 L7.63 -5.56 Q7.19 -3.51 9.08 -2.59 L13.49 -0.47 A2.8 2.8 0 0 1 12.51 5.05 L7.64 5.54 Q5.56 5.75 5.27 7.83 L4.61 12.68 A2.8 2.8 0 0 1 -0.94 13.46 L-2.91 8.98 Q-3.76 7.06 -5.82 7.44 L-10.64 8.3 A2.8 2.8 0 0 1 -13.09 3.27 L-9.44 0.01 Q-7.88 -1.39 -8.87 -3.24 L-11.18 -7.55 A2.8 2.8 0 0 1 -7.16 -11.44 L-2.93 -8.98 Q-1.11 -7.92 0.34 -9.44 L3.72 -12.97Z" fill="none" stroke-width="1.5"/><circle r="1.7" fill="none" stroke-width="1"/><circle cx="2.44" cy="-4.59" r="1.2" fill="none" stroke-width="0.9"/><circle cx="4.46" cy="-8.39" r="0.9" fill="none" stroke-width="0.9"/><circle cx="5.12" cy="0.9" r="1.2" fill="none" stroke-width="0.9"/><circle cx="9.36" cy="1.65" r="0.9" fill="none" stroke-width="0.9"/><circle cx="0.72" cy="5.15" r="1.2" fill="none" stroke-width="0.9"/><circle cx="1.32" cy="9.41" r="0.9" fill="none" stroke-width="0.9"/><circle cx="-4.67" cy="2.28" r="1.2" fill="none" stroke-width="0.9"/><circle cx="-8.54" cy="4.16" r="0.9" fill="none" stroke-width="0.9"/><circle cx="-3.61" cy="-3.74" r="1.2" fill="none" stroke-width="0.9"/><circle cx="-6.6" cy="-6.83" r="0.9" fill="none" stroke-width="0.9"/></g><g transform="translate(332.6 385.2)"><circle r="12.4" stroke="none" fill="var(--sun)"/><path d="M15.6 0 L21.2 0" stroke-width="2.3" stroke-linecap="round"/><path d="M11.03 11.03 L14.99 14.99" stroke-width="2.3" stroke-linecap="round"/><path d="M0 15.6 L0 21.2" stroke-width="2.3" stroke-linecap="round"/><path d="M-11.03 11.03 L-14.99 14.99" stroke-width="2.3" stroke-linecap="round"/><path d="M-15.6 0 L-21.2 0" stroke-width="2.3" stroke-linecap="round"/><path d="M-11.03 -11.03 L-14.99 -14.99" stroke-width="2.3" stroke-linecap="round"/><path d="M-0 -15.6 L-0 -21.2" stroke-width="2.3" stroke-linecap="round"/><path d="M11.03 -11.03 L14.99 -14.99" stroke-width="2.3" stroke-linecap="round"/></g><g transform="translate(585.6 440.8)"><circle r="12.4" stroke="none" fill="var(--sun)"/><path d="M15.6 0 L21.2 0" stroke-width="2.3" stroke-linecap="round"/><path d="M11.03 11.03 L14.99 14.99" stroke-width="2.3" stroke-linecap="round"/><path d="M0 15.6 L0 21.2" stroke-width="2.3" stroke-linecap="round"/><path d="M-11.03 11.03 L-14.99 14.99" stroke-width="2.3" stroke-linecap="round"/><path d="M-15.6 0 L-21.2 0" stroke-width="2.3" stroke-linecap="round"/><path d="M-11.03 -11.03 L-14.99 -14.99" stroke-width="2.3" stroke-linecap="round"/><path d="M-0 -15.6 L-0 -21.2" stroke-width="2.3" stroke-linecap="round"/><path d="M11.03 -11.03 L14.99 -14.99" stroke-width="2.3" stroke-linecap="round"/></g><g transform="translate(396.8 604) rotate(22)"><circle r="12.4" stroke="none" fill="var(--sun)"/><path d="M15.6 0 L21.2 0" stroke-width="2.3" stroke-linecap="round"/><path d="M11.03 11.03 L14.99 14.99" stroke-width="2.3" stroke-linecap="round"/><path d="M0 15.6 L0 21.2" stroke-width="2.3" stroke-linecap="round"/><path d="M-11.03 11.03 L-14.99 14.99" stroke-width="2.3" stroke-linecap="round"/><path d="M-15.6 0 L-21.2 0" stroke-width="2.3" stroke-linecap="round"/><path d="M-11.03 -11.03 L-14.99 -14.99" stroke-width="2.3" stroke-linecap="round"/><path d="M-0 -15.6 L-0 -21.2" stroke-width="2.3" stroke-linecap="round"/><path d="M11.03 -11.03 L14.99 -14.99" stroke-width="2.3" stroke-linecap="round"/></g><g transform="translate(358 770.8)"><circle r="12.4" stroke="none" fill="var(--sun)"/><path d="M15.6 0 L21.2 0" stroke-width="2.3" stroke-linecap="round"/><path d="M11.03 11.03 L14.99 14.99" stroke-width="2.3" stroke-linecap="round"/><path d="M0 15.6 L0 21.2" stroke-width="2.3" stroke-linecap="round"/><path d="M-11.03 11.03 L-14.99 14.99" stroke-width="2.3" stroke-linecap="round"/><path d="M-15.6 0 L-21.2 0" stroke-width="2.3" stroke-linecap="round"/><path d="M-11.03 -11.03 L-14.99 -14.99" stroke-width="2.3" stroke-linecap="round"/><path d="M-0 -15.6 L-0 -21.2" stroke-width="2.3" stroke-linecap="round"/><path d="M11.03 -11.03 L14.99 -14.99" stroke-width="2.3" stroke-linecap="round"/></g><g transform="translate(743.5 545.2) rotate(22)"><circle r="12.4" stroke="none" fill="var(--sun)"/><path d="M15.6 0 L21.2 0" stroke-width="2.3" stroke-linecap="round"/><path d="M11.03 11.03 L14.99 14.99" stroke-width="2.3" stroke-linecap="round"/><path d="M0 15.6 L0 21.2" stroke-width="2.3" stroke-linecap="round"/><path d="M-11.03 11.03 L-14.99 14.99" stroke-width="2.3" stroke-linecap="round"/><path d="M-15.6 0 L-21.2 0" stroke-width="2.3" stroke-linecap="round"/><path d="M-11.03 -11.03 L-14.99 -14.99" stroke-width="2.3" stroke-linecap="round"/><path d="M-0 -15.6 L-0 -21.2" stroke-width="2.3" stroke-linecap="round"/><path d="M11.03 -11.03 L14.99 -14.99" stroke-width="2.3" stroke-linecap="round"/></g><g transform="translate(595.7 768.4)"><circle r="12.4" stroke="none" fill="var(--sun)"/><path d="M15.6 0 L21.2 0" stroke-width="2.3" stroke-linecap="round"/><path d="M11.03 11.03 L14.99 14.99" stroke-width="2.3" stroke-linecap="round"/><path d="M0 15.6 L0 21.2" stroke-width="2.3" stroke-linecap="round"/><path d="M-11.03 11.03 L-14.99 14.99" stroke-width="2.3" stroke-linecap="round"/><path d="M-15.6 0 L-21.2 0" stroke-width="2.3" stroke-linecap="round"/><path d="M-11.03 -11.03 L-14.99 -14.99" stroke-width="2.3" stroke-linecap="round"/><path d="M-0 -15.6 L-0 -21.2" stroke-width="2.3" stroke-linecap="round"/><path d="M11.03 -11.03 L14.99 -14.99" stroke-width="2.3" stroke-linecap="round"/></g><g transform="translate(543.7 337.1) rotate(-16.7)"><path d="M0 -50 C-7 -45 -17.5 -24 -17.5 2 C-17.5 26 -12 45 -8 57 L0 50 L8 57 C12 45 17.5 26 17.5 2 C17.5 -24 7 -45 0 -50Z M0 -46 V0 M0 21 V50" fill="none" stroke="var(--board)" style="stroke-width:var(--bw)" stroke-linejoin="round"/></g><g transform="translate(543.7 915.1) rotate(-16.7)"><path d="M0 -50 C-7 -45 -17.5 -24 -17.5 2 C-17.5 26 -12 45 -8 57 L0 50 L8 57 C12 45 17.5 26 17.5 2 C17.5 -24 7 -45 0 -50Z M0 -46 V0 M0 21 V50" fill="none" stroke="var(--board)" style="stroke-width:var(--bw)" stroke-linejoin="round"/></g><g transform="translate(264 484.4) rotate(143) scale(1.03 1.03)"><path d="M0 -50 C-7 -45 -17.5 -24 -17.5 2 C-17.5 26 -12 45 -8 57 L0 50 L8 57 C12 45 17.5 26 17.5 2 C17.5 -24 7 -45 0 -50Z M0 -46 V0 M0 21 V50" fill="none" stroke="var(--board)" style="stroke-width:var(--bw)" stroke-linejoin="round"/></g><g transform="translate(842 484.4) rotate(143) scale(1.03 1.03)"><path d="M0 -50 C-7 -45 -17.5 -24 -17.5 2 C-17.5 26 -12 45 -8 57 L0 50 L8 57 C12 45 17.5 26 17.5 2 C17.5 -24 7 -45 0 -50Z M0 -46 V0 M0 21 V50" fill="none" stroke="var(--board)" style="stroke-width:var(--bw)" stroke-linejoin="round"/></g><g transform="translate(464 710.8) rotate(-143.7) scale(1.02 1.02)"><path d="M0 -50 C-7 -45 -17.5 -24 -17.5 2 C-17.5 26 -12 45 -8 57 L0 50 L8 57 C12 45 17.5 26 17.5 2 C17.5 -24 7 -45 0 -50Z M0 -46 V0 M0 21 V50" fill="none" stroke="var(--board)" style="stroke-width:var(--bw)" stroke-linejoin="round"/></g><g transform="translate(764.4 810.4) rotate(43.1) scale(1.03 1.03)"><path d="M0 -50 C-7 -45 -17.5 -24 -17.5 2 C-17.5 26 -12 45 -8 57 L0 50 L8 57 C12 45 17.5 26 17.5 2 C17.5 -24 7 -45 0 -50Z M0 -46 V0 M0 21 V50" fill="none" stroke="var(--board)" style="stroke-width:var(--bw)" stroke-linejoin="round"/></g><g transform="translate(323 460) rotate(47.2) scale(1.63 1.63)"><g><circle cx="-9" cy="0" r="5.8" stroke="none" fill="var(--sun)"/><circle cx="9" cy="0" r="5.8" stroke="none" fill="var(--sun)"/><path d="M-2 -3.5 A7.8 7.8 0 1 0 -2.2 3.6 Q0 1.5 2.2 -3.6 A7.8 7.8 0 1 1 2 3.5 Q0 -1.5 -2 -3.5Z M-16.5 -2.5 l-1.2 1.5 l1 2 M16.5 2.5 l1.2 -1.5 l-1 -2" fill="none" stroke-width="1.1"/></g></g><g transform="translate(648.8 536) rotate(-50) scale(1.63 1.63)"><g><circle cx="-9" cy="0" r="5.8" stroke="none" fill="var(--sun)"/><circle cx="9" cy="0" r="5.8" stroke="none" fill="var(--sun)"/><path d="M-2 -3.5 A7.8 7.8 0 1 0 -2.2 3.6 Q0 1.5 2.2 -3.6 A7.8 7.8 0 1 1 2 3.5 Q0 -1.5 -2 -3.5Z M-16.5 -2.5 l-1.2 1.5 l1 2 M16.5 2.5 l1.2 -1.5 l-1 -2" fill="none" stroke-width="1.1"/></g></g><g transform="translate(749.8 735.5) rotate(-29.5) scale(1.63 1.63)"><g><circle cx="-9" cy="0" r="5.8" stroke="none" fill="var(--sun)"/><circle cx="9" cy="0" r="5.8" stroke="none" fill="var(--sun)"/><path d="M-2 -3.5 A7.8 7.8 0 1 0 -2.2 3.6 Q0 1.5 2.2 -3.6 A7.8 7.8 0 1 1 2 3.5 Q0 -1.5 -2 -3.5Z M-16.5 -2.5 l-1.2 1.5 l1 2 M16.5 2.5 l1.2 -1.5 l-1 -2" fill="none" stroke-width="1.1"/></g></g><g transform="translate(503.3 811.7) rotate(46) scale(1.63 1.63)"><g><circle cx="-9" cy="0" r="5.8" stroke="none" fill="var(--sun)"/><circle cx="9" cy="0" r="5.8" stroke="none" fill="var(--sun)"/><path d="M-2 -3.5 A7.8 7.8 0 1 0 -2.2 3.6 Q0 1.5 2.2 -3.6 A7.8 7.8 0 1 1 2 3.5 Q0 -1.5 -2 -3.5Z M-16.5 -2.5 l-1.2 1.5 l1 2 M16.5 2.5 l1.2 -1.5 l-1 -2" fill="none" stroke-width="1.1"/></g></g><g transform="translate(440 343)"><g fill="none" stroke-width="2" stroke-linecap="round"><path d="M-28.3 -14.3 C-24 -8 -14 -5 -10 -10 C-8 -14 -10 -19 -12.3 -23.1 C-2 -24.5 10 -20 13.3 -3.7 C15 5 16 16 22.9 25.1 C26 27 29 24 29.3 20.3"/><path d="M-27.7 -5.3 C-23 -2 -19 -0.5 -15.5 -0.5 L-15 3.3 C-12 5 -10 4.5 -9 5.4 C-7 8 -5 11 -3.7 13.4" stroke-width="1.7"/><path d="M-30.4 -2.6 C-26 1 -22 3.5 -19.2 3.8 C-17 7 -15 9.5 -13.9 10.7" stroke-width="1.7"/></g></g><g transform="translate(766.5 379)"><g fill="none" stroke-width="2" stroke-linecap="round"><path d="M-28.3 -14.3 C-24 -8 -14 -5 -10 -10 C-8 -14 -10 -19 -12.3 -23.1 C-2 -24.5 10 -20 13.3 -3.7 C15 5 16 16 22.9 25.1 C26 27 29 24 29.3 20.3"/><path d="M-27.7 -5.3 C-23 -2 -19 -0.5 -15.5 -0.5 L-15 3.3 C-12 5 -10 4.5 -9 5.4 C-7 8 -5 11 -3.7 13.4" stroke-width="1.7"/><path d="M-30.4 -2.6 C-26 1 -22 3.5 -19.2 3.8 C-17 7 -15 9.5 -13.9 10.7" stroke-width="1.7"/></g></g><g transform="translate(379.4 518.8) rotate(8) scale(-1 1)"><g fill="none" stroke-width="2" stroke-linecap="round"><path d="M-28.3 -14.3 C-24 -8 -14 -5 -10 -10 C-8 -14 -10 -19 -12.3 -23.1 C-2 -24.5 10 -20 13.3 -3.7 C15 5 16 16 22.9 25.1 C26 27 29 24 29.3 20.3"/><path d="M-27.7 -5.3 C-23 -2 -19 -0.5 -15.5 -0.5 L-15 3.3 C-12 5 -10 4.5 -9 5.4 C-7 8 -5 11 -3.7 13.4" stroke-width="1.7"/><path d="M-30.4 -2.6 C-26 1 -22 3.5 -19.2 3.8 C-17 7 -15 9.5 -13.9 10.7" stroke-width="1.7"/></g></g><g transform="translate(285.2 784.3) matrix(0 1 1 0 0 0)"><g fill="none" stroke-width="2" stroke-linecap="round"><path d="M-28.3 -14.3 C-24 -8 -14 -5 -10 -10 C-8 -14 -10 -19 -12.3 -23.1 C-2 -24.5 10 -20 13.3 -3.7 C15 5 16 16 22.9 25.1 C26 27 29 24 29.3 20.3"/><path d="M-27.7 -5.3 C-23 -2 -19 -0.5 -15.5 -0.5 L-15 3.3 C-12 5 -10 4.5 -9 5.4 C-7 8 -5 11 -3.7 13.4" stroke-width="1.7"/><path d="M-30.4 -2.6 C-26 1 -22 3.5 -19.2 3.8 C-17 7 -15 9.5 -13.9 10.7" stroke-width="1.7"/></g></g><g transform="translate(610.4 646.6) rotate(-26.7) scale(-1 1)"><g fill="none" stroke-width="2" stroke-linecap="round"><path d="M-28.3 -14.3 C-24 -8 -14 -5 -10 -10 C-8 -14 -10 -19 -12.3 -23.1 C-2 -24.5 10 -20 13.3 -3.7 C15 5 16 16 22.9 25.1 C26 27 29 24 29.3 20.3"/><path d="M-27.7 -5.3 C-23 -2 -19 -0.5 -15.5 -0.5 L-15 3.3 C-12 5 -10 4.5 -9 5.4 C-7 8 -5 11 -3.7 13.4" stroke-width="1.7"/><path d="M-30.4 -2.6 C-26 1 -22 3.5 -19.2 3.8 C-17 7 -15 9.5 -13.9 10.7" stroke-width="1.7"/></g></g><g><g transform="translate(495.5 479) scale(-1 1)"><g fill="none" stroke-width="1.3" stroke-linejoin="round"><path d="M0 0 Q-1 -8 -3.5 -19 Q-6 -26 -11.2 -29.2 L-7.84 -28.28 -4.83 -27.21 -2.17 -25.98 0.13 -24.59 2.08 -23.05 1.23 -21.62 3.67 -21.35 4.91 -19.5 5.79 -17.49 6.32 -15.32 6.5 -13 4.87 -12.93 6.26 -11.43 5.92 -9.92 5.49 -8.47 4.98 -7.08 4.38 -5.75 2.83 -6.26 3.68 -4.48 2.9 -3.27 2.02 -2.12 1.05 -1.03 0 0Z"/><path d="M0 0 Q0 -9 -8 -16.5 Q-15 -19.5 -23.1 -15.9 L-21.67 -15.6 -20.22 -15.26 -18.76 -14.87 -17.28 -14.44 -15.78 -13.97 -15.98 -12.36 -14.26 -13.46 -12.72 -12.91 -11.16 -12.32 -9.59 -11.68 -8 -11 -8.95 -9.68 -7.02 -9.99 -6.08 -8.96 -5.18 -7.91 -4.32 -6.84 -3.5 -5.75 -4.65 -4.61 -2.72 -4.64 -1.98 -3.51 -1.28 -2.36 -0.62 -1.19 0 0Z"/><path d="M0 0 Q-6 -7.5 -15 -8 Q-22 -6.5 -26.3 -1.4 L-24.81 -1.61 -23.27 -1.8 -21.68 -1.96 -20.03 -2.1 -18.32 -2.23 -17.88 -0.65 -16.57 -2.32 -14.76 -2.4 -12.89 -2.46 -10.97 -2.49 -9 -2.5 -9.16 -0.89 -7.83 -2.21 -6.72 -1.92 -5.67 -1.64 -4.68 -1.38 -3.75 -1.12 -4.01 0.46 -2.88 -0.88 -2.07 -0.65 -1.32 -0.42 -0.63 -0.2 0 0Z"/><path d="M0 0 Q-12 -3 -20 2 Q-24 7 -23.1 14.4 L-22.43 12.96 -21.66 11.6 -20.8 10.31 -19.84 9.1 -18.77 7.97 -17.47 8.95 -17.62 6.92 -16.36 5.95 -15 5.06 -13.55 4.24 -12 3.5 -11.3 4.97 -10.44 3.1 -8.96 2.72 -7.56 2.34 -6.24 1.98 -5 1.62 -4.31 3.09 -3.84 1.28 -2.76 0.95 -1.76 0.62 -0.84 0.3 0 0Z"/><path d="M0 0 Q11 5 10.5 14 Q10.5 20 7.9 24.9 L7.14 23.68 6.42 22.38 5.73 20.99 5.08 19.52 4.47 17.98 5.87 17.12 3.9 16.34 3.37 14.63 2.88 12.84 2.42 10.96 2 9 3.48 8.35 1.71 8.01 1.44 7.04 1.19 6.09 0.96 5.16 0.75 4.25 2.28 3.74 0.56 3.36 0.39 2.49 0.24 1.64 0.11 0.81 0 0Z"/><path d="M0 0 Q14 0.5 20 9 Q21.5 17 17.7 22.7 L17.43 21.17 17.09 19.65 16.68 18.14 16.21 16.65 15.68 15.18 17.03 14.27 15.07 13.71 14.4 12.26 13.67 10.83 12.87 9.41 12 8 12.87 6.62 10.8 6.84 9.6 5.76 8.4 4.76 7.2 3.84 6 3 6.62 1.5 4.8 2.24 3.6 1.56 2.4 0.96 1.2 0.44 0 0Z"/><path d="M0 0 Q8 -7 18 -10 Q26 -8 32.1 -1.1 L30.46 -1.37 28.78 -1.62 27.07 -1.86 25.32 -2.08 23.52 -2.27 23.32 -3.9 21.7 -2.46 19.83 -2.62 17.92 -2.76 15.98 -2.89 14 -3 13.39 -4.51 12.42 -2.7 10.88 -2.4 9.38 -2.1 7.92 -1.8 6.5 -1.5 5.88 -3 5.12 -1.2 3.78 -0.9 2.48 -0.6 1.22 -0.3 0 0Z"/><path d="M-1 1 Q-25 24 -27.5 53.7 M1.5 2 Q-21 27 -24.5 55.9"/><path d="M-8.5 14 l2 1 M-14 24 l2 1 M-19 34 l2 0.8 M-23 44 l2 0.6" stroke-width="1"/></g></g><g transform="translate(550.2 507.7) rotate(-15)"><g fill="none" stroke-width="1.3" stroke-linejoin="round"><path d="M0 0 Q-1 -8 -3.5 -19 Q-6 -26 -11.2 -29.2 L-7.84 -28.28 -4.83 -27.21 -2.17 -25.98 0.13 -24.59 2.08 -23.05 1.23 -21.62 3.67 -21.35 4.91 -19.5 5.79 -17.49 6.32 -15.32 6.5 -13 4.87 -12.93 6.26 -11.43 5.92 -9.92 5.49 -8.47 4.98 -7.08 4.38 -5.75 2.83 -6.26 3.68 -4.48 2.9 -3.27 2.02 -2.12 1.05 -1.03 0 0Z"/><path d="M0 0 Q0 -9 -8 -16.5 Q-15 -19.5 -23.1 -15.9 L-21.67 -15.6 -20.22 -15.26 -18.76 -14.87 -17.28 -14.44 -15.78 -13.97 -15.98 -12.36 -14.26 -13.46 -12.72 -12.91 -11.16 -12.32 -9.59 -11.68 -8 -11 -8.95 -9.68 -7.02 -9.99 -6.08 -8.96 -5.18 -7.91 -4.32 -6.84 -3.5 -5.75 -4.65 -4.61 -2.72 -4.64 -1.98 -3.51 -1.28 -2.36 -0.62 -1.19 0 0Z"/><path d="M0 0 Q-6 -7.5 -15 -8 Q-22 -6.5 -26.3 -1.4 L-24.81 -1.61 -23.27 -1.8 -21.68 -1.96 -20.03 -2.1 -18.32 -2.23 -17.88 -0.65 -16.57 -2.32 -14.76 -2.4 -12.89 -2.46 -10.97 -2.49 -9 -2.5 -9.16 -0.89 -7.83 -2.21 -6.72 -1.92 -5.67 -1.64 -4.68 -1.38 -3.75 -1.12 -4.01 0.46 -2.88 -0.88 -2.07 -0.65 -1.32 -0.42 -0.63 -0.2 0 0Z"/><path d="M0 0 Q-12 -3 -20 2 Q-24 7 -23.1 14.4 L-22.43 12.96 -21.66 11.6 -20.8 10.31 -19.84 9.1 -18.77 7.97 -17.47 8.95 -17.62 6.92 -16.36 5.95 -15 5.06 -13.55 4.24 -12 3.5 -11.3 4.97 -10.44 3.1 -8.96 2.72 -7.56 2.34 -6.24 1.98 -5 1.62 -4.31 3.09 -3.84 1.28 -2.76 0.95 -1.76 0.62 -0.84 0.3 0 0Z"/><path d="M0 0 Q11 5 10.5 14 Q10.5 20 7.9 24.9 L7.14 23.68 6.42 22.38 5.73 20.99 5.08 19.52 4.47 17.98 5.87 17.12 3.9 16.34 3.37 14.63 2.88 12.84 2.42 10.96 2 9 3.48 8.35 1.71 8.01 1.44 7.04 1.19 6.09 0.96 5.16 0.75 4.25 2.28 3.74 0.56 3.36 0.39 2.49 0.24 1.64 0.11 0.81 0 0Z"/><path d="M0 0 Q14 0.5 20 9 Q21.5 17 17.7 22.7 L17.43 21.17 17.09 19.65 16.68 18.14 16.21 16.65 15.68 15.18 17.03 14.27 15.07 13.71 14.4 12.26 13.67 10.83 12.87 9.41 12 8 12.87 6.62 10.8 6.84 9.6 5.76 8.4 4.76 7.2 3.84 6 3 6.62 1.5 4.8 2.24 3.6 1.56 2.4 0.96 1.2 0.44 0 0Z"/><path d="M0 0 Q8 -7 18 -10 Q26 -8 32.1 -1.1 L30.46 -1.37 28.78 -1.62 27.07 -1.86 25.32 -2.08 23.52 -2.27 23.32 -3.9 21.7 -2.46 19.83 -2.62 17.92 -2.76 15.98 -2.89 14 -3 13.39 -4.51 12.42 -2.7 10.88 -2.4 9.38 -2.1 7.92 -1.8 6.5 -1.5 5.88 -3 5.12 -1.2 3.78 -0.9 2.48 -0.6 1.22 -0.3 0 0Z"/><path d="M-1 1 Q-25 24 -27.5 53.7 M1.5 2 Q-21 27 -24.5 55.9"/><path d="M-8.5 14 l2 1 M-14 24 l2 1 M-19 34 l2 0.8 M-23 44 l2 0.6" stroke-width="1"/></g></g><g transform="translate(520 580)"><g fill="none" stroke-width="2.5" stroke-linejoin="round" stroke-linecap="round"><path d="M-31.7 50.3 C-42 38 -53 26 -54 10 C-55 -5 -54 -12 -47 -16 L16 -44.5 Q19 -46.5 21.5 -43.5 C33 -35 49 -16 54.7 4.8 L59.2 11.1 L47.5 16.5 A11 11 0 0 0 27 25.5 L-1 37 A11 11 0 0 0 -20 47 Z" fill="var(--bg)"/><circle cx="39.4" cy="23.7" r="7.2"/><circle cx="-8.7" cy="44.9" r="7.2"/><path d="M-45 -9 Q-47.9 -7.8 -47.5 -4 L-46.5 14 Q-46 18 -42 16.5 L-20 4 Q-16 2 -18 -1 L-27 -15.5 Q-29 -18.5 -32 -16.5Z"/><path d="M-7 -24 Q-9.2 -23 -8.5 -20 L-1 -9 Q1 -6 4 -8 L28 -20 Q31.5 -22 29.5 -25 L22 -36 Q20 -39 17 -37.5Z"/><path d="M-20 -23 L-5.6 -0.6" stroke-width="1.5"/><path d="M-57.8 -23.5 Q-20 -33 14.5 -49.5 Q17.5 -49 15.5 -46 Q-20 -29 -57.8 -23.5Z" stroke-width="1.8"/><rect x="-4.5" y="-12.5" width="9" height="25" rx="3" transform="translate(54 -10) rotate(-33)" stroke-width="2.2" fill="var(--bg)"/><path d="M-1 33 Q0 28 3 27 Q2.5 30 5.5 30 Q6 25 9 24 Q8.5 27 11.5 27 Q12 22 15 21 Q14.5 24 17.5 24 Q18 19.5 21 18.5 Q20 21 24 22.5" stroke-width="1.8"/><path d="M47 15 L49 10 L52 12 L54 8" stroke-width="1.6"/></g></g></g><g transform="translate(653.8 907.1) scale(-1 1) translate(-520 -580)"><g><g transform="translate(495.5 479) scale(-1 1)"><g fill="none" stroke-width="1.3" stroke-linejoin="round"><path d="M0 0 Q-1 -8 -3.5 -19 Q-6 -26 -11.2 -29.2 L-7.84 -28.28 -4.83 -27.21 -2.17 -25.98 0.13 -24.59 2.08 -23.05 1.23 -21.62 3.67 -21.35 4.91 -19.5 5.79 -17.49 6.32 -15.32 6.5 -13 4.87 -12.93 6.26 -11.43 5.92 -9.92 5.49 -8.47 4.98 -7.08 4.38 -5.75 2.83 -6.26 3.68 -4.48 2.9 -3.27 2.02 -2.12 1.05 -1.03 0 0Z"/><path d="M0 0 Q0 -9 -8 -16.5 Q-15 -19.5 -23.1 -15.9 L-21.67 -15.6 -20.22 -15.26 -18.76 -14.87 -17.28 -14.44 -15.78 -13.97 -15.98 -12.36 -14.26 -13.46 -12.72 -12.91 -11.16 -12.32 -9.59 -11.68 -8 -11 -8.95 -9.68 -7.02 -9.99 -6.08 -8.96 -5.18 -7.91 -4.32 -6.84 -3.5 -5.75 -4.65 -4.61 -2.72 -4.64 -1.98 -3.51 -1.28 -2.36 -0.62 -1.19 0 0Z"/><path d="M0 0 Q-6 -7.5 -15 -8 Q-22 -6.5 -26.3 -1.4 L-24.81 -1.61 -23.27 -1.8 -21.68 -1.96 -20.03 -2.1 -18.32 -2.23 -17.88 -0.65 -16.57 -2.32 -14.76 -2.4 -12.89 -2.46 -10.97 -2.49 -9 -2.5 -9.16 -0.89 -7.83 -2.21 -6.72 -1.92 -5.67 -1.64 -4.68 -1.38 -3.75 -1.12 -4.01 0.46 -2.88 -0.88 -2.07 -0.65 -1.32 -0.42 -0.63 -0.2 0 0Z"/><path d="M0 0 Q-12 -3 -20 2 Q-24 7 -23.1 14.4 L-22.43 12.96 -21.66 11.6 -20.8 10.31 -19.84 9.1 -18.77 7.97 -17.47 8.95 -17.62 6.92 -16.36 5.95 -15 5.06 -13.55 4.24 -12 3.5 -11.3 4.97 -10.44 3.1 -8.96 2.72 -7.56 2.34 -6.24 1.98 -5 1.62 -4.31 3.09 -3.84 1.28 -2.76 0.95 -1.76 0.62 -0.84 0.3 0 0Z"/><path d="M0 0 Q11 5 10.5 14 Q10.5 20 7.9 24.9 L7.14 23.68 6.42 22.38 5.73 20.99 5.08 19.52 4.47 17.98 5.87 17.12 3.9 16.34 3.37 14.63 2.88 12.84 2.42 10.96 2 9 3.48 8.35 1.71 8.01 1.44 7.04 1.19 6.09 0.96 5.16 0.75 4.25 2.28 3.74 0.56 3.36 0.39 2.49 0.24 1.64 0.11 0.81 0 0Z"/><path d="M0 0 Q14 0.5 20 9 Q21.5 17 17.7 22.7 L17.43 21.17 17.09 19.65 16.68 18.14 16.21 16.65 15.68 15.18 17.03 14.27 15.07 13.71 14.4 12.26 13.67 10.83 12.87 9.41 12 8 12.87 6.62 10.8 6.84 9.6 5.76 8.4 4.76 7.2 3.84 6 3 6.62 1.5 4.8 2.24 3.6 1.56 2.4 0.96 1.2 0.44 0 0Z"/><path d="M0 0 Q8 -7 18 -10 Q26 -8 32.1 -1.1 L30.46 -1.37 28.78 -1.62 27.07 -1.86 25.32 -2.08 23.52 -2.27 23.32 -3.9 21.7 -2.46 19.83 -2.62 17.92 -2.76 15.98 -2.89 14 -3 13.39 -4.51 12.42 -2.7 10.88 -2.4 9.38 -2.1 7.92 -1.8 6.5 -1.5 5.88 -3 5.12 -1.2 3.78 -0.9 2.48 -0.6 1.22 -0.3 0 0Z"/><path d="M-1 1 Q-25 24 -27.5 53.7 M1.5 2 Q-21 27 -24.5 55.9"/><path d="M-8.5 14 l2 1 M-14 24 l2 1 M-19 34 l2 0.8 M-23 44 l2 0.6" stroke-width="1"/></g></g><g transform="translate(550.2 507.7) rotate(-15)"><g fill="none" stroke-width="1.3" stroke-linejoin="round"><path d="M0 0 Q-1 -8 -3.5 -19 Q-6 -26 -11.2 -29.2 L-7.84 -28.28 -4.83 -27.21 -2.17 -25.98 0.13 -24.59 2.08 -23.05 1.23 -21.62 3.67 -21.35 4.91 -19.5 5.79 -17.49 6.32 -15.32 6.5 -13 4.87 -12.93 6.26 -11.43 5.92 -9.92 5.49 -8.47 4.98 -7.08 4.38 -5.75 2.83 -6.26 3.68 -4.48 2.9 -3.27 2.02 -2.12 1.05 -1.03 0 0Z"/><path d="M0 0 Q0 -9 -8 -16.5 Q-15 -19.5 -23.1 -15.9 L-21.67 -15.6 -20.22 -15.26 -18.76 -14.87 -17.28 -14.44 -15.78 -13.97 -15.98 -12.36 -14.26 -13.46 -12.72 -12.91 -11.16 -12.32 -9.59 -11.68 -8 -11 -8.95 -9.68 -7.02 -9.99 -6.08 -8.96 -5.18 -7.91 -4.32 -6.84 -3.5 -5.75 -4.65 -4.61 -2.72 -4.64 -1.98 -3.51 -1.28 -2.36 -0.62 -1.19 0 0Z"/><path d="M0 0 Q-6 -7.5 -15 -8 Q-22 -6.5 -26.3 -1.4 L-24.81 -1.61 -23.27 -1.8 -21.68 -1.96 -20.03 -2.1 -18.32 -2.23 -17.88 -0.65 -16.57 -2.32 -14.76 -2.4 -12.89 -2.46 -10.97 -2.49 -9 -2.5 -9.16 -0.89 -7.83 -2.21 -6.72 -1.92 -5.67 -1.64 -4.68 -1.38 -3.75 -1.12 -4.01 0.46 -2.88 -0.88 -2.07 -0.65 -1.32 -0.42 -0.63 -0.2 0 0Z"/><path d="M0 0 Q-12 -3 -20 2 Q-24 7 -23.1 14.4 L-22.43 12.96 -21.66 11.6 -20.8 10.31 -19.84 9.1 -18.77 7.97 -17.47 8.95 -17.62 6.92 -16.36 5.95 -15 5.06 -13.55 4.24 -12 3.5 -11.3 4.97 -10.44 3.1 -8.96 2.72 -7.56 2.34 -6.24 1.98 -5 1.62 -4.31 3.09 -3.84 1.28 -2.76 0.95 -1.76 0.62 -0.84 0.3 0 0Z"/><path d="M0 0 Q11 5 10.5 14 Q10.5 20 7.9 24.9 L7.14 23.68 6.42 22.38 5.73 20.99 5.08 19.52 4.47 17.98 5.87 17.12 3.9 16.34 3.37 14.63 2.88 12.84 2.42 10.96 2 9 3.48 8.35 1.71 8.01 1.44 7.04 1.19 6.09 0.96 5.16 0.75 4.25 2.28 3.74 0.56 3.36 0.39 2.49 0.24 1.64 0.11 0.81 0 0Z"/><path d="M0 0 Q14 0.5 20 9 Q21.5 17 17.7 22.7 L17.43 21.17 17.09 19.65 16.68 18.14 16.21 16.65 15.68 15.18 17.03 14.27 15.07 13.71 14.4 12.26 13.67 10.83 12.87 9.41 12 8 12.87 6.62 10.8 6.84 9.6 5.76 8.4 4.76 7.2 3.84 6 3 6.62 1.5 4.8 2.24 3.6 1.56 2.4 0.96 1.2 0.44 0 0Z"/><path d="M0 0 Q8 -7 18 -10 Q26 -8 32.1 -1.1 L30.46 -1.37 28.78 -1.62 27.07 -1.86 25.32 -2.08 23.52 -2.27 23.32 -3.9 21.7 -2.46 19.83 -2.62 17.92 -2.76 15.98 -2.89 14 -3 13.39 -4.51 12.42 -2.7 10.88 -2.4 9.38 -2.1 7.92 -1.8 6.5 -1.5 5.88 -3 5.12 -1.2 3.78 -0.9 2.48 -0.6 1.22 -0.3 0 0Z"/><path d="M-1 1 Q-25 24 -27.5 53.7 M1.5 2 Q-21 27 -24.5 55.9"/><path d="M-8.5 14 l2 1 M-14 24 l2 1 M-19 34 l2 0.8 M-23 44 l2 0.6" stroke-width="1"/></g></g><g transform="translate(520 580)"><g fill="none" stroke-width="2.5" stroke-linejoin="round" stroke-linecap="round"><path d="M-31.7 50.3 C-42 38 -53 26 -54 10 C-55 -5 -54 -12 -47 -16 L16 -44.5 Q19 -46.5 21.5 -43.5 C33 -35 49 -16 54.7 4.8 L59.2 11.1 L47.5 16.5 A11 11 0 0 0 27 25.5 L-1 37 A11 11 0 0 0 -20 47 Z" fill="var(--bg)"/><circle cx="39.4" cy="23.7" r="7.2"/><circle cx="-8.7" cy="44.9" r="7.2"/><path d="M-45 -9 Q-47.9 -7.8 -47.5 -4 L-46.5 14 Q-46 18 -42 16.5 L-20 4 Q-16 2 -18 -1 L-27 -15.5 Q-29 -18.5 -32 -16.5Z"/><path d="M-7 -24 Q-9.2 -23 -8.5 -20 L-1 -9 Q1 -6 4 -8 L28 -20 Q31.5 -22 29.5 -25 L22 -36 Q20 -39 17 -37.5Z"/><path d="M-20 -23 L-5.6 -0.6" stroke-width="1.5"/><path d="M-57.8 -23.5 Q-20 -33 14.5 -49.5 Q17.5 -49 15.5 -46 Q-20 -29 -57.8 -23.5Z" stroke-width="1.8"/><rect x="-4.5" y="-12.5" width="9" height="25" rx="3" transform="translate(54 -10) rotate(-33)" stroke-width="2.2" fill="var(--bg)"/><path d="M-1 33 Q0 28 3 27 Q2.5 30 5.5 30 Q6 25 9 24 Q8.5 27 11.5 27 Q12 22 15 21 Q14.5 24 17.5 24 Q18 19.5 21 18.5 Q20 21 24 22.5" stroke-width="1.8"/><path d="M47 15 L49 10 L52 12 L54 8" stroke-width="1.6"/></g></g></g></g><g transform="translate(653.8 329.1) scale(-1 1) translate(-520 -580)"><g><g transform="translate(495.5 479) scale(-1 1)"><g fill="none" stroke-width="1.3" stroke-linejoin="round"><path d="M0 0 Q-1 -8 -3.5 -19 Q-6 -26 -11.2 -29.2 L-7.84 -28.28 -4.83 -27.21 -2.17 -25.98 0.13 -24.59 2.08 -23.05 1.23 -21.62 3.67 -21.35 4.91 -19.5 5.79 -17.49 6.32 -15.32 6.5 -13 4.87 -12.93 6.26 -11.43 5.92 -9.92 5.49 -8.47 4.98 -7.08 4.38 -5.75 2.83 -6.26 3.68 -4.48 2.9 -3.27 2.02 -2.12 1.05 -1.03 0 0Z"/><path d="M0 0 Q0 -9 -8 -16.5 Q-15 -19.5 -23.1 -15.9 L-21.67 -15.6 -20.22 -15.26 -18.76 -14.87 -17.28 -14.44 -15.78 -13.97 -15.98 -12.36 -14.26 -13.46 -12.72 -12.91 -11.16 -12.32 -9.59 -11.68 -8 -11 -8.95 -9.68 -7.02 -9.99 -6.08 -8.96 -5.18 -7.91 -4.32 -6.84 -3.5 -5.75 -4.65 -4.61 -2.72 -4.64 -1.98 -3.51 -1.28 -2.36 -0.62 -1.19 0 0Z"/><path d="M0 0 Q-6 -7.5 -15 -8 Q-22 -6.5 -26.3 -1.4 L-24.81 -1.61 -23.27 -1.8 -21.68 -1.96 -20.03 -2.1 -18.32 -2.23 -17.88 -0.65 -16.57 -2.32 -14.76 -2.4 -12.89 -2.46 -10.97 -2.49 -9 -2.5 -9.16 -0.89 -7.83 -2.21 -6.72 -1.92 -5.67 -1.64 -4.68 -1.38 -3.75 -1.12 -4.01 0.46 -2.88 -0.88 -2.07 -0.65 -1.32 -0.42 -0.63 -0.2 0 0Z"/><path d="M0 0 Q-12 -3 -20 2 Q-24 7 -23.1 14.4 L-22.43 12.96 -21.66 11.6 -20.8 10.31 -19.84 9.1 -18.77 7.97 -17.47 8.95 -17.62 6.92 -16.36 5.95 -15 5.06 -13.55 4.24 -12 3.5 -11.3 4.97 -10.44 3.1 -8.96 2.72 -7.56 2.34 -6.24 1.98 -5 1.62 -4.31 3.09 -3.84 1.28 -2.76 0.95 -1.76 0.62 -0.84 0.3 0 0Z"/><path d="M0 0 Q11 5 10.5 14 Q10.5 20 7.9 24.9 L7.14 23.68 6.42 22.38 5.73 20.99 5.08 19.52 4.47 17.98 5.87 17.12 3.9 16.34 3.37 14.63 2.88 12.84 2.42 10.96 2 9 3.48 8.35 1.71 8.01 1.44 7.04 1.19 6.09 0.96 5.16 0.75 4.25 2.28 3.74 0.56 3.36 0.39 2.49 0.24 1.64 0.11 0.81 0 0Z"/><path d="M0 0 Q14 0.5 20 9 Q21.5 17 17.7 22.7 L17.43 21.17 17.09 19.65 16.68 18.14 16.21 16.65 15.68 15.18 17.03 14.27 15.07 13.71 14.4 12.26 13.67 10.83 12.87 9.41 12 8 12.87 6.62 10.8 6.84 9.6 5.76 8.4 4.76 7.2 3.84 6 3 6.62 1.5 4.8 2.24 3.6 1.56 2.4 0.96 1.2 0.44 0 0Z"/><path d="M0 0 Q8 -7 18 -10 Q26 -8 32.1 -1.1 L30.46 -1.37 28.78 -1.62 27.07 -1.86 25.32 -2.08 23.52 -2.27 23.32 -3.9 21.7 -2.46 19.83 -2.62 17.92 -2.76 15.98 -2.89 14 -3 13.39 -4.51 12.42 -2.7 10.88 -2.4 9.38 -2.1 7.92 -1.8 6.5 -1.5 5.88 -3 5.12 -1.2 3.78 -0.9 2.48 -0.6 1.22 -0.3 0 0Z"/><path d="M-1 1 Q-25 24 -27.5 53.7 M1.5 2 Q-21 27 -24.5 55.9"/><path d="M-8.5 14 l2 1 M-14 24 l2 1 M-19 34 l2 0.8 M-23 44 l2 0.6" stroke-width="1"/></g></g><g transform="translate(550.2 507.7) rotate(-15)"><g fill="none" stroke-width="1.3" stroke-linejoin="round"><path d="M0 0 Q-1 -8 -3.5 -19 Q-6 -26 -11.2 -29.2 L-7.84 -28.28 -4.83 -27.21 -2.17 -25.98 0.13 -24.59 2.08 -23.05 1.23 -21.62 3.67 -21.35 4.91 -19.5 5.79 -17.49 6.32 -15.32 6.5 -13 4.87 -12.93 6.26 -11.43 5.92 -9.92 5.49 -8.47 4.98 -7.08 4.38 -5.75 2.83 -6.26 3.68 -4.48 2.9 -3.27 2.02 -2.12 1.05 -1.03 0 0Z"/><path d="M0 0 Q0 -9 -8 -16.5 Q-15 -19.5 -23.1 -15.9 L-21.67 -15.6 -20.22 -15.26 -18.76 -14.87 -17.28 -14.44 -15.78 -13.97 -15.98 -12.36 -14.26 -13.46 -12.72 -12.91 -11.16 -12.32 -9.59 -11.68 -8 -11 -8.95 -9.68 -7.02 -9.99 -6.08 -8.96 -5.18 -7.91 -4.32 -6.84 -3.5 -5.75 -4.65 -4.61 -2.72 -4.64 -1.98 -3.51 -1.28 -2.36 -0.62 -1.19 0 0Z"/><path d="M0 0 Q-6 -7.5 -15 -8 Q-22 -6.5 -26.3 -1.4 L-24.81 -1.61 -23.27 -1.8 -21.68 -1.96 -20.03 -2.1 -18.32 -2.23 -17.88 -0.65 -16.57 -2.32 -14.76 -2.4 -12.89 -2.46 -10.97 -2.49 -9 -2.5 -9.16 -0.89 -7.83 -2.21 -6.72 -1.92 -5.67 -1.64 -4.68 -1.38 -3.75 -1.12 -4.01 0.46 -2.88 -0.88 -2.07 -0.65 -1.32 -0.42 -0.63 -0.2 0 0Z"/><path d="M0 0 Q-12 -3 -20 2 Q-24 7 -23.1 14.4 L-22.43 12.96 -21.66 11.6 -20.8 10.31 -19.84 9.1 -18.77 7.97 -17.47 8.95 -17.62 6.92 -16.36 5.95 -15 5.06 -13.55 4.24 -12 3.5 -11.3 4.97 -10.44 3.1 -8.96 2.72 -7.56 2.34 -6.24 1.98 -5 1.62 -4.31 3.09 -3.84 1.28 -2.76 0.95 -1.76 0.62 -0.84 0.3 0 0Z"/><path d="M0 0 Q11 5 10.5 14 Q10.5 20 7.9 24.9 L7.14 23.68 6.42 22.38 5.73 20.99 5.08 19.52 4.47 17.98 5.87 17.12 3.9 16.34 3.37 14.63 2.88 12.84 2.42 10.96 2 9 3.48 8.35 1.71 8.01 1.44 7.04 1.19 6.09 0.96 5.16 0.75 4.25 2.28 3.74 0.56 3.36 0.39 2.49 0.24 1.64 0.11 0.81 0 0Z"/><path d="M0 0 Q14 0.5 20 9 Q21.5 17 17.7 22.7 L17.43 21.17 17.09 19.65 16.68 18.14 16.21 16.65 15.68 15.18 17.03 14.27 15.07 13.71 14.4 12.26 13.67 10.83 12.87 9.41 12 8 12.87 6.62 10.8 6.84 9.6 5.76 8.4 4.76 7.2 3.84 6 3 6.62 1.5 4.8 2.24 3.6 1.56 2.4 0.96 1.2 0.44 0 0Z"/><path d="M0 0 Q8 -7 18 -10 Q26 -8 32.1 -1.1 L30.46 -1.37 28.78 -1.62 27.07 -1.86 25.32 -2.08 23.52 -2.27 23.32 -3.9 21.7 -2.46 19.83 -2.62 17.92 -2.76 15.98 -2.89 14 -3 13.39 -4.51 12.42 -2.7 10.88 -2.4 9.38 -2.1 7.92 -1.8 6.5 -1.5 5.88 -3 5.12 -1.2 3.78 -0.9 2.48 -0.6 1.22 -0.3 0 0Z"/><path d="M-1 1 Q-25 24 -27.5 53.7 M1.5 2 Q-21 27 -24.5 55.9"/><path d="M-8.5 14 l2 1 M-14 24 l2 1 M-19 34 l2 0.8 M-23 44 l2 0.6" stroke-width="1"/></g></g><g transform="translate(520 580)"><g fill="none" stroke-width="2.5" stroke-linejoin="round" stroke-linecap="round"><path d="M-31.7 50.3 C-42 38 -53 26 -54 10 C-55 -5 -54 -12 -47 -16 L16 -44.5 Q19 -46.5 21.5 -43.5 C33 -35 49 -16 54.7 4.8 L59.2 11.1 L47.5 16.5 A11 11 0 0 0 27 25.5 L-1 37 A11 11 0 0 0 -20 47 Z" fill="var(--bg)"/><circle cx="39.4" cy="23.7" r="7.2"/><circle cx="-8.7" cy="44.9" r="7.2"/><path d="M-45 -9 Q-47.9 -7.8 -47.5 -4 L-46.5 14 Q-46 18 -42 16.5 L-20 4 Q-16 2 -18 -1 L-27 -15.5 Q-29 -18.5 -32 -16.5Z"/><path d="M-7 -24 Q-9.2 -23 -8.5 -20 L-1 -9 Q1 -6 4 -8 L28 -20 Q31.5 -22 29.5 -25 L22 -36 Q20 -39 17 -37.5Z"/><path d="M-20 -23 L-5.6 -0.6" stroke-width="1.5"/><path d="M-57.8 -23.5 Q-20 -33 14.5 -49.5 Q17.5 -49 15.5 -46 Q-20 -29 -57.8 -23.5Z" stroke-width="1.8"/><rect x="-4.5" y="-12.5" width="9" height="25" rx="3" transform="translate(54 -10) rotate(-33)" stroke-width="2.2" fill="var(--bg)"/><path d="M-1 33 Q0 28 3 27 Q2.5 30 5.5 30 Q6 25 9 24 Q8.5 27 11.5 27 Q12 22 15 21 Q14.5 24 17.5 24 Q18 19.5 21 18.5 Q20 21 24 22.5" stroke-width="1.8"/><path d="M47 15 L49 10 L52 12 L54 8" stroke-width="1.6"/></g></g></g></g><g transform="translate(260.8 660.1) rotate(45) translate(-520 -580)"><g><g transform="translate(495.5 479) scale(-1 1)"><g fill="none" stroke-width="1.3" stroke-linejoin="round"><path d="M0 0 Q-1 -8 -3.5 -19 Q-6 -26 -11.2 -29.2 L-7.84 -28.28 -4.83 -27.21 -2.17 -25.98 0.13 -24.59 2.08 -23.05 1.23 -21.62 3.67 -21.35 4.91 -19.5 5.79 -17.49 6.32 -15.32 6.5 -13 4.87 -12.93 6.26 -11.43 5.92 -9.92 5.49 -8.47 4.98 -7.08 4.38 -5.75 2.83 -6.26 3.68 -4.48 2.9 -3.27 2.02 -2.12 1.05 -1.03 0 0Z"/><path d="M0 0 Q0 -9 -8 -16.5 Q-15 -19.5 -23.1 -15.9 L-21.67 -15.6 -20.22 -15.26 -18.76 -14.87 -17.28 -14.44 -15.78 -13.97 -15.98 -12.36 -14.26 -13.46 -12.72 -12.91 -11.16 -12.32 -9.59 -11.68 -8 -11 -8.95 -9.68 -7.02 -9.99 -6.08 -8.96 -5.18 -7.91 -4.32 -6.84 -3.5 -5.75 -4.65 -4.61 -2.72 -4.64 -1.98 -3.51 -1.28 -2.36 -0.62 -1.19 0 0Z"/><path d="M0 0 Q-6 -7.5 -15 -8 Q-22 -6.5 -26.3 -1.4 L-24.81 -1.61 -23.27 -1.8 -21.68 -1.96 -20.03 -2.1 -18.32 -2.23 -17.88 -0.65 -16.57 -2.32 -14.76 -2.4 -12.89 -2.46 -10.97 -2.49 -9 -2.5 -9.16 -0.89 -7.83 -2.21 -6.72 -1.92 -5.67 -1.64 -4.68 -1.38 -3.75 -1.12 -4.01 0.46 -2.88 -0.88 -2.07 -0.65 -1.32 -0.42 -0.63 -0.2 0 0Z"/><path d="M0 0 Q-12 -3 -20 2 Q-24 7 -23.1 14.4 L-22.43 12.96 -21.66 11.6 -20.8 10.31 -19.84 9.1 -18.77 7.97 -17.47 8.95 -17.62 6.92 -16.36 5.95 -15 5.06 -13.55 4.24 -12 3.5 -11.3 4.97 -10.44 3.1 -8.96 2.72 -7.56 2.34 -6.24 1.98 -5 1.62 -4.31 3.09 -3.84 1.28 -2.76 0.95 -1.76 0.62 -0.84 0.3 0 0Z"/><path d="M0 0 Q11 5 10.5 14 Q10.5 20 7.9 24.9 L7.14 23.68 6.42 22.38 5.73 20.99 5.08 19.52 4.47 17.98 5.87 17.12 3.9 16.34 3.37 14.63 2.88 12.84 2.42 10.96 2 9 3.48 8.35 1.71 8.01 1.44 7.04 1.19 6.09 0.96 5.16 0.75 4.25 2.28 3.74 0.56 3.36 0.39 2.49 0.24 1.64 0.11 0.81 0 0Z"/><path d="M0 0 Q14 0.5 20 9 Q21.5 17 17.7 22.7 L17.43 21.17 17.09 19.65 16.68 18.14 16.21 16.65 15.68 15.18 17.03 14.27 15.07 13.71 14.4 12.26 13.67 10.83 12.87 9.41 12 8 12.87 6.62 10.8 6.84 9.6 5.76 8.4 4.76 7.2 3.84 6 3 6.62 1.5 4.8 2.24 3.6 1.56 2.4 0.96 1.2 0.44 0 0Z"/><path d="M0 0 Q8 -7 18 -10 Q26 -8 32.1 -1.1 L30.46 -1.37 28.78 -1.62 27.07 -1.86 25.32 -2.08 23.52 -2.27 23.32 -3.9 21.7 -2.46 19.83 -2.62 17.92 -2.76 15.98 -2.89 14 -3 13.39 -4.51 12.42 -2.7 10.88 -2.4 9.38 -2.1 7.92 -1.8 6.5 -1.5 5.88 -3 5.12 -1.2 3.78 -0.9 2.48 -0.6 1.22 -0.3 0 0Z"/><path d="M-1 1 Q-25 24 -27.5 53.7 M1.5 2 Q-21 27 -24.5 55.9"/><path d="M-8.5 14 l2 1 M-14 24 l2 1 M-19 34 l2 0.8 M-23 44 l2 0.6" stroke-width="1"/></g></g><g transform="translate(550.2 507.7) rotate(-15)"><g fill="none" stroke-width="1.3" stroke-linejoin="round"><path d="M0 0 Q-1 -8 -3.5 -19 Q-6 -26 -11.2 -29.2 L-7.84 -28.28 -4.83 -27.21 -2.17 -25.98 0.13 -24.59 2.08 -23.05 1.23 -21.62 3.67 -21.35 4.91 -19.5 5.79 -17.49 6.32 -15.32 6.5 -13 4.87 -12.93 6.26 -11.43 5.92 -9.92 5.49 -8.47 4.98 -7.08 4.38 -5.75 2.83 -6.26 3.68 -4.48 2.9 -3.27 2.02 -2.12 1.05 -1.03 0 0Z"/><path d="M0 0 Q0 -9 -8 -16.5 Q-15 -19.5 -23.1 -15.9 L-21.67 -15.6 -20.22 -15.26 -18.76 -14.87 -17.28 -14.44 -15.78 -13.97 -15.98 -12.36 -14.26 -13.46 -12.72 -12.91 -11.16 -12.32 -9.59 -11.68 -8 -11 -8.95 -9.68 -7.02 -9.99 -6.08 -8.96 -5.18 -7.91 -4.32 -6.84 -3.5 -5.75 -4.65 -4.61 -2.72 -4.64 -1.98 -3.51 -1.28 -2.36 -0.62 -1.19 0 0Z"/><path d="M0 0 Q-6 -7.5 -15 -8 Q-22 -6.5 -26.3 -1.4 L-24.81 -1.61 -23.27 -1.8 -21.68 -1.96 -20.03 -2.1 -18.32 -2.23 -17.88 -0.65 -16.57 -2.32 -14.76 -2.4 -12.89 -2.46 -10.97 -2.49 -9 -2.5 -9.16 -0.89 -7.83 -2.21 -6.72 -1.92 -5.67 -1.64 -4.68 -1.38 -3.75 -1.12 -4.01 0.46 -2.88 -0.88 -2.07 -0.65 -1.32 -0.42 -0.63 -0.2 0 0Z"/><path d="M0 0 Q-12 -3 -20 2 Q-24 7 -23.1 14.4 L-22.43 12.96 -21.66 11.6 -20.8 10.31 -19.84 9.1 -18.77 7.97 -17.47 8.95 -17.62 6.92 -16.36 5.95 -15 5.06 -13.55 4.24 -12 3.5 -11.3 4.97 -10.44 3.1 -8.96 2.72 -7.56 2.34 -6.24 1.98 -5 1.62 -4.31 3.09 -3.84 1.28 -2.76 0.95 -1.76 0.62 -0.84 0.3 0 0Z"/><path d="M0 0 Q11 5 10.5 14 Q10.5 20 7.9 24.9 L7.14 23.68 6.42 22.38 5.73 20.99 5.08 19.52 4.47 17.98 5.87 17.12 3.9 16.34 3.37 14.63 2.88 12.84 2.42 10.96 2 9 3.48 8.35 1.71 8.01 1.44 7.04 1.19 6.09 0.96 5.16 0.75 4.25 2.28 3.74 0.56 3.36 0.39 2.49 0.24 1.64 0.11 0.81 0 0Z"/><path d="M0 0 Q14 0.5 20 9 Q21.5 17 17.7 22.7 L17.43 21.17 17.09 19.65 16.68 18.14 16.21 16.65 15.68 15.18 17.03 14.27 15.07 13.71 14.4 12.26 13.67 10.83 12.87 9.41 12 8 12.87 6.62 10.8 6.84 9.6 5.76 8.4 4.76 7.2 3.84 6 3 6.62 1.5 4.8 2.24 3.6 1.56 2.4 0.96 1.2 0.44 0 0Z"/><path d="M0 0 Q8 -7 18 -10 Q26 -8 32.1 -1.1 L30.46 -1.37 28.78 -1.62 27.07 -1.86 25.32 -2.08 23.52 -2.27 23.32 -3.9 21.7 -2.46 19.83 -2.62 17.92 -2.76 15.98 -2.89 14 -3 13.39 -4.51 12.42 -2.7 10.88 -2.4 9.38 -2.1 7.92 -1.8 6.5 -1.5 5.88 -3 5.12 -1.2 3.78 -0.9 2.48 -0.6 1.22 -0.3 0 0Z"/><path d="M-1 1 Q-25 24 -27.5 53.7 M1.5 2 Q-21 27 -24.5 55.9"/><path d="M-8.5 14 l2 1 M-14 24 l2 1 M-19 34 l2 0.8 M-23 44 l2 0.6" stroke-width="1"/></g></g><g transform="translate(520 580)"><g fill="none" stroke-width="2.5" stroke-linejoin="round" stroke-linecap="round"><path d="M-31.7 50.3 C-42 38 -53 26 -54 10 C-55 -5 -54 -12 -47 -16 L16 -44.5 Q19 -46.5 21.5 -43.5 C33 -35 49 -16 54.7 4.8 L59.2 11.1 L47.5 16.5 A11 11 0 0 0 27 25.5 L-1 37 A11 11 0 0 0 -20 47 Z" fill="var(--bg)"/><circle cx="39.4" cy="23.7" r="7.2"/><circle cx="-8.7" cy="44.9" r="7.2"/><path d="M-45 -9 Q-47.9 -7.8 -47.5 -4 L-46.5 14 Q-46 18 -42 16.5 L-20 4 Q-16 2 -18 -1 L-27 -15.5 Q-29 -18.5 -32 -16.5Z"/><path d="M-7 -24 Q-9.2 -23 -8.5 -20 L-1 -9 Q1 -6 4 -8 L28 -20 Q31.5 -22 29.5 -25 L22 -36 Q20 -39 17 -37.5Z"/><path d="M-20 -23 L-5.6 -0.6" stroke-width="1.5"/><path d="M-57.8 -23.5 Q-20 -33 14.5 -49.5 Q17.5 -49 15.5 -46 Q-20 -29 -57.8 -23.5Z" stroke-width="1.8"/><rect x="-4.5" y="-12.5" width="9" height="25" rx="3" transform="translate(54 -10) rotate(-33)" stroke-width="2.2" fill="var(--bg)"/><path d="M-1 33 Q0 28 3 27 Q2.5 30 5.5 30 Q6 25 9 24 Q8.5 27 11.5 27 Q12 22 15 21 Q14.5 24 17.5 24 Q18 19.5 21 18.5 Q20 21 24 22.5" stroke-width="1.8"/><path d="M47 15 L49 10 L52 12 L54 8" stroke-width="1.6"/></g></g></g></g><g transform="translate(838.8 660.1) rotate(45) translate(-520 -580)"><g><g transform="translate(495.5 479) scale(-1 1)"><g fill="none" stroke-width="1.3" stroke-linejoin="round"><path d="M0 0 Q-1 -8 -3.5 -19 Q-6 -26 -11.2 -29.2 L-7.84 -28.28 -4.83 -27.21 -2.17 -25.98 0.13 -24.59 2.08 -23.05 1.23 -21.62 3.67 -21.35 4.91 -19.5 5.79 -17.49 6.32 -15.32 6.5 -13 4.87 -12.93 6.26 -11.43 5.92 -9.92 5.49 -8.47 4.98 -7.08 4.38 -5.75 2.83 -6.26 3.68 -4.48 2.9 -3.27 2.02 -2.12 1.05 -1.03 0 0Z"/><path d="M0 0 Q0 -9 -8 -16.5 Q-15 -19.5 -23.1 -15.9 L-21.67 -15.6 -20.22 -15.26 -18.76 -14.87 -17.28 -14.44 -15.78 -13.97 -15.98 -12.36 -14.26 -13.46 -12.72 -12.91 -11.16 -12.32 -9.59 -11.68 -8 -11 -8.95 -9.68 -7.02 -9.99 -6.08 -8.96 -5.18 -7.91 -4.32 -6.84 -3.5 -5.75 -4.65 -4.61 -2.72 -4.64 -1.98 -3.51 -1.28 -2.36 -0.62 -1.19 0 0Z"/><path d="M0 0 Q-6 -7.5 -15 -8 Q-22 -6.5 -26.3 -1.4 L-24.81 -1.61 -23.27 -1.8 -21.68 -1.96 -20.03 -2.1 -18.32 -2.23 -17.88 -0.65 -16.57 -2.32 -14.76 -2.4 -12.89 -2.46 -10.97 -2.49 -9 -2.5 -9.16 -0.89 -7.83 -2.21 -6.72 -1.92 -5.67 -1.64 -4.68 -1.38 -3.75 -1.12 -4.01 0.46 -2.88 -0.88 -2.07 -0.65 -1.32 -0.42 -0.63 -0.2 0 0Z"/><path d="M0 0 Q-12 -3 -20 2 Q-24 7 -23.1 14.4 L-22.43 12.96 -21.66 11.6 -20.8 10.31 -19.84 9.1 -18.77 7.97 -17.47 8.95 -17.62 6.92 -16.36 5.95 -15 5.06 -13.55 4.24 -12 3.5 -11.3 4.97 -10.44 3.1 -8.96 2.72 -7.56 2.34 -6.24 1.98 -5 1.62 -4.31 3.09 -3.84 1.28 -2.76 0.95 -1.76 0.62 -0.84 0.3 0 0Z"/><path d="M0 0 Q11 5 10.5 14 Q10.5 20 7.9 24.9 L7.14 23.68 6.42 22.38 5.73 20.99 5.08 19.52 4.47 17.98 5.87 17.12 3.9 16.34 3.37 14.63 2.88 12.84 2.42 10.96 2 9 3.48 8.35 1.71 8.01 1.44 7.04 1.19 6.09 0.96 5.16 0.75 4.25 2.28 3.74 0.56 3.36 0.39 2.49 0.24 1.64 0.11 0.81 0 0Z"/><path d="M0 0 Q14 0.5 20 9 Q21.5 17 17.7 22.7 L17.43 21.17 17.09 19.65 16.68 18.14 16.21 16.65 15.68 15.18 17.03 14.27 15.07 13.71 14.4 12.26 13.67 10.83 12.87 9.41 12 8 12.87 6.62 10.8 6.84 9.6 5.76 8.4 4.76 7.2 3.84 6 3 6.62 1.5 4.8 2.24 3.6 1.56 2.4 0.96 1.2 0.44 0 0Z"/><path d="M0 0 Q8 -7 18 -10 Q26 -8 32.1 -1.1 L30.46 -1.37 28.78 -1.62 27.07 -1.86 25.32 -2.08 23.52 -2.27 23.32 -3.9 21.7 -2.46 19.83 -2.62 17.92 -2.76 15.98 -2.89 14 -3 13.39 -4.51 12.42 -2.7 10.88 -2.4 9.38 -2.1 7.92 -1.8 6.5 -1.5 5.88 -3 5.12 -1.2 3.78 -0.9 2.48 -0.6 1.22 -0.3 0 0Z"/><path d="M-1 1 Q-25 24 -27.5 53.7 M1.5 2 Q-21 27 -24.5 55.9"/><path d="M-8.5 14 l2 1 M-14 24 l2 1 M-19 34 l2 0.8 M-23 44 l2 0.6" stroke-width="1"/></g></g><g transform="translate(550.2 507.7) rotate(-15)"><g fill="none" stroke-width="1.3" stroke-linejoin="round"><path d="M0 0 Q-1 -8 -3.5 -19 Q-6 -26 -11.2 -29.2 L-7.84 -28.28 -4.83 -27.21 -2.17 -25.98 0.13 -24.59 2.08 -23.05 1.23 -21.62 3.67 -21.35 4.91 -19.5 5.79 -17.49 6.32 -15.32 6.5 -13 4.87 -12.93 6.26 -11.43 5.92 -9.92 5.49 -8.47 4.98 -7.08 4.38 -5.75 2.83 -6.26 3.68 -4.48 2.9 -3.27 2.02 -2.12 1.05 -1.03 0 0Z"/><path d="M0 0 Q0 -9 -8 -16.5 Q-15 -19.5 -23.1 -15.9 L-21.67 -15.6 -20.22 -15.26 -18.76 -14.87 -17.28 -14.44 -15.78 -13.97 -15.98 -12.36 -14.26 -13.46 -12.72 -12.91 -11.16 -12.32 -9.59 -11.68 -8 -11 -8.95 -9.68 -7.02 -9.99 -6.08 -8.96 -5.18 -7.91 -4.32 -6.84 -3.5 -5.75 -4.65 -4.61 -2.72 -4.64 -1.98 -3.51 -1.28 -2.36 -0.62 -1.19 0 0Z"/><path d="M0 0 Q-6 -7.5 -15 -8 Q-22 -6.5 -26.3 -1.4 L-24.81 -1.61 -23.27 -1.8 -21.68 -1.96 -20.03 -2.1 -18.32 -2.23 -17.88 -0.65 -16.57 -2.32 -14.76 -2.4 -12.89 -2.46 -10.97 -2.49 -9 -2.5 -9.16 -0.89 -7.83 -2.21 -6.72 -1.92 -5.67 -1.64 -4.68 -1.38 -3.75 -1.12 -4.01 0.46 -2.88 -0.88 -2.07 -0.65 -1.32 -0.42 -0.63 -0.2 0 0Z"/><path d="M0 0 Q-12 -3 -20 2 Q-24 7 -23.1 14.4 L-22.43 12.96 -21.66 11.6 -20.8 10.31 -19.84 9.1 -18.77 7.97 -17.47 8.95 -17.62 6.92 -16.36 5.95 -15 5.06 -13.55 4.24 -12 3.5 -11.3 4.97 -10.44 3.1 -8.96 2.72 -7.56 2.34 -6.24 1.98 -5 1.62 -4.31 3.09 -3.84 1.28 -2.76 0.95 -1.76 0.62 -0.84 0.3 0 0Z"/><path d="M0 0 Q11 5 10.5 14 Q10.5 20 7.9 24.9 L7.14 23.68 6.42 22.38 5.73 20.99 5.08 19.52 4.47 17.98 5.87 17.12 3.9 16.34 3.37 14.63 2.88 12.84 2.42 10.96 2 9 3.48 8.35 1.71 8.01 1.44 7.04 1.19 6.09 0.96 5.16 0.75 4.25 2.28 3.74 0.56 3.36 0.39 2.49 0.24 1.64 0.11 0.81 0 0Z"/><path d="M0 0 Q14 0.5 20 9 Q21.5 17 17.7 22.7 L17.43 21.17 17.09 19.65 16.68 18.14 16.21 16.65 15.68 15.18 17.03 14.27 15.07 13.71 14.4 12.26 13.67 10.83 12.87 9.41 12 8 12.87 6.62 10.8 6.84 9.6 5.76 8.4 4.76 7.2 3.84 6 3 6.62 1.5 4.8 2.24 3.6 1.56 2.4 0.96 1.2 0.44 0 0Z"/><path d="M0 0 Q8 -7 18 -10 Q26 -8 32.1 -1.1 L30.46 -1.37 28.78 -1.62 27.07 -1.86 25.32 -2.08 23.52 -2.27 23.32 -3.9 21.7 -2.46 19.83 -2.62 17.92 -2.76 15.98 -2.89 14 -3 13.39 -4.51 12.42 -2.7 10.88 -2.4 9.38 -2.1 7.92 -1.8 6.5 -1.5 5.88 -3 5.12 -1.2 3.78 -0.9 2.48 -0.6 1.22 -0.3 0 0Z"/><path d="M-1 1 Q-25 24 -27.5 53.7 M1.5 2 Q-21 27 -24.5 55.9"/><path d="M-8.5 14 l2 1 M-14 24 l2 1 M-19 34 l2 0.8 M-23 44 l2 0.6" stroke-width="1"/></g></g><g transform="translate(520 580)"><g fill="none" stroke-width="2.5" stroke-linejoin="round" stroke-linecap="round"><path d="M-31.7 50.3 C-42 38 -53 26 -54 10 C-55 -5 -54 -12 -47 -16 L16 -44.5 Q19 -46.5 21.5 -43.5 C33 -35 49 -16 54.7 4.8 L59.2 11.1 L47.5 16.5 A11 11 0 0 0 27 25.5 L-1 37 A11 11 0 0 0 -20 47 Z" fill="var(--bg)"/><circle cx="39.4" cy="23.7" r="7.2"/><circle cx="-8.7" cy="44.9" r="7.2"/><path d="M-45 -9 Q-47.9 -7.8 -47.5 -4 L-46.5 14 Q-46 18 -42 16.5 L-20 4 Q-16 2 -18 -1 L-27 -15.5 Q-29 -18.5 -32 -16.5Z"/><path d="M-7 -24 Q-9.2 -23 -8.5 -20 L-1 -9 Q1 -6 4 -8 L28 -20 Q31.5 -22 29.5 -25 L22 -36 Q20 -39 17 -37.5Z"/><path d="M-20 -23 L-5.6 -0.6" stroke-width="1.5"/><path d="M-57.8 -23.5 Q-20 -33 14.5 -49.5 Q17.5 -49 15.5 -46 Q-20 -29 -57.8 -23.5Z" stroke-width="1.8"/><rect x="-4.5" y="-12.5" width="9" height="25" rx="3" transform="translate(54 -10) rotate(-33)" stroke-width="2.2" fill="var(--bg)"/><path d="M-1 33 Q0 28 3 27 Q2.5 30 5.5 30 Q6 25 9 24 Q8.5 27 11.5 27 Q12 22 15 21 Q14.5 24 17.5 24 Q18 19.5 21 18.5 Q20 21 24 22.5" stroke-width="1.8"/><path d="M47 15 L49 10 L52 12 L54 8" stroke-width="1.6"/></g></g></g></g></g></defs><defs><clipPath id="c235"><rect x="235" y="279.5" width="614.6" height="614.2"/></clipPath></defs><use href="#t1" transform="translate(0 0)" style="color:#6f8d9e;--board:#467577;--sun:#6f8d9e;--bg:#616161;--bw:2.5"/><rect x="235" y="279.5" width="614.6" height="614.2" fill="#e0f2f2"/><rect x="235" y="278.5" width="614.6" height="1" fill="#555"/><rect x="235" y="279.5" width="614.6" height="1" fill="#eefcfc" opacity="0.5"/><g clip-path="url(#c235)"><use href="#t1" transform="translate(0 0)" style="color:#637784;--board:#3e6462;--sun:#6b7f8b;--bg:#e0f2f2;--bw:2.5"/></g><rect x="256.5" y="299.5" width="577.5" height="577.5" fill="none" stroke="#8a8a8a" stroke-width="1.2"/><defs><clipPath id="c943"><rect x="943.7" y="285.6" width="614.6" height="614.3"/></clipPath></defs><use href="#t2" transform="translate(722 0)" style="color:#6e756e;--board:#6e756e;--sun:#6e756e;--bg:#616161;--bw:1.9"/><rect x="943.7" y="285.6" width="614.6" height="614.3" fill="#cbd5c7"/><rect x="943.7" y="284.6" width="614.6" height="1" fill="#555"/><rect x="943.7" y="285.6" width="614.6" height="1" fill="#eefcfc" opacity="0.5"/><g clip-path="url(#c943)"><use href="#t2" transform="translate(722 0)" style="color:#6a716a;--board:#6a716a;--sun:#6b726b;--bg:#cbd5c7;--bw:1.9"/></g><rect x="978.5" y="299.5" width="577.5" height="577.5" fill="none" stroke="#000" stroke-width="1.6"/><defs><clipPath id="c226"><rect x="226.5" y="1029.7" width="614.6" height="614.2"/></clipPath></defs><use href="#t1" transform="translate(-8 750)" style="color:#b3603c;--board:#b3603c;--sun:#b3603c;--bg:#616161;--bw:1.5"/><rect x="226.5" y="1029.7" width="614.6" height="614.2" fill="#dbc2b6"/><rect x="226.5" y="1028.7" width="614.6" height="1" fill="#555"/><rect x="226.5" y="1029.7" width="614.6" height="1" fill="#eefcfc" opacity="0.5"/><g clip-path="url(#c226)"><use href="#t1" transform="translate(-8 750)" style="color:#a2532f;--board:#a2532f;--sun:#a65a39;--bg:#dbc2b6;--bw:1.5"/></g></svg></div>

<!-- menu bar -->
<div id="menubar" class="a">
  <div class="a" style="left:17px;top:12px;width:27px;height:26px;background:#330000;border-radius:4px"></div>
  <div class="t" style="left:22.5px;top:16.5px;font-size:16.5px;font-weight:700;color:#ff9a00;letter-spacing:-0.3px">Ai</div>
  <svg class="a" style="left:68px;top:12px" width="30" height="28" viewBox="0 0 30 28"><path d="M15 1 L29 14.5 Q30 16 28.5 16.5 L25.5 16.5 L25.5 26 Q25.5 27.5 24 27.5 L19.5 27.5 L19.5 19 L10.5 19 L10.5 27.5 L6 27.5 Q4.5 27.5 4.5 26 L4.5 16.5 L1.5 16.5 Q0 16 1 14.5 Z" fill="#c8c8c8"/></svg>
  <div class="a" style="left:123px;top:9px;width:2px;height:33px;background:#4a4a4a"></div>
  <div class="t" style="left:151px;top:15px;font-size:20px">File</div>
  <div class="t" style="left:207px;top:15px;font-size:20px">Edit</div>
  <div class="t" style="left:266px;top:15px;font-size:20px">Object</div>
  <div class="t" style="left:352px;top:15px;font-size:20px">Type</div>
  <div class="t" style="left:419px;top:15px;font-size:20px">Select</div>
  <div class="t" style="left:498px;top:15px;font-size:20px">Effect</div>
  <div class="t" style="left:574px;top:15px;font-size:20px">View</div>
  <div class="t" style="left:640px;top:15px;font-size:20px">Window</div>
  <div class="t" style="left:739px;top:15px;font-size:20px">Help</div>
  <div class="a" style="left:802px;top:8px;width:2px;height:34px;background:#4a4a4a"></div>
  <svg class="a" style="left:828px;top:12px" width="32" height="26" viewBox="0 0 32 26">
    <path d="M4 1.5 H2 V24 H6 M26 1.5 H30 V24 H26" fill="none" stroke="#c8c8c8" stroke-width="2.5"/>
    <path d="M2 1.5 H30" stroke="#c8c8c8" stroke-width="2.5"/>
    <path d="M12 6 Q12 4 14 4 Q16 4 16 6 V13 L17 12 Q19 11 20 12.5 L21 12 Q23 11.5 24 13 Q26 13 26 15 V19 Q26 24 21 25 H17 Q14 25 12 22 L8.5 17 Q7.5 15 9.5 14.5 L12 16 Z" fill="#c8c8c8" stroke="#535353" stroke-width="1"/>
  </svg>
</div>
<div class="line" style="left:0;top:50px;width:1500px;height:2px;background:#3e3e3e"></div>

<!-- control bar -->
<div id="ctrlbar" class="a"></div>
<div class="line" style="left:0;top:108px;width:1500px;height:3px;background:#3b3b3b"></div>

<!-- control bar contents -->
<svg class="a" style="left:9px;top:64px" width="5" height="34"><path d="M2.5 1 V33" stroke="#2e2e2e" stroke-width="3" stroke-dasharray="2 1.5"/></svg>
<div class="t" style="left:25px;top:73px;font-size:17px;color:#dcdcdc">No Selection</div>
<div class="a" style="left:150px;top:59px;width:2px;height:43px;background:#4a4a4a"></div>
<!-- fill -->
<div class="box" style="left:161px;top:64px;width:65px;height:33px"></div>
<div class="a" style="left:162px;top:65px;width:32px;height:32px;background:#fff;border:1px solid #dcdcdc"></div>
<svg class="a" style="left:202px;top:74px" width="16" height="12"><path d="M2 3 L8 9 L14 3" fill="none" stroke="#e8e8e8" stroke-width="2"/></svg>
<!-- stroke -->
<div class="box" style="left:236px;top:64px;width:65px;height:33px"></div>
<div class="a" style="left:237px;top:65px;width:32px;height:32px;background:#000;border:1.5px solid #e0e0e0"></div>
<div class="a" style="left:246px;top:74px;width:14px;height:14px;border:2px solid #e8e8e8"></div>
<div class="a" style="left:250px;top:78px;width:6px;height:6px;background:#e8e8e8"></div>
<svg class="a" style="left:277px;top:74px" width="16" height="12"><path d="M2 3 L8 9 L14 3" fill="none" stroke="#e8e8e8" stroke-width="2"/></svg>
<!-- Stroke label -->
<div class="t" style="left:321px;top:73px;font-size:17px;color:#e8e8e8">Stroke:</div>
<svg class="a" style="left:322px;top:92px" width="54" height="3"><path d="M0 1 H54" stroke="#bdbdbd" stroke-width="1.2" stroke-dasharray="1.5 1.5"/></svg>
<!-- stroke weight -->
<div class="box" style="left:385px;top:64px;width:139px;height:33px"></div>
<div class="a" style="left:416px;top:65px;width:76px;height:31px;background:#454545"></div>
<div class="a" style="left:415px;top:65px;width:1px;height:31px;background:#474747"></div>
<div class="a" style="left:492px;top:65px;width:1px;height:31px;background:#484848"></div>
<svg class="a" style="left:393px;top:67px" width="16" height="28"><path d="M3 9 L8 4 L13 9 M3 19 L8 24 L13 19" fill="none" stroke="#e8e8e8" stroke-width="1.8"/></svg>
<div class="t" style="left:420px;top:73px;font-size:17px;color:#f0f0f0">1 pt</div>
<svg class="a" style="left:499px;top:74px" width="16" height="12"><path d="M2 3 L8 9 L14 3" fill="none" stroke="#e8e8e8" stroke-width="2"/></svg>
<!-- uniform -->
<div class="box" style="left:533px;top:64px;width:184px;height:33px"></div>
<div class="a" style="left:534px;top:65px;width:152px;height:32px;background:#e6e6e6"></div>
<div class="a" style="left:545px;top:80px;width:67px;height:4px;background:#000"></div>
<div class="t" style="left:619px;top:75px;font-size:17px;color:#111">Uniform</div>
<svg class="a" style="left:694px;top:74px" width="16" height="12"><path d="M2 3 L8 9 L14 3" fill="none" stroke="#e8e8e8" stroke-width="2"/></svg>
<!-- brush -->
<div class="box" style="left:727px;top:64px;width:179px;height:33px"></div>
<div class="a" style="left:728px;top:65px;width:146px;height:32px;background:#e6e6e6"></div>
<div class="a" style="left:740px;top:77px;width:9px;height:9px;background:#000;border-radius:50%"></div>
<div class="t" style="left:768px;top:73px;font-size:17px;color:#111">5 pt. Round</div>
<svg class="a" style="left:882px;top:74px" width="16" height="12"><path d="M2 3 L8 9 L14 3" fill="none" stroke="#e8e8e8" stroke-width="2"/></svg>
<!-- opacity -->
<div class="t" style="left:917px;top:73px;font-size:17px;color:#e8e8e8">Opacity:</div>
<svg class="a" style="left:919px;top:92px" width="62" height="3"><path d="M0 1 H62" stroke="#bdbdbd" stroke-width="1.2" stroke-dasharray="1.5 1.5"/></svg>
<div class="box" style="left:991px;top:64px;width:117px;height:33px"></div>
<div class="a" style="left:992px;top:65px;width:85px;height:31px;background:#454545"></div>
<div class="t" style="left:995px;top:73px;font-size:17px;color:#f0f0f0">100%</div>
<svg class="a" style="left:1084px;top:72px" width="12" height="18"><path d="M3 2 L9 9 L3 16" fill="none" stroke="#e8e8e8" stroke-width="2"/></svg>
<!-- style -->
<div class="t" style="left:1116px;top:73px;font-size:17px;color:#bcbcbc">Style:</div>
<div class="box" style="left:1169px;top:64px;width:66px;height:33px"></div>
<div class="a" style="left:1170px;top:65px;width:33px;height:32px;background:#e3e3e3"></div>
<svg class="a" style="left:1211px;top:74px" width="16" height="12"><path d="M2 3 L8 9 L14 3" fill="none" stroke="#e8e8e8" stroke-width="2"/></svg>
<div class="a" style="left:1244px;top:59px;width:2px;height:43px;background:#4a4a4a"></div>
<!-- buttons -->
<div class="a" style="left:1256px;top:65px;width:158px;height:32px;border:1.5px solid #6e6e6e;border-radius:4px"></div>
<div class="t" style="left:1271px;top:73px;font-size:17px;color:#f0f0f0">Document Setup</div>
<div class="a" style="left:1422px;top:65px;width:120px;height:32px;border:1.5px solid #6e6e6e;border-radius:4px"></div>
<div class="t" style="left:1437px;top:73px;font-size:17px;color:#f0f0f0">Preferences</div>


<!-- left toolbar -->
<div class="a" style="left:0;top:111px;width:125px;height:1276px;background:#3e3e3e"></div>
<div class="a" style="left:2px;top:111px;width:119px;height:18px;background:#434343"></div>
<div class="a" style="left:2px;top:131px;width:119px;height:1256px;background:#535353"></div>
<svg class="a" style="left:0;top:0" width="125" height="1387" viewBox="0 0 125 1387">
<path d="M16.5 115.5 L12 119.5 L16.5 123.5 M23 115.5 L18.5 119.5 L23 123.5" fill="none" stroke="#d0d0d0" stroke-width="1.3"/>
<path d="M44.5 140 H76" stroke="#2e2e2e" stroke-width="5.5" stroke-dasharray="1.3 1.9"/>
<path d="M28.5 171.5 V197.5 L35.8 189.5 H47 Z" fill="none" stroke="#c8c8c8" stroke-width="2" stroke-linejoin="miter"/><path d="M79 170.5 V199 L87 190 H99.5 Z" fill="#c8c8c8"/><path d="M110 194.5 V201.5 H103 Z" fill="#c8c8c8"/><path d="M25 237 L42 220" stroke="#c8c8c8" stroke-width="4" stroke-linecap="round"/><path d="M31 212 L32.3 216.7 L37 218 L32.3 219.3 L31 224 L29.7 219.3 L25 218 L29.7 216.7 Z" fill="#c8c8c8"/><path d="M45.5 211 L46.5 214.5 L50 215.5 L46.5 216.5 L45.5 220 L44.5 216.5 L41 215.5 L44.5 214.5 Z" fill="#c8c8c8"/><path d="M46.5 222.5 L47.3 225.2 L50 226 L47.3 226.8 L46.5 229.5 L45.7 226.8 L43 226 L45.7 225.2 Z" fill="#c8c8c8"/><path d="M88 216 V239.5 L94.5 232 H104.5 Z" fill="#c8c8c8"/><path d="M99 227 Q103 219 96 214 Q88 210 80 213 Q73 216 74 222 Q75 227 80 227 Q86 226 84 221 Q80 218 78 222 Q77 226 82 229 Q86 232 82 236 L79 237" fill="none" stroke="#c8c8c8" stroke-width="1.6"/><g transform="translate(36,266) rotate(45) scale(1.2)"><rect x="-4.5" y="-17" width="9" height="7" rx="1" fill="#c8c8c8"/><path d="M-6.5 -8 H6.5 L8 0 L0 14 L-8 0 Z" fill="#c8c8c8"/><path d="M0 1.5 V13" stroke="#535353" stroke-width="1.2"/><circle cx="0" cy="1" r="1.8" fill="#535353"/></g><path d="M59 274.5 V281.5 H52 Z" fill="#c8c8c8"/><g transform="translate(88,266) rotate(45) scale(1.2)"><rect x="-4.5" y="-17" width="9" height="7" rx="1" fill="#c8c8c8"/><path d="M-6.5 -8 H6.5 L8 0 L0 14 L-8 0 Z" fill="#c8c8c8"/><path d="M0 1.5 V13" stroke="#535353" stroke-width="1.2"/><circle cx="0" cy="1" r="1.8" fill="#535353"/></g><path d="M72 252 Q78 254 76 262 Q72 272 75 277 Q77 280 81 279" fill="none" stroke="#c8c8c8" stroke-width="1.6"/><path d="M25.5 300.5 V295.5 H47 V300.5 M36.3 295.5 V317 M31.5 317 H41" fill="none" stroke="#c8c8c8" stroke-width="3" stroke-linecap="round" stroke-linejoin="round"/><path d="M59 317.5 V324.5 H52 Z" fill="#c8c8c8"/><path d="M76.5 317 L98.5 296" stroke="#c8c8c8" stroke-width="2.6" stroke-linecap="round"/><path d="M110 317.5 V324.5 H103 Z" fill="#c8c8c8"/><rect x="24" y="336" width="25.5" height="22.5" rx="1" fill="#6a6a6a" stroke="#c8c8c8" stroke-width="2"/><path d="M59 358.5 V365.5 H52 Z" fill="#c8c8c8"/><path d="M98.5 334.5 Q101 334 100 337 L86 352 L82 348 L96 335.5 Z" fill="#c8c8c8"/><path d="M81 349.5 L84.5 353 Q83 360 73.5 360 Q77 357 76 354 Q77 350 81 349.5 Z" fill="#c8c8c8"/><path d="M110 358.5 V365.5 H103 Z" fill="#c8c8c8"/><path d="M28 399 Q19 394 20.5 385 Q22.5 376 31 376 Q38 376 40 383" fill="#6a6a6a" stroke="#c8c8c8" stroke-width="2"/><path d="M46 379 Q48 377.5 49.5 379 Q51 380.5 49.5 382 L33 399.5 L29.5 400.5 L30.5 397 Z" fill="#c8c8c8"/><path d="M59 399.5 V406.5 H52 Z" fill="#c8c8c8"/><g transform="translate(88,387) rotate(45)"><rect x="-7" y="-12" width="14" height="17" rx="1.5" fill="#c8c8c8"/><rect x="-6" y="5" width="12" height="7" rx="1.5" fill="none" stroke="#c8c8c8" stroke-width="1.8"/></g><path d="M110 399.5 V406.5 H103 Z" fill="#c8c8c8"/><path d="M24.5 423 Q31 415 39 418 Q47 422 45.5 432" fill="none" stroke="#c8c8c8" stroke-width="2.2"/><path d="M23 416 L24.5 426 L32 422 Z" fill="#c8c8c8"/><path d="M24 435 Q27 441 35 442 Q42 442 45 437" fill="none" stroke="#c8c8c8" stroke-width="1.6" stroke-dasharray="1.2 2.2"/><path d="M59 440.5 V447.5 H52 Z" fill="#c8c8c8"/><rect x="79.5" y="415.5" width="22" height="19" fill="none" stroke="#c8c8c8" stroke-width="1.8"/><rect x="72.5" y="427" width="16" height="15" fill="none" stroke="#c8c8c8" stroke-width="1.8"/><path d="M91 424 L98 418 M93.5 418 H98.5 V423" fill="none" stroke="#c8c8c8" stroke-width="1.8"/><path d="M110 440.5 V447.5 H103 Z" fill="#c8c8c8"/><path d="M25 459 Q24 456 28 457 Q32 459 31 465 Q30 471 35 470 Q40 466 46 465 Q51 466 50 472 Q49 475 47 472 Q45 469 42 472 Q37 478 30 476 Q24 473 27 467 Q29 463 25 459 Z" fill="#c8c8c8"/><path d="M22.5 482 L40 463" stroke="#c8c8c8" stroke-width="1.5"/><circle cx="23.5" cy="481" r="2.3" fill="#535353" stroke="#c8c8c8" stroke-width="1.5"/><circle cx="40.5" cy="462.5" r="2.3" fill="#535353" stroke="#c8c8c8" stroke-width="1.5"/><circle cx="31.5" cy="472" r="2" fill="#535353" stroke="#c8c8c8" stroke-width="1.3"/><path d="M59 481.5 V488.5 H52 Z" fill="#c8c8c8"/><path d="M72 455 V483 L79 475 H89 Z" fill="#c8c8c8"/><path d="M82 460 H102 V482 H82 V476" fill="none" stroke="#c8c8c8" stroke-width="1.8"/><path d="M81 458.5 h3 v3 h-3z M88 458.5 h3 v3 h-3z M99.5 458.5 h3 v3 h-3z M99.5 469 h3 v3 h-3z M99.5 480.5 h3 v3 h-3z M88 480.5 h3 v3 h-3z M81 480.5 h3 v3 h-3z" fill="#c8c8c8"/><path d="M110 481.5 V488.5 H103 Z" fill="#c8c8c8"/><path d="M34 518 Q21 518 21 508 Q21 498 32 497.5 Q36 497 38 499 Q47 497 48 507" fill="none" stroke="#c8c8c8" stroke-width="1.8"/><path d="M26 507 H38" stroke="#c8c8c8" stroke-width="1.8" stroke-dasharray="1.6 1.8"/><path d="M41.5 506.5 V524.5 L46 519.5 H54.5 Z" fill="#c8c8c8"/><path d="M59 522 V529 H52 Z" fill="#c8c8c8"/><path d="M73 497.5 L90 502 V514 L73 523 Z M73 506 H90 M73 514 H90 M81 499.5 V518.5" fill="none" stroke="#c8c8c8" stroke-width="1.6"/><path d="M82 509 H93 M85 514 H96 M88 518.5 H99 M75 523 H102" stroke="#c8c8c8" stroke-width="1.4" opacity="0.8"/><path d="M110 522 V529 H103 Z" fill="#c8c8c8"/><rect x="23.5" y="540" width="26" height="22.5" fill="none" stroke="#c8c8c8" stroke-width="1.8"/><path d="M23.5 549 Q33 545 37 540 M24 558 Q32 550 42 552 Q48 553 49.5 549 M30 562.5 Q31 552 37 546 Q42 542 47 546 M41 562.5 Q44 556 49.5 555" fill="none" stroke="#c8c8c8" stroke-width="1.6"/><defs><linearGradient id="gr" x1="0" x2="1"><stop offset="0" stop-color="#111"/><stop offset="1" stop-color="#eee"/></linearGradient><linearGradient id="gr2" x1="0" x2="1"><stop offset="0" stop-color="#f0f0f0"/><stop offset="1" stop-color="#000"/></linearGradient></defs><rect x="74.5" y="540" width="26" height="22.5" fill="url(#gr)" stroke="#c8c8c8" stroke-width="1.8"/><g transform="translate(36,592) rotate(45)"><rect x="-4" y="-16" width="8" height="8" rx="3" fill="#c8c8c8"/><rect x="-6" y="-9.5" width="12" height="4" rx="1" fill="#c8c8c8"/><path d="M-3 -5 V10 Q-3 15 0 16.5 Q3 15 3 10 V-5" fill="none" stroke="#c8c8c8" stroke-width="1.8"/></g><path d="M59 604 V611 H52 Z" fill="#c8c8c8"/><rect x="72" y="580" width="13" height="13" fill="#c8c8c8"/><rect x="80" y="586" width="13" height="13" rx="4" fill="#7a7a7a" stroke="#c8c8c8" stroke-width="1.8"/><circle cx="95.5" cy="597" r="6.5" fill="#535353" stroke="#c8c8c8" stroke-width="1.8"/><circle cx="22.5" cy="622" r="1.7" fill="#c8c8c8"/><circle cx="27.5" cy="622" r="1.7" fill="#c8c8c8"/><circle cx="32.5" cy="622" r="1.7" fill="#c8c8c8"/><circle cx="22.5" cy="627.5" r="1.7" fill="#c8c8c8"/><circle cx="27.5" cy="627.5" r="1.7" fill="#c8c8c8"/><circle cx="22.5" cy="633" r="1.7" fill="#c8c8c8"/><rect x="39" y="619.5" width="7" height="4" fill="#c8c8c8"/><rect x="35.5" y="624.5" width="15" height="21" rx="1.5" fill="none" stroke="#c8c8c8" stroke-width="1.8"/><circle cx="43" cy="636" r="3.2" fill="none" stroke="#c8c8c8" stroke-width="2"/><path d="M59 644 V651 H52 Z" fill="#c8c8c8"/><path d="M73 619 V644.5 H102.5" fill="none" stroke="#c8c8c8" stroke-width="1.8"/><rect x="78" y="631" width="5" height="13" fill="#c8c8c8"/><rect x="87" y="621" width="5" height="23" fill="#c8c8c8"/><rect x="95.5" y="625" width="5" height="19" fill="#c8c8c8"/><path d="M110 644 V651 H103 Z" fill="#c8c8c8"/><path d="M28.5 658 V666 M19 667 H27" stroke="#c8c8c8" stroke-width="1.6"/><path d="M28 668 H42 L48 674 V686 H28 Z" fill="#6a6a6a" stroke="#c8c8c8" stroke-width="1.8"/><path d="M42 668 V674 H48" fill="none" stroke="#c8c8c8" stroke-width="1.4"/><g transform="translate(87,673) rotate(40)"><rect x="-4.5" y="-15" width="9" height="6" rx="1" fill="#c8c8c8"/><path d="M-4 -9 L-2 16 L4 -9" fill="none" stroke="#c8c8c8" stroke-width="1.8"/></g><path d="M110 680 V687 H103 Z" fill="#c8c8c8"/><path d="M31.5 714 V704.5 M35.8 713 V700.8 M40.2 713 V702 M44.3 714 L45.8 706.5 M31 718.5 L24 711.5" stroke="#c8c8c8" stroke-width="3.6" stroke-linecap="round"/><path d="M29.5 712 H47 V718 Q47 727.5 38 727.5 Q32 727.5 29 721 Z" fill="#c8c8c8"/><path d="M59 721 V728 H52 Z" fill="#c8c8c8"/><circle cx="84.5" cy="711.5" r="9.5" fill="none" stroke="#c8c8c8" stroke-width="2.2"/><path d="M91.5 718.5 L99.5 726.5" stroke="#c8c8c8" stroke-width="3.2" stroke-linecap="round"/>
<path d="M10 740 H113" stroke="#474747" stroke-width="1"/>
<rect x="12" y="748" width="59" height="59" fill="#fff" stroke="#9a9a9a" stroke-width="1"/>
<rect x="42.5" y="778.5" width="59" height="59" fill="#000" stroke="#e8e8e8" stroke-width="1.4"/>
<rect x="58.5" y="794.5" width="28" height="28" fill="#535353" stroke="#f0f0f0" stroke-width="1.6"/>
<path d="M90 755 Q99 753 100 764" fill="none" stroke="#c8c8c8" stroke-width="2.2"/><path d="M86 755 L92 750.5 V759.5 Z M95 762 H105 L100 768 Z" fill="#c8c8c8"/>
<rect x="15" y="822" width="12" height="12" fill="#000" stroke="#e8e8e8" stroke-width="1.4"/>
<rect x="12" y="819" width="12" height="12" fill="#fff" stroke="#111" stroke-width="1.4"/>
<rect x="11.5" y="849.5" width="99" height="34" rx="2" fill="#4f4f4f" stroke="#4a4a4a"/>
<rect x="12" y="850" width="31" height="33" fill="#3a3a3a"/>
<path d="M43.5 850 V883 M77 850 V883" stroke="#4a4a4a"/>
<rect x="16" y="856" width="22" height="22" fill="#333" stroke="#000" stroke-width="2.2"/>
<rect x="50.5" y="856" width="21" height="22" fill="url(#gr2)" stroke="#000" stroke-width="2.2"/>
<rect x="84.5" y="856" width="21" height="22" fill="#fff" stroke="#000" stroke-width="2.2"/>
<path d="M85.5 877 L104.5 857" stroke="#ff1a1a" stroke-width="3"/>
<rect x="11.5" y="892.5" width="99" height="30" rx="2" fill="#4f4f4f" stroke="#4a4a4a"/>
<rect x="12" y="893" width="31" height="29" fill="#383838"/>
<path d="M43.5 893 V922 M77 893 V922" stroke="#4a4a4a"/>
<circle cx="25" cy="906" r="5.5" fill="#7a7a7a" stroke="#c8c8c8" stroke-width="1.5"/><rect x="27" y="907" width="9.5" height="9.5" fill="#c8c8c8"/>
<circle cx="58" cy="906" r="5.5" fill="none" stroke="#c8c8c8" stroke-width="1.5"/><rect x="60" y="909" width="9" height="8" fill="#c8c8c8"/>
<circle cx="94" cy="907" r="5" fill="none" stroke="#6c6c6c" stroke-width="1.5"/><path d="M94 907 H99 A5 5 0 0 1 94 912 Z" fill="#6c6c6c"/>
<rect x="43" y="946" width="22" height="19" fill="#6a6a6a" stroke="#c8c8c8" stroke-width="1.6"/>
<rect x="57.5" y="938.5" width="22" height="19" fill="#6a6a6a" stroke="#c8c8c8" stroke-width="1.6"/>
<path d="M43 948.5 H65 M57.5 941 H79.5" stroke="#c8c8c8" stroke-width="2"/>
<circle cx="52.5" cy="1005.5" r="2.8" fill="#c8c8c8"/><circle cx="61.5" cy="1005.5" r="2.8" fill="#c8c8c8"/><circle cx="70.5" cy="1005.5" r="2.8" fill="#c8c8c8"/>
</svg>
<div class="a" style="left:121px;top:111px;width:4px;height:1276px;background:#3a3a3a"></div>


<!-- status bar -->
<div class="a" style="left:125px;top:1359px;width:1375px;height:28px;background:#4b4b4b"></div>
<div class="a" style="left:125px;top:1358px;width:1375px;height:1px;background:#474747"></div>
<div class="a" style="left:133px;top:1361px;width:115px;height:26px;background:#4f4f4f;border:1px solid #494949;border-radius:3px 3px 0 0"></div>
<div class="a" style="left:134px;top:1362px;width:84px;height:25px;background:#424242"></div>
<div class="t" style="left:135px;top:1368px;font-size:17px;color:#f0f0f0">25%</div>
<svg class="a" style="left:225px;top:1370px" width="16" height="12"><path d="M2 3 L8 9 L14 3" fill="none" stroke="#e8e8e8" stroke-width="2"/></svg>
<div class="a" style="left:256px;top:1361px;width:117px;height:26px;background:#4f4f4f;border:1px solid #494949;border-radius:3px 3px 0 0"></div>
<div class="a" style="left:257px;top:1362px;width:86px;height:25px;background:#424242"></div>
<div class="t" style="left:259px;top:1368px;font-size:17px;color:#f0f0f0">0°</div>
<svg class="a" style="left:348px;top:1370px" width="16" height="12"><path d="M2 3 L8 9 L14 3" fill="none" stroke="#e8e8e8" stroke-width="2"/></svg>
<div class="a" style="left:374px;top:1361px;width:67px;height:26px;background:#4f4f4f"></div>
<svg class="a" style="left:380px;top:1362px" width="60" height="24"><path d="M8 4 H11 V19 H8 Z M11.5 11.5 L20 4 V19 Z M36 11.5 L45 4 V19 Z" fill="#c0c0c0"/></svg>
<div class="a" style="left:443px;top:1361px;width:100px;height:26px;background:#4f4f4f;border:1px solid #494949;border-radius:3px 3px 0 0"></div>
<div class="a" style="left:444px;top:1362px;width:69px;height:25px;background:#424242"></div>
<div class="t" style="left:446px;top:1368px;font-size:17px;color:#f0f0f0">2</div>
<svg class="a" style="left:518px;top:1370px" width="16" height="12"><path d="M2 3 L8 9 L14 3" fill="none" stroke="#e8e8e8" stroke-width="2"/></svg>
<div class="a" style="left:544px;top:1361px;width:68px;height:26px;background:#4f4f4f"></div>
<svg class="a" style="left:550px;top:1362px" width="60" height="24"><path d="M8 4 L17 11.5 L8 19 Z M30 4 L39 11.5 L30 19 Z M40 4 H43 V19 H40 Z" fill="#6a6a6a"/></svg>
<div class="a" style="left:614px;top:1361px;width:340px;height:26px;background:#4f4f4f"></div>
<div class="t" style="left:723px;top:1369px;font-size:17px;color:#c8c8c8">Toggle Selection</div>
<div class="a" style="left:955px;top:1359px;width:30px;height:28px;background:#535353"></div>
<svg class="a" style="left:960px;top:1364px" width="20" height="20"><path d="M6 3 L14 10 L6 17 Z" fill="#c8c8c8"/></svg>
<svg class="a" style="left:990px;top:1363px" width="14" height="18"><path d="M10 3 L5 8.5 L10 14" fill="none" stroke="#b0b0b0" stroke-width="1.6"/></svg>

<!-- tab bar -->
<div class="a" style="left:125px;top:111px;width:1375px;height:48px;background:#404040"></div>
<div class="a" style="left:126px;top:111px;width:538px;height:48px;background:#535353"></div>
<div class="line" style="left:125px;top:158px;width:1375px;height:2px;background:#393939"></div>
<svg class="a" style="left:141px;top:111px" width="73" height="46" viewBox="0 0 73 46"><path d="M8 45 Q0 45 0 36 Q0 27 9 26 Q8 14 19 11 Q25 10 28 12 Q31 0 44 0 Q56 0 59 15 Q71 17 72.5 31 Q72.5 45 60 45 Z" fill="#c2c2c2"/></svg>
<div class="t" style="left:225px;top:127px;font-size:18.3px;font-weight:700;color:#f2f2f2">SummerLovinA.aic @ 25 % (CMYK/Preview)</div>
<svg class="a" style="left:640px;top:128px" width="13" height="13"><path d="M1 1 L12 12 M12 1 L1 12" stroke="#e8e8e8" stroke-width="1.6"/></svg>
</body></html>
